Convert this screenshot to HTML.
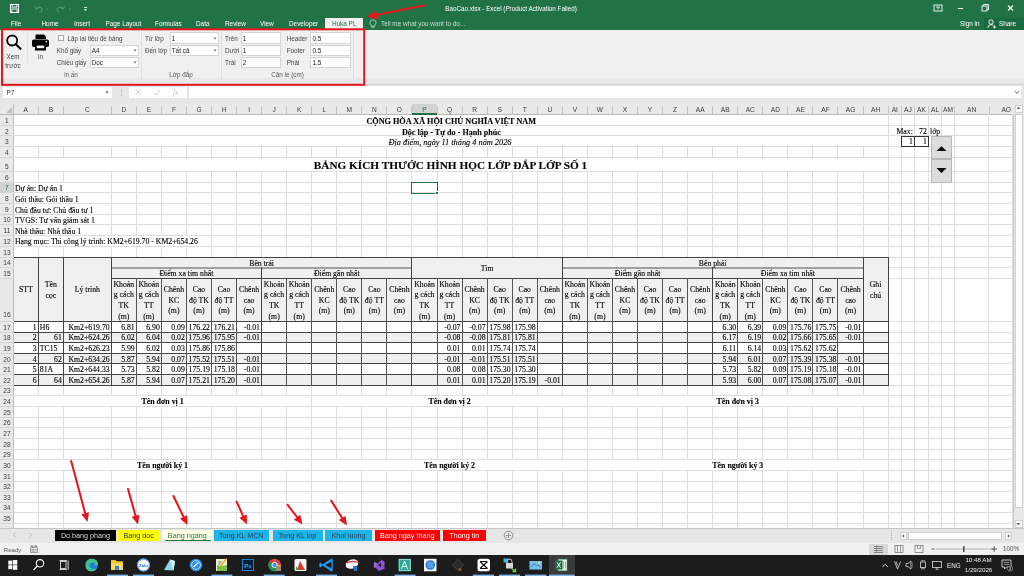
<!DOCTYPE html><html><head><meta charset="utf-8"><title>BaoCao.xlsx - Excel</title>
<style>
html{background:#fff;}
html,body{margin:0;padding:0;}
body{width:1024px;height:576px;overflow:hidden;position:relative;will-change:transform;font-family:"Liberation Sans",sans-serif;}
div{box-sizing:border-box;}
.s{font-family:"Liberation Serif",serif;}
.t{-webkit-text-stroke:0.12px currentColor;}
</style></head><body>
<div style="position:absolute;left:0.00px;top:0.00px;width:1024.00px;height:29.50px;background:#217346;"></div>
<svg style="position:absolute;left:9px;top:3px" width="11" height="11" viewBox="0 0 11 11"><rect x="1.5" y="1.5" width="8" height="8" fill="none" stroke="#fff" stroke-width="1.1"/><rect x="3.2" y="1.5" width="4.6" height="2.6" fill="none" stroke="#fff" stroke-width="0.9"/><rect x="3" y="6" width="5" height="3.5" fill="none" stroke="#fff" stroke-width="0.9"/></svg>
<svg style="position:absolute;left:33px;top:4px" width="60" height="10" viewBox="0 0 60 10">
<path d="M3 4.5 Q7 1.5 9 5 Q9.5 8 6.5 8.5" fill="none" stroke="#5f9c7a" stroke-width="1"/><path d="M1.5 2.5 L3 5 L5.5 3.8" fill="none" stroke="#5f9c7a" stroke-width="1"/>
<path d="M13 5 h2" stroke="#5f9c7a" stroke-width="0.8"/>
<path d="M30 4.5 Q26 1.5 24 5 Q23.5 8 26.5 8.5" fill="none" stroke="#5f9c7a" stroke-width="1"/><path d="M31.5 2.5 L30 5 L27.5 3.8" fill="none" stroke="#5f9c7a" stroke-width="1"/>
<path d="M36 5 h2" stroke="#5f9c7a" stroke-width="0.8"/>
<path d="M51 3.5 h3" stroke="#fff" stroke-width="0.8"/><path d="M51 5.2 L52.5 7 L54 5.2 Z" fill="#fff"/>
</svg>
<div style="position:absolute;left:511.00px;top:4.52px;line-height:7.56px;font-size:6.3px;font-family:'Liberation Sans',sans-serif;color:#fff;font-weight:normal;white-space:nowrap;transform:translateX(-50%);">BaoCao.xlsx - Excel (Product Activation Failed)</div>
<svg style="position:absolute;left:930px;top:2px" width="94" height="12" viewBox="0 0 94 12">
<rect x="4" y="3" width="8" height="6" fill="none" stroke="#fff" stroke-width="0.9"/><path d="M6 5 h4 M8 5 v2.5" stroke="#fff" stroke-width="0.8"/>
<path d="M28 6.5 h5" stroke="#fff" stroke-width="1"/>
<rect x="52" y="4" width="5" height="5" fill="none" stroke="#fff" stroke-width="0.9"/><path d="M53.5 4 v-1.5 h5 v5 h-1.5" fill="none" stroke="#fff" stroke-width="0.9"/>
<path d="M78 3.5 l5 5 M83 3.5 l-5 5" stroke="#fff" stroke-width="1.1"/>
</svg>
<div style="position:absolute;left:11.00px;top:20.46px;line-height:7.68px;font-size:6.4px;font-family:'Liberation Sans',sans-serif;color:#fff;font-weight:normal;white-space:nowrap;">File</div>
<div style="position:absolute;left:41.50px;top:20.46px;line-height:7.68px;font-size:6.4px;font-family:'Liberation Sans',sans-serif;color:#fff;font-weight:normal;white-space:nowrap;">Home</div>
<div style="position:absolute;left:74.00px;top:20.46px;line-height:7.68px;font-size:6.4px;font-family:'Liberation Sans',sans-serif;color:#fff;font-weight:normal;white-space:nowrap;">Insert</div>
<div style="position:absolute;left:105.50px;top:20.46px;line-height:7.68px;font-size:6.4px;font-family:'Liberation Sans',sans-serif;color:#fff;font-weight:normal;white-space:nowrap;">Page Layout</div>
<div style="position:absolute;left:155.00px;top:20.46px;line-height:7.68px;font-size:6.4px;font-family:'Liberation Sans',sans-serif;color:#fff;font-weight:normal;white-space:nowrap;">Formulas</div>
<div style="position:absolute;left:196.00px;top:20.46px;line-height:7.68px;font-size:6.4px;font-family:'Liberation Sans',sans-serif;color:#fff;font-weight:normal;white-space:nowrap;">Data</div>
<div style="position:absolute;left:225.00px;top:20.46px;line-height:7.68px;font-size:6.4px;font-family:'Liberation Sans',sans-serif;color:#fff;font-weight:normal;white-space:nowrap;">Review</div>
<div style="position:absolute;left:260.00px;top:20.46px;line-height:7.68px;font-size:6.4px;font-family:'Liberation Sans',sans-serif;color:#fff;font-weight:normal;white-space:nowrap;">View</div>
<div style="position:absolute;left:289.00px;top:20.46px;line-height:7.68px;font-size:6.4px;font-family:'Liberation Sans',sans-serif;color:#fff;font-weight:normal;white-space:nowrap;">Developer</div>
<div style="position:absolute;left:325.20px;top:17.60px;width:38.10px;height:12.00px;background:#f0f0f0;"></div>
<div style="position:absolute;left:344.20px;top:20.46px;line-height:7.68px;font-size:6.4px;font-family:'Liberation Sans',sans-serif;color:#217346;font-weight:normal;white-space:nowrap;transform:translateX(-50%);">Huka PL</div>
<svg style="position:absolute;left:369px;top:19px" width="8" height="10" viewBox="0 0 8 10"><path d="M2.2 6.2 Q0.8 4.8 1 3.2 Q1.3 0.9 4 0.8 Q6.7 0.9 7 3.2 Q7.2 4.8 5.8 6.2 V7.2 H2.2 Z" fill="none" stroke="#c9ddd0" stroke-width="0.8"/><path d="M2.6 8.3 h2.8" stroke="#c9ddd0" stroke-width="0.8"/></svg>
<div style="position:absolute;left:381.00px;top:20.46px;line-height:7.68px;font-size:6.4px;font-family:'Liberation Sans',sans-serif;color:#c9ddd0;font-weight:normal;white-space:nowrap;">Tell me what you want to do...</div>
<div style="position:absolute;left:960.00px;top:20.46px;line-height:7.68px;font-size:6.4px;font-family:'Liberation Sans',sans-serif;color:#fff;font-weight:normal;white-space:nowrap;">Sign in</div>
<div style="position:absolute;left:984.00px;top:17.50px;width:40.00px;height:12.00px;background:#1b6a3f;"></div>
<svg style="position:absolute;left:987px;top:19px" width="10" height="10" viewBox="0 0 10 10"><circle cx="4" cy="3" r="2.2" fill="none" stroke="#fff" stroke-width="0.9"/><path d="M0.8 9 Q1 5.6 4 5.6 Q5.8 5.6 6.6 6.8" fill="none" stroke="#fff" stroke-width="0.9"/><path d="M7.5 6.5 v3 M6 8 h3" stroke="#fff" stroke-width="0.9"/></svg>
<div style="position:absolute;left:999.00px;top:20.46px;line-height:7.68px;font-size:6.4px;font-family:'Liberation Sans',sans-serif;color:#fff;font-weight:normal;white-space:nowrap;">Share</div>
<div style="position:absolute;left:0.00px;top:29.50px;width:1024.00px;height:48.00px;background:#f0f0f0;"></div>
<div style="position:absolute;left:0.00px;top:78.20px;width:1024.00px;height:6.80px;background:#e8e8e8;"></div>
<div style="position:absolute;left:0.00px;top:84.40px;width:1024.00px;height:1.00px;background:#d2d2d2;"></div>
<svg style="position:absolute;left:5px;top:34px" width="18" height="16" viewBox="0 0 18 16"><circle cx="7.2" cy="6.5" r="5" fill="none" stroke="#000" stroke-width="1.8"/><path d="M10.8 10.2 L15.5 14.8" stroke="#000" stroke-width="2.1" stroke-linecap="round"/></svg>
<div style="position:absolute;left:13.00px;top:53.22px;line-height:7.56px;font-size:6.3px;font-family:'Liberation Sans',sans-serif;color:#444;font-weight:normal;white-space:nowrap;transform:translateX(-50%);">Xem</div>
<div style="position:absolute;left:13.00px;top:61.72px;line-height:7.56px;font-size:6.3px;font-family:'Liberation Sans',sans-serif;color:#444;font-weight:normal;white-space:nowrap;transform:translateX(-50%);">trước</div>
<svg style="position:absolute;left:31px;top:33px" width="19" height="19" viewBox="0 0 19 19"><path d="M4.5 1.5 h8.5 l2 2 v2.5 h-10.5 z" fill="#000"/><rect x="1" y="6.5" width="17" height="7.5" rx="1.8" fill="#000"/><rect x="4" y="11" width="11" height="6.5" fill="#000"/><rect x="5.8" y="12.6" width="7.4" height="2.6" fill="#fff"/><circle cx="15.3" cy="8.6" r="0.8" fill="#fff"/></svg>
<div style="position:absolute;left:40.50px;top:53.22px;line-height:7.56px;font-size:6.3px;font-family:'Liberation Sans',sans-serif;color:#444;font-weight:normal;white-space:nowrap;transform:translateX(-50%);">in</div>
<div style="position:absolute;left:27.00px;top:33.00px;width:1.00px;height:30.00px;background:#e2e2e2;"></div>
<div style="position:absolute;left:58.40px;top:35.40px;width:6.00px;height:5.50px;background:#fff;border:0.8px solid #a8a8a8;"></div>
<div style="position:absolute;left:67.60px;top:34.72px;line-height:7.56px;font-size:6.3px;font-family:'Liberation Sans',sans-serif;color:#444;font-weight:normal;white-space:nowrap;">Lặp lại tiêu đề bảng</div>
<div style="position:absolute;left:56.70px;top:47.02px;line-height:7.56px;font-size:6.3px;font-family:'Liberation Sans',sans-serif;color:#444;font-weight:normal;white-space:nowrap;">Khổ giấy</div>
<div style="position:absolute;left:56.70px;top:59.32px;line-height:7.56px;font-size:6.3px;font-family:'Liberation Sans',sans-serif;color:#444;font-weight:normal;white-space:nowrap;">Chiều giấy</div>
<div style="position:absolute;left:89.50px;top:44.70px;width:49.80px;height:11.40px;background:#fff;border:0.8px solid #d4d4d4;"></div>
<div style="position:absolute;left:91.70px;top:47.06px;line-height:7.68px;font-size:6.4px;font-family:'Liberation Sans',sans-serif;color:#222;font-weight:normal;white-space:nowrap;">A4</div>
<svg style="position:absolute;left:133.30px;top:48.90px" width="4" height="3" viewBox="0 0 4 3"><path d="M0.3 0.6 h3.4 L2 2.4 z" fill="#777"/></svg>
<div style="position:absolute;left:89.50px;top:57.00px;width:49.80px;height:11.20px;background:#fff;border:0.8px solid #d4d4d4;"></div>
<div style="position:absolute;left:91.70px;top:59.26px;line-height:7.68px;font-size:6.4px;font-family:'Liberation Sans',sans-serif;color:#222;font-weight:normal;white-space:nowrap;">Dọc</div>
<svg style="position:absolute;left:133.30px;top:61.10px" width="4" height="3" viewBox="0 0 4 3"><path d="M0.3 0.6 h3.4 L2 2.4 z" fill="#777"/></svg>
<div style="position:absolute;left:71.00px;top:71.32px;line-height:7.56px;font-size:6.3px;font-family:'Liberation Sans',sans-serif;color:#555;font-weight:normal;white-space:nowrap;transform:translateX(-50%);">in ấn</div>
<div style="position:absolute;left:141.40px;top:32.00px;width:0.80px;height:47.00px;background:#dcdcdc;"></div>
<div style="position:absolute;left:144.90px;top:34.72px;line-height:7.56px;font-size:6.3px;font-family:'Liberation Sans',sans-serif;color:#444;font-weight:normal;white-space:nowrap;">Từ lớp</div>
<div style="position:absolute;left:144.90px;top:47.02px;line-height:7.56px;font-size:6.3px;font-family:'Liberation Sans',sans-serif;color:#444;font-weight:normal;white-space:nowrap;">Đến lớp</div>
<div style="position:absolute;left:169.50px;top:32.40px;width:49.50px;height:11.40px;background:#fff;border:0.8px solid #d4d4d4;"></div>
<div style="position:absolute;left:171.70px;top:34.76px;line-height:7.68px;font-size:6.4px;font-family:'Liberation Sans',sans-serif;color:#222;font-weight:normal;white-space:nowrap;">1</div>
<svg style="position:absolute;left:213.00px;top:36.60px" width="4" height="3" viewBox="0 0 4 3"><path d="M0.3 0.6 h3.4 L2 2.4 z" fill="#777"/></svg>
<div style="position:absolute;left:169.50px;top:44.70px;width:49.50px;height:11.40px;background:#fff;border:0.8px solid #d4d4d4;"></div>
<div style="position:absolute;left:171.70px;top:47.06px;line-height:7.68px;font-size:6.4px;font-family:'Liberation Sans',sans-serif;color:#222;font-weight:normal;white-space:nowrap;">Tất cả</div>
<svg style="position:absolute;left:213.00px;top:48.90px" width="4" height="3" viewBox="0 0 4 3"><path d="M0.3 0.6 h3.4 L2 2.4 z" fill="#777"/></svg>
<div style="position:absolute;left:181.00px;top:71.32px;line-height:7.56px;font-size:6.3px;font-family:'Liberation Sans',sans-serif;color:#555;font-weight:normal;white-space:nowrap;transform:translateX(-50%);">Lớp đắp</div>
<div style="position:absolute;left:221.40px;top:32.00px;width:0.80px;height:47.00px;background:#dcdcdc;"></div>
<div style="position:absolute;left:225.00px;top:34.72px;line-height:7.56px;font-size:6.3px;font-family:'Liberation Sans',sans-serif;color:#444;font-weight:normal;white-space:nowrap;">Trên</div>
<div style="position:absolute;left:225.00px;top:46.92px;line-height:7.56px;font-size:6.3px;font-family:'Liberation Sans',sans-serif;color:#444;font-weight:normal;white-space:nowrap;">Dưới</div>
<div style="position:absolute;left:225.00px;top:59.02px;line-height:7.56px;font-size:6.3px;font-family:'Liberation Sans',sans-serif;color:#444;font-weight:normal;white-space:nowrap;">Trái</div>
<div style="position:absolute;left:240.60px;top:32.40px;width:40.60px;height:11.20px;background:#fff;border:0.8px solid #d4d4d4;"></div>
<div style="position:absolute;left:242.80px;top:34.66px;line-height:7.68px;font-size:6.4px;font-family:'Liberation Sans',sans-serif;color:#222;font-weight:normal;white-space:nowrap;">1</div>
<div style="position:absolute;left:240.60px;top:44.80px;width:40.60px;height:11.20px;background:#fff;border:0.8px solid #d4d4d4;"></div>
<div style="position:absolute;left:242.80px;top:47.06px;line-height:7.68px;font-size:6.4px;font-family:'Liberation Sans',sans-serif;color:#222;font-weight:normal;white-space:nowrap;">1</div>
<div style="position:absolute;left:240.60px;top:57.00px;width:40.60px;height:11.20px;background:#fff;border:0.8px solid #d4d4d4;"></div>
<div style="position:absolute;left:242.80px;top:59.26px;line-height:7.68px;font-size:6.4px;font-family:'Liberation Sans',sans-serif;color:#222;font-weight:normal;white-space:nowrap;">2</div>
<div style="position:absolute;left:286.70px;top:34.72px;line-height:7.56px;font-size:6.3px;font-family:'Liberation Sans',sans-serif;color:#444;font-weight:normal;white-space:nowrap;">Header</div>
<div style="position:absolute;left:286.70px;top:46.92px;line-height:7.56px;font-size:6.3px;font-family:'Liberation Sans',sans-serif;color:#444;font-weight:normal;white-space:nowrap;">Footer</div>
<div style="position:absolute;left:286.70px;top:59.02px;line-height:7.56px;font-size:6.3px;font-family:'Liberation Sans',sans-serif;color:#444;font-weight:normal;white-space:nowrap;">Phải</div>
<div style="position:absolute;left:310.20px;top:32.40px;width:41.30px;height:11.20px;background:#fff;border:0.8px solid #d4d4d4;"></div>
<div style="position:absolute;left:312.40px;top:34.66px;line-height:7.68px;font-size:6.4px;font-family:'Liberation Sans',sans-serif;color:#222;font-weight:normal;white-space:nowrap;">0.5</div>
<div style="position:absolute;left:310.20px;top:44.80px;width:41.30px;height:11.20px;background:#fff;border:0.8px solid #d4d4d4;"></div>
<div style="position:absolute;left:312.40px;top:47.06px;line-height:7.68px;font-size:6.4px;font-family:'Liberation Sans',sans-serif;color:#222;font-weight:normal;white-space:nowrap;">0.5</div>
<div style="position:absolute;left:310.20px;top:57.00px;width:41.30px;height:11.20px;background:#fff;border:0.8px solid #d4d4d4;"></div>
<div style="position:absolute;left:312.40px;top:59.26px;line-height:7.68px;font-size:6.4px;font-family:'Liberation Sans',sans-serif;color:#222;font-weight:normal;white-space:nowrap;">1.5</div>
<div style="position:absolute;left:287.50px;top:71.32px;line-height:7.56px;font-size:6.3px;font-family:'Liberation Sans',sans-serif;color:#555;font-weight:normal;white-space:nowrap;transform:translateX(-50%);">Căn lề (cm)</div>
<div style="position:absolute;left:353.40px;top:32.00px;width:0.80px;height:47.00px;background:#dcdcdc;"></div>
<div style="position:absolute;left:0.00px;top:85.40px;width:1024.00px;height:18.80px;background:#e6e6e6;"></div>
<div style="position:absolute;left:2.90px;top:86.80px;width:109.40px;height:11.50px;background:#fff;"></div>
<div style="position:absolute;left:6.50px;top:88.76px;line-height:7.68px;font-size:6.4px;font-family:'Liberation Sans',sans-serif;color:#333;font-weight:normal;white-space:nowrap;">P7</div>
<svg style="position:absolute;left:105px;top:91px" width="4" height="3" viewBox="0 0 4 3"><path d="M0.3 0.6 h3.4 L2 2.4 z" fill="#555"/></svg>
<div style="position:absolute;left:120.50px;top:89.00px;width:0.80px;height:0.90px;background:#b5b5b5;"></div>
<div style="position:absolute;left:120.50px;top:91.00px;width:0.80px;height:0.90px;background:#b5b5b5;"></div>
<div style="position:absolute;left:120.50px;top:93.00px;width:0.80px;height:0.90px;background:#b5b5b5;"></div>
<div style="position:absolute;left:120.50px;top:95.00px;width:0.80px;height:0.90px;background:#b5b5b5;"></div>
<div style="position:absolute;left:129.20px;top:86.80px;width:57.50px;height:11.50px;background:#fff;"></div>
<svg style="position:absolute;left:133px;top:88px" width="50" height="9" viewBox="0 0 50 9"><path d="M2.5 1.8 l5 5 M7.5 1.8 l-5 5" stroke="#c4c4c4" stroke-width="0.9"/><path d="M21 4.8 l2 2 l4 -5" fill="none" stroke="#c4c4c4" stroke-width="0.9"/><text x="40" y="7.3" font-family="Liberation Serif" font-style="italic" font-size="7.5" fill="#c4c4c4">fx</text></svg>
<div style="position:absolute;left:189.40px;top:85.80px;width:832.10px;height:12.40px;background:#fff;"></div>
<svg style="position:absolute;left:1014px;top:90px" width="6" height="5" viewBox="0 0 6 5"><path d="M0.8 1 L3 3.4 L5.2 1" fill="none" stroke="#555" stroke-width="0.9"/></svg>
<div style="position:absolute;left:0.00px;top:103.80px;width:1013.00px;height:10.90px;background:#e9e9e9;"></div>
<div style="position:absolute;left:0.00px;top:114.20px;width:1013.00px;height:0.90px;background:#b9b9b9;"></div>
<svg style="position:absolute;left:5px;top:106px" width="8" height="8" viewBox="0 0 8 8"><path d="M7 1 V7 H1 Z" fill="#bdbdbd"/></svg>
<div style="position:absolute;left:13.00px;top:103.80px;width:0.90px;height:10.90px;background:#bdbdbd;"></div>
<div style="position:absolute;left:37.75px;top:105.50px;width:0.90px;height:8.70px;background:#c6c6c6;"></div>
<div style="position:absolute;left:25.82px;top:106.04px;line-height:7.92px;font-size:6.6px;font-family:'Liberation Sans',sans-serif;color:#3a3a3a;font-weight:normal;white-space:nowrap;transform:translateX(-50%);">A</div>
<div style="position:absolute;left:62.90px;top:105.50px;width:0.90px;height:8.70px;background:#c6c6c6;"></div>
<div style="position:absolute;left:50.83px;top:106.04px;line-height:7.92px;font-size:6.6px;font-family:'Liberation Sans',sans-serif;color:#3a3a3a;font-weight:normal;white-space:nowrap;transform:translateX(-50%);">B</div>
<div style="position:absolute;left:110.75px;top:105.50px;width:0.90px;height:8.70px;background:#c6c6c6;"></div>
<div style="position:absolute;left:87.33px;top:106.04px;line-height:7.92px;font-size:6.6px;font-family:'Liberation Sans',sans-serif;color:#3a3a3a;font-weight:normal;white-space:nowrap;transform:translateX(-50%);">C</div>
<div style="position:absolute;left:135.81px;top:105.50px;width:0.90px;height:8.70px;background:#c6c6c6;"></div>
<div style="position:absolute;left:123.78px;top:106.04px;line-height:7.92px;font-size:6.6px;font-family:'Liberation Sans',sans-serif;color:#3a3a3a;font-weight:normal;white-space:nowrap;transform:translateX(-50%);">D</div>
<div style="position:absolute;left:160.87px;top:105.50px;width:0.90px;height:8.70px;background:#c6c6c6;"></div>
<div style="position:absolute;left:148.84px;top:106.04px;line-height:7.92px;font-size:6.6px;font-family:'Liberation Sans',sans-serif;color:#3a3a3a;font-weight:normal;white-space:nowrap;transform:translateX(-50%);">E</div>
<div style="position:absolute;left:185.93px;top:105.50px;width:0.90px;height:8.70px;background:#c6c6c6;"></div>
<div style="position:absolute;left:173.90px;top:106.04px;line-height:7.92px;font-size:6.6px;font-family:'Liberation Sans',sans-serif;color:#3a3a3a;font-weight:normal;white-space:nowrap;transform:translateX(-50%);">F</div>
<div style="position:absolute;left:210.99px;top:105.50px;width:0.90px;height:8.70px;background:#c6c6c6;"></div>
<div style="position:absolute;left:198.96px;top:106.04px;line-height:7.92px;font-size:6.6px;font-family:'Liberation Sans',sans-serif;color:#3a3a3a;font-weight:normal;white-space:nowrap;transform:translateX(-50%);">G</div>
<div style="position:absolute;left:236.05px;top:105.50px;width:0.90px;height:8.70px;background:#c6c6c6;"></div>
<div style="position:absolute;left:224.02px;top:106.04px;line-height:7.92px;font-size:6.6px;font-family:'Liberation Sans',sans-serif;color:#3a3a3a;font-weight:normal;white-space:nowrap;transform:translateX(-50%);">H</div>
<div style="position:absolute;left:261.11px;top:105.50px;width:0.90px;height:8.70px;background:#c6c6c6;"></div>
<div style="position:absolute;left:249.08px;top:106.04px;line-height:7.92px;font-size:6.6px;font-family:'Liberation Sans',sans-serif;color:#3a3a3a;font-weight:normal;white-space:nowrap;transform:translateX(-50%);">I</div>
<div style="position:absolute;left:286.17px;top:105.50px;width:0.90px;height:8.70px;background:#c6c6c6;"></div>
<div style="position:absolute;left:274.14px;top:106.04px;line-height:7.92px;font-size:6.6px;font-family:'Liberation Sans',sans-serif;color:#3a3a3a;font-weight:normal;white-space:nowrap;transform:translateX(-50%);">J</div>
<div style="position:absolute;left:311.23px;top:105.50px;width:0.90px;height:8.70px;background:#c6c6c6;"></div>
<div style="position:absolute;left:299.20px;top:106.04px;line-height:7.92px;font-size:6.6px;font-family:'Liberation Sans',sans-serif;color:#3a3a3a;font-weight:normal;white-space:nowrap;transform:translateX(-50%);">K</div>
<div style="position:absolute;left:336.29px;top:105.50px;width:0.90px;height:8.70px;background:#c6c6c6;"></div>
<div style="position:absolute;left:324.26px;top:106.04px;line-height:7.92px;font-size:6.6px;font-family:'Liberation Sans',sans-serif;color:#3a3a3a;font-weight:normal;white-space:nowrap;transform:translateX(-50%);">L</div>
<div style="position:absolute;left:361.35px;top:105.50px;width:0.90px;height:8.70px;background:#c6c6c6;"></div>
<div style="position:absolute;left:349.32px;top:106.04px;line-height:7.92px;font-size:6.6px;font-family:'Liberation Sans',sans-serif;color:#3a3a3a;font-weight:normal;white-space:nowrap;transform:translateX(-50%);">M</div>
<div style="position:absolute;left:386.41px;top:105.50px;width:0.90px;height:8.70px;background:#c6c6c6;"></div>
<div style="position:absolute;left:374.38px;top:106.04px;line-height:7.92px;font-size:6.6px;font-family:'Liberation Sans',sans-serif;color:#3a3a3a;font-weight:normal;white-space:nowrap;transform:translateX(-50%);">N</div>
<div style="position:absolute;left:411.47px;top:105.50px;width:0.90px;height:8.70px;background:#c6c6c6;"></div>
<div style="position:absolute;left:399.44px;top:106.04px;line-height:7.92px;font-size:6.6px;font-family:'Liberation Sans',sans-serif;color:#3a3a3a;font-weight:normal;white-space:nowrap;transform:translateX(-50%);">O</div>
<div style="position:absolute;left:411.97px;top:103.80px;width:25.06px;height:10.90px;background:#d3d3d3;"></div>
<div style="position:absolute;left:411.97px;top:113.20px;width:25.06px;height:1.60px;background:#217346;"></div>
<div style="position:absolute;left:436.53px;top:105.50px;width:0.90px;height:8.70px;background:#c6c6c6;"></div>
<div style="position:absolute;left:424.50px;top:106.04px;line-height:7.92px;font-size:6.6px;font-family:'Liberation Sans',sans-serif;color:#217346;font-weight:normal;white-space:nowrap;transform:translateX(-50%);">P</div>
<div style="position:absolute;left:461.59px;top:105.50px;width:0.90px;height:8.70px;background:#c6c6c6;"></div>
<div style="position:absolute;left:449.56px;top:106.04px;line-height:7.92px;font-size:6.6px;font-family:'Liberation Sans',sans-serif;color:#3a3a3a;font-weight:normal;white-space:nowrap;transform:translateX(-50%);">Q</div>
<div style="position:absolute;left:486.65px;top:105.50px;width:0.90px;height:8.70px;background:#c6c6c6;"></div>
<div style="position:absolute;left:474.62px;top:106.04px;line-height:7.92px;font-size:6.6px;font-family:'Liberation Sans',sans-serif;color:#3a3a3a;font-weight:normal;white-space:nowrap;transform:translateX(-50%);">R</div>
<div style="position:absolute;left:511.71px;top:105.50px;width:0.90px;height:8.70px;background:#c6c6c6;"></div>
<div style="position:absolute;left:499.68px;top:106.04px;line-height:7.92px;font-size:6.6px;font-family:'Liberation Sans',sans-serif;color:#3a3a3a;font-weight:normal;white-space:nowrap;transform:translateX(-50%);">S</div>
<div style="position:absolute;left:536.77px;top:105.50px;width:0.90px;height:8.70px;background:#c6c6c6;"></div>
<div style="position:absolute;left:524.74px;top:106.04px;line-height:7.92px;font-size:6.6px;font-family:'Liberation Sans',sans-serif;color:#3a3a3a;font-weight:normal;white-space:nowrap;transform:translateX(-50%);">T</div>
<div style="position:absolute;left:561.83px;top:105.50px;width:0.90px;height:8.70px;background:#c6c6c6;"></div>
<div style="position:absolute;left:549.80px;top:106.04px;line-height:7.92px;font-size:6.6px;font-family:'Liberation Sans',sans-serif;color:#3a3a3a;font-weight:normal;white-space:nowrap;transform:translateX(-50%);">U</div>
<div style="position:absolute;left:586.89px;top:105.50px;width:0.90px;height:8.70px;background:#c6c6c6;"></div>
<div style="position:absolute;left:574.86px;top:106.04px;line-height:7.92px;font-size:6.6px;font-family:'Liberation Sans',sans-serif;color:#3a3a3a;font-weight:normal;white-space:nowrap;transform:translateX(-50%);">V</div>
<div style="position:absolute;left:611.95px;top:105.50px;width:0.90px;height:8.70px;background:#c6c6c6;"></div>
<div style="position:absolute;left:599.92px;top:106.04px;line-height:7.92px;font-size:6.6px;font-family:'Liberation Sans',sans-serif;color:#3a3a3a;font-weight:normal;white-space:nowrap;transform:translateX(-50%);">W</div>
<div style="position:absolute;left:637.01px;top:105.50px;width:0.90px;height:8.70px;background:#c6c6c6;"></div>
<div style="position:absolute;left:624.98px;top:106.04px;line-height:7.92px;font-size:6.6px;font-family:'Liberation Sans',sans-serif;color:#3a3a3a;font-weight:normal;white-space:nowrap;transform:translateX(-50%);">X</div>
<div style="position:absolute;left:662.07px;top:105.50px;width:0.90px;height:8.70px;background:#c6c6c6;"></div>
<div style="position:absolute;left:650.04px;top:106.04px;line-height:7.92px;font-size:6.6px;font-family:'Liberation Sans',sans-serif;color:#3a3a3a;font-weight:normal;white-space:nowrap;transform:translateX(-50%);">Y</div>
<div style="position:absolute;left:687.13px;top:105.50px;width:0.90px;height:8.70px;background:#c6c6c6;"></div>
<div style="position:absolute;left:675.10px;top:106.04px;line-height:7.92px;font-size:6.6px;font-family:'Liberation Sans',sans-serif;color:#3a3a3a;font-weight:normal;white-space:nowrap;transform:translateX(-50%);">Z</div>
<div style="position:absolute;left:712.19px;top:105.50px;width:0.90px;height:8.70px;background:#c6c6c6;"></div>
<div style="position:absolute;left:700.16px;top:106.04px;line-height:7.92px;font-size:6.6px;font-family:'Liberation Sans',sans-serif;color:#3a3a3a;font-weight:normal;white-space:nowrap;transform:translateX(-50%);">AA</div>
<div style="position:absolute;left:737.25px;top:105.50px;width:0.90px;height:8.70px;background:#c6c6c6;"></div>
<div style="position:absolute;left:725.22px;top:106.04px;line-height:7.92px;font-size:6.6px;font-family:'Liberation Sans',sans-serif;color:#3a3a3a;font-weight:normal;white-space:nowrap;transform:translateX(-50%);">AB</div>
<div style="position:absolute;left:762.31px;top:105.50px;width:0.90px;height:8.70px;background:#c6c6c6;"></div>
<div style="position:absolute;left:750.28px;top:106.04px;line-height:7.92px;font-size:6.6px;font-family:'Liberation Sans',sans-serif;color:#3a3a3a;font-weight:normal;white-space:nowrap;transform:translateX(-50%);">AC</div>
<div style="position:absolute;left:787.37px;top:105.50px;width:0.90px;height:8.70px;background:#c6c6c6;"></div>
<div style="position:absolute;left:775.34px;top:106.04px;line-height:7.92px;font-size:6.6px;font-family:'Liberation Sans',sans-serif;color:#3a3a3a;font-weight:normal;white-space:nowrap;transform:translateX(-50%);">AD</div>
<div style="position:absolute;left:812.43px;top:105.50px;width:0.90px;height:8.70px;background:#c6c6c6;"></div>
<div style="position:absolute;left:800.40px;top:106.04px;line-height:7.92px;font-size:6.6px;font-family:'Liberation Sans',sans-serif;color:#3a3a3a;font-weight:normal;white-space:nowrap;transform:translateX(-50%);">AE</div>
<div style="position:absolute;left:837.49px;top:105.50px;width:0.90px;height:8.70px;background:#c6c6c6;"></div>
<div style="position:absolute;left:825.46px;top:106.04px;line-height:7.92px;font-size:6.6px;font-family:'Liberation Sans',sans-serif;color:#3a3a3a;font-weight:normal;white-space:nowrap;transform:translateX(-50%);">AF</div>
<div style="position:absolute;left:862.55px;top:105.50px;width:0.90px;height:8.70px;background:#c6c6c6;"></div>
<div style="position:absolute;left:850.52px;top:106.04px;line-height:7.92px;font-size:6.6px;font-family:'Liberation Sans',sans-serif;color:#3a3a3a;font-weight:normal;white-space:nowrap;transform:translateX(-50%);">AG</div>
<div style="position:absolute;left:887.61px;top:105.50px;width:0.90px;height:8.70px;background:#c6c6c6;"></div>
<div style="position:absolute;left:875.58px;top:106.04px;line-height:7.92px;font-size:6.6px;font-family:'Liberation Sans',sans-serif;color:#3a3a3a;font-weight:normal;white-space:nowrap;transform:translateX(-50%);">AH</div>
<div style="position:absolute;left:901.00px;top:105.50px;width:0.90px;height:8.70px;background:#c6c6c6;"></div>
<div style="position:absolute;left:894.81px;top:106.04px;line-height:7.92px;font-size:6.6px;font-family:'Liberation Sans',sans-serif;color:#3a3a3a;font-weight:normal;white-space:nowrap;transform:translateX(-50%);">AI</div>
<div style="position:absolute;left:913.90px;top:105.50px;width:0.90px;height:8.70px;background:#c6c6c6;"></div>
<div style="position:absolute;left:907.95px;top:106.04px;line-height:7.92px;font-size:6.6px;font-family:'Liberation Sans',sans-serif;color:#3a3a3a;font-weight:normal;white-space:nowrap;transform:translateX(-50%);">AJ</div>
<div style="position:absolute;left:927.90px;top:105.50px;width:0.90px;height:8.70px;background:#c6c6c6;"></div>
<div style="position:absolute;left:921.40px;top:106.04px;line-height:7.92px;font-size:6.6px;font-family:'Liberation Sans',sans-serif;color:#3a3a3a;font-weight:normal;white-space:nowrap;transform:translateX(-50%);">AK</div>
<div style="position:absolute;left:941.20px;top:105.50px;width:0.90px;height:8.70px;background:#c6c6c6;"></div>
<div style="position:absolute;left:935.05px;top:106.04px;line-height:7.92px;font-size:6.6px;font-family:'Liberation Sans',sans-serif;color:#3a3a3a;font-weight:normal;white-space:nowrap;transform:translateX(-50%);">AL</div>
<div style="position:absolute;left:953.70px;top:105.50px;width:0.90px;height:8.70px;background:#c6c6c6;"></div>
<div style="position:absolute;left:947.95px;top:106.04px;line-height:7.92px;font-size:6.6px;font-family:'Liberation Sans',sans-serif;color:#3a3a3a;font-weight:normal;white-space:nowrap;transform:translateX(-50%);">AM</div>
<div style="position:absolute;left:988.50px;top:105.50px;width:0.90px;height:8.70px;background:#c6c6c6;"></div>
<div style="position:absolute;left:971.60px;top:106.04px;line-height:7.92px;font-size:6.6px;font-family:'Liberation Sans',sans-serif;color:#3a3a3a;font-weight:normal;white-space:nowrap;transform:translateX(-50%);">AN</div>
<div style="position:absolute;left:1012.50px;top:105.50px;width:0.90px;height:8.70px;background:#c6c6c6;"></div>
<div style="position:absolute;left:1011.00px;top:106.04px;line-height:7.92px;font-size:6.6px;font-family:'Liberation Sans',sans-serif;color:#3a3a3a;font-weight:normal;white-space:nowrap;transform:translateX(-100%);">AO</div>
<svg style="position:absolute;left:0;top:0" width="1024" height="576" viewBox="0 0 1024 576" shape-rendering="crispEdges"><rect x="0" y="114.70" width="13.4" height="413.30" fill="#e9e9e9"/><rect x="0" y="182.30" width="13.4" height="10.64" fill="#d3d3d3"/><rect x="12.6" y="182.30" width="1.2" height="10.64" fill="#217346"/><rect x="13.0" y="114.70" width="0.8" height="413.30" fill="#bdbdbd"/><rect x="0" y="125" width="13" height="1" fill="#d4d4d4"/><rect x="13" y="125" width="1000" height="1" fill="#dedede"/><rect x="0" y="135" width="13" height="1" fill="#d4d4d4"/><rect x="13" y="135" width="1000" height="1" fill="#dedede"/><rect x="0" y="146" width="13" height="1" fill="#d4d4d4"/><rect x="13" y="146" width="1000" height="1" fill="#dedede"/><rect x="0" y="157" width="13" height="1" fill="#d4d4d4"/><rect x="13" y="157" width="1000" height="1" fill="#dedede"/><rect x="0" y="171" width="13" height="1" fill="#d4d4d4"/><rect x="13" y="171" width="1000" height="1" fill="#dedede"/><rect x="0" y="182" width="13" height="1" fill="#d4d4d4"/><rect x="13" y="182" width="1000" height="1" fill="#dedede"/><rect x="0" y="192" width="13" height="1" fill="#d4d4d4"/><rect x="13" y="192" width="1000" height="1" fill="#dedede"/><rect x="0" y="203" width="13" height="1" fill="#d4d4d4"/><rect x="13" y="203" width="1000" height="1" fill="#dedede"/><rect x="0" y="214" width="13" height="1" fill="#d4d4d4"/><rect x="13" y="214" width="1000" height="1" fill="#dedede"/><rect x="0" y="224" width="13" height="1" fill="#d4d4d4"/><rect x="13" y="224" width="1000" height="1" fill="#dedede"/><rect x="0" y="235" width="13" height="1" fill="#d4d4d4"/><rect x="13" y="235" width="1000" height="1" fill="#dedede"/><rect x="0" y="246" width="13" height="1" fill="#d4d4d4"/><rect x="13" y="246" width="1000" height="1" fill="#dedede"/><rect x="0" y="257" width="13" height="1" fill="#d4d4d4"/><rect x="13" y="257" width="1000" height="1" fill="#dedede"/><rect x="0" y="267" width="13" height="1" fill="#d4d4d4"/><rect x="13" y="267" width="1000" height="1" fill="#dedede"/><rect x="0" y="278" width="13" height="1" fill="#d4d4d4"/><rect x="13" y="278" width="1000" height="1" fill="#dedede"/><rect x="0" y="321" width="13" height="1" fill="#d4d4d4"/><rect x="13" y="321" width="1000" height="1" fill="#dedede"/><rect x="0" y="332" width="13" height="1" fill="#d4d4d4"/><rect x="13" y="332" width="1000" height="1" fill="#dedede"/><rect x="0" y="342" width="13" height="1" fill="#d4d4d4"/><rect x="13" y="342" width="1000" height="1" fill="#dedede"/><rect x="0" y="353" width="13" height="1" fill="#d4d4d4"/><rect x="13" y="353" width="1000" height="1" fill="#dedede"/><rect x="0" y="363" width="13" height="1" fill="#d4d4d4"/><rect x="13" y="363" width="1000" height="1" fill="#dedede"/><rect x="0" y="374" width="13" height="1" fill="#d4d4d4"/><rect x="13" y="374" width="1000" height="1" fill="#dedede"/><rect x="0" y="385" width="13" height="1" fill="#d4d4d4"/><rect x="13" y="385" width="1000" height="1" fill="#dedede"/><rect x="0" y="395" width="13" height="1" fill="#d4d4d4"/><rect x="13" y="395" width="1000" height="1" fill="#dedede"/><rect x="0" y="406" width="13" height="1" fill="#d4d4d4"/><rect x="13" y="406" width="1000" height="1" fill="#dedede"/><rect x="0" y="417" width="13" height="1" fill="#d4d4d4"/><rect x="13" y="417" width="1000" height="1" fill="#dedede"/><rect x="0" y="427" width="13" height="1" fill="#d4d4d4"/><rect x="13" y="427" width="1000" height="1" fill="#dedede"/><rect x="0" y="438" width="13" height="1" fill="#d4d4d4"/><rect x="13" y="438" width="1000" height="1" fill="#dedede"/><rect x="0" y="449" width="13" height="1" fill="#d4d4d4"/><rect x="13" y="449" width="1000" height="1" fill="#dedede"/><rect x="0" y="459" width="13" height="1" fill="#d4d4d4"/><rect x="13" y="459" width="1000" height="1" fill="#dedede"/><rect x="0" y="470" width="13" height="1" fill="#d4d4d4"/><rect x="13" y="470" width="1000" height="1" fill="#dedede"/><rect x="0" y="481" width="13" height="1" fill="#d4d4d4"/><rect x="13" y="481" width="1000" height="1" fill="#dedede"/><rect x="0" y="491" width="13" height="1" fill="#d4d4d4"/><rect x="13" y="491" width="1000" height="1" fill="#dedede"/><rect x="0" y="502" width="13" height="1" fill="#d4d4d4"/><rect x="13" y="502" width="1000" height="1" fill="#dedede"/><rect x="0" y="512" width="13" height="1" fill="#d4d4d4"/><rect x="13" y="512" width="1000" height="1" fill="#dedede"/><rect x="0" y="523" width="13" height="1" fill="#d4d4d4"/><rect x="13" y="523" width="1000" height="1" fill="#dedede"/><rect x="38" y="146" width="1" height="11" fill="#dedede"/><rect x="38" y="171" width="1" height="11" fill="#dedede"/><rect x="38" y="246" width="1" height="11" fill="#dedede"/><rect x="38" y="385" width="1" height="10" fill="#dedede"/><rect x="38" y="406" width="1" height="11" fill="#dedede"/><rect x="38" y="417" width="1" height="10" fill="#dedede"/><rect x="38" y="427" width="1" height="11" fill="#dedede"/><rect x="38" y="438" width="1" height="11" fill="#dedede"/><rect x="38" y="449" width="1" height="10" fill="#dedede"/><rect x="38" y="470" width="1" height="11" fill="#dedede"/><rect x="38" y="481" width="1" height="10" fill="#dedede"/><rect x="38" y="491" width="1" height="11" fill="#dedede"/><rect x="38" y="502" width="1" height="10" fill="#dedede"/><rect x="38" y="512" width="1" height="11" fill="#dedede"/><rect x="38" y="523" width="1" height="5" fill="#dedede"/><rect x="63" y="146" width="1" height="11" fill="#dedede"/><rect x="63" y="171" width="1" height="11" fill="#dedede"/><rect x="63" y="246" width="1" height="11" fill="#dedede"/><rect x="63" y="385" width="1" height="10" fill="#dedede"/><rect x="63" y="406" width="1" height="11" fill="#dedede"/><rect x="63" y="417" width="1" height="10" fill="#dedede"/><rect x="63" y="427" width="1" height="11" fill="#dedede"/><rect x="63" y="438" width="1" height="11" fill="#dedede"/><rect x="63" y="449" width="1" height="10" fill="#dedede"/><rect x="63" y="470" width="1" height="11" fill="#dedede"/><rect x="63" y="481" width="1" height="10" fill="#dedede"/><rect x="63" y="491" width="1" height="11" fill="#dedede"/><rect x="63" y="502" width="1" height="10" fill="#dedede"/><rect x="63" y="512" width="1" height="11" fill="#dedede"/><rect x="63" y="523" width="1" height="5" fill="#dedede"/><rect x="111" y="146" width="1" height="11" fill="#dedede"/><rect x="111" y="171" width="1" height="11" fill="#dedede"/><rect x="111" y="182" width="1" height="10" fill="#dedede"/><rect x="111" y="192" width="1" height="11" fill="#dedede"/><rect x="111" y="203" width="1" height="11" fill="#dedede"/><rect x="111" y="214" width="1" height="10" fill="#dedede"/><rect x="111" y="224" width="1" height="11" fill="#dedede"/><rect x="111" y="246" width="1" height="11" fill="#dedede"/><rect x="111" y="385" width="1" height="10" fill="#dedede"/><rect x="111" y="406" width="1" height="11" fill="#dedede"/><rect x="111" y="417" width="1" height="10" fill="#dedede"/><rect x="111" y="427" width="1" height="11" fill="#dedede"/><rect x="111" y="438" width="1" height="11" fill="#dedede"/><rect x="111" y="449" width="1" height="10" fill="#dedede"/><rect x="111" y="470" width="1" height="11" fill="#dedede"/><rect x="111" y="481" width="1" height="10" fill="#dedede"/><rect x="111" y="491" width="1" height="11" fill="#dedede"/><rect x="111" y="502" width="1" height="10" fill="#dedede"/><rect x="111" y="512" width="1" height="11" fill="#dedede"/><rect x="111" y="523" width="1" height="5" fill="#dedede"/><rect x="136" y="146" width="1" height="11" fill="#dedede"/><rect x="136" y="171" width="1" height="11" fill="#dedede"/><rect x="136" y="182" width="1" height="10" fill="#dedede"/><rect x="136" y="192" width="1" height="11" fill="#dedede"/><rect x="136" y="203" width="1" height="11" fill="#dedede"/><rect x="136" y="214" width="1" height="10" fill="#dedede"/><rect x="136" y="224" width="1" height="11" fill="#dedede"/><rect x="136" y="246" width="1" height="11" fill="#dedede"/><rect x="136" y="385" width="1" height="10" fill="#dedede"/><rect x="136" y="406" width="1" height="11" fill="#dedede"/><rect x="136" y="417" width="1" height="10" fill="#dedede"/><rect x="136" y="427" width="1" height="11" fill="#dedede"/><rect x="136" y="438" width="1" height="11" fill="#dedede"/><rect x="136" y="449" width="1" height="10" fill="#dedede"/><rect x="136" y="470" width="1" height="11" fill="#dedede"/><rect x="136" y="481" width="1" height="10" fill="#dedede"/><rect x="136" y="491" width="1" height="11" fill="#dedede"/><rect x="136" y="502" width="1" height="10" fill="#dedede"/><rect x="136" y="512" width="1" height="11" fill="#dedede"/><rect x="136" y="523" width="1" height="5" fill="#dedede"/><rect x="161" y="146" width="1" height="11" fill="#dedede"/><rect x="161" y="171" width="1" height="11" fill="#dedede"/><rect x="161" y="182" width="1" height="10" fill="#dedede"/><rect x="161" y="192" width="1" height="11" fill="#dedede"/><rect x="161" y="203" width="1" height="11" fill="#dedede"/><rect x="161" y="214" width="1" height="10" fill="#dedede"/><rect x="161" y="224" width="1" height="11" fill="#dedede"/><rect x="161" y="246" width="1" height="11" fill="#dedede"/><rect x="161" y="385" width="1" height="10" fill="#dedede"/><rect x="161" y="406" width="1" height="11" fill="#dedede"/><rect x="161" y="417" width="1" height="10" fill="#dedede"/><rect x="161" y="427" width="1" height="11" fill="#dedede"/><rect x="161" y="438" width="1" height="11" fill="#dedede"/><rect x="161" y="449" width="1" height="10" fill="#dedede"/><rect x="161" y="470" width="1" height="11" fill="#dedede"/><rect x="161" y="481" width="1" height="10" fill="#dedede"/><rect x="161" y="491" width="1" height="11" fill="#dedede"/><rect x="161" y="502" width="1" height="10" fill="#dedede"/><rect x="161" y="512" width="1" height="11" fill="#dedede"/><rect x="161" y="523" width="1" height="5" fill="#dedede"/><rect x="186" y="146" width="1" height="11" fill="#dedede"/><rect x="186" y="171" width="1" height="11" fill="#dedede"/><rect x="186" y="182" width="1" height="10" fill="#dedede"/><rect x="186" y="192" width="1" height="11" fill="#dedede"/><rect x="186" y="203" width="1" height="11" fill="#dedede"/><rect x="186" y="214" width="1" height="10" fill="#dedede"/><rect x="186" y="224" width="1" height="11" fill="#dedede"/><rect x="186" y="246" width="1" height="11" fill="#dedede"/><rect x="186" y="385" width="1" height="10" fill="#dedede"/><rect x="186" y="406" width="1" height="11" fill="#dedede"/><rect x="186" y="417" width="1" height="10" fill="#dedede"/><rect x="186" y="427" width="1" height="11" fill="#dedede"/><rect x="186" y="438" width="1" height="11" fill="#dedede"/><rect x="186" y="449" width="1" height="10" fill="#dedede"/><rect x="186" y="470" width="1" height="11" fill="#dedede"/><rect x="186" y="481" width="1" height="10" fill="#dedede"/><rect x="186" y="491" width="1" height="11" fill="#dedede"/><rect x="186" y="502" width="1" height="10" fill="#dedede"/><rect x="186" y="512" width="1" height="11" fill="#dedede"/><rect x="186" y="523" width="1" height="5" fill="#dedede"/><rect x="211" y="146" width="1" height="11" fill="#dedede"/><rect x="211" y="171" width="1" height="11" fill="#dedede"/><rect x="211" y="182" width="1" height="10" fill="#dedede"/><rect x="211" y="192" width="1" height="11" fill="#dedede"/><rect x="211" y="203" width="1" height="11" fill="#dedede"/><rect x="211" y="214" width="1" height="10" fill="#dedede"/><rect x="211" y="224" width="1" height="11" fill="#dedede"/><rect x="211" y="235" width="1" height="11" fill="#dedede"/><rect x="211" y="246" width="1" height="11" fill="#dedede"/><rect x="211" y="385" width="1" height="10" fill="#dedede"/><rect x="211" y="406" width="1" height="11" fill="#dedede"/><rect x="211" y="417" width="1" height="10" fill="#dedede"/><rect x="211" y="427" width="1" height="11" fill="#dedede"/><rect x="211" y="438" width="1" height="11" fill="#dedede"/><rect x="211" y="449" width="1" height="10" fill="#dedede"/><rect x="211" y="470" width="1" height="11" fill="#dedede"/><rect x="211" y="481" width="1" height="10" fill="#dedede"/><rect x="211" y="491" width="1" height="11" fill="#dedede"/><rect x="211" y="502" width="1" height="10" fill="#dedede"/><rect x="211" y="512" width="1" height="11" fill="#dedede"/><rect x="211" y="523" width="1" height="5" fill="#dedede"/><rect x="236" y="146" width="1" height="11" fill="#dedede"/><rect x="236" y="171" width="1" height="11" fill="#dedede"/><rect x="236" y="182" width="1" height="10" fill="#dedede"/><rect x="236" y="192" width="1" height="11" fill="#dedede"/><rect x="236" y="203" width="1" height="11" fill="#dedede"/><rect x="236" y="214" width="1" height="10" fill="#dedede"/><rect x="236" y="224" width="1" height="11" fill="#dedede"/><rect x="236" y="235" width="1" height="11" fill="#dedede"/><rect x="236" y="246" width="1" height="11" fill="#dedede"/><rect x="236" y="385" width="1" height="10" fill="#dedede"/><rect x="236" y="406" width="1" height="11" fill="#dedede"/><rect x="236" y="417" width="1" height="10" fill="#dedede"/><rect x="236" y="427" width="1" height="11" fill="#dedede"/><rect x="236" y="438" width="1" height="11" fill="#dedede"/><rect x="236" y="449" width="1" height="10" fill="#dedede"/><rect x="236" y="470" width="1" height="11" fill="#dedede"/><rect x="236" y="481" width="1" height="10" fill="#dedede"/><rect x="236" y="491" width="1" height="11" fill="#dedede"/><rect x="236" y="502" width="1" height="10" fill="#dedede"/><rect x="236" y="512" width="1" height="11" fill="#dedede"/><rect x="236" y="523" width="1" height="5" fill="#dedede"/><rect x="261" y="146" width="1" height="11" fill="#dedede"/><rect x="261" y="171" width="1" height="11" fill="#dedede"/><rect x="261" y="182" width="1" height="10" fill="#dedede"/><rect x="261" y="192" width="1" height="11" fill="#dedede"/><rect x="261" y="203" width="1" height="11" fill="#dedede"/><rect x="261" y="214" width="1" height="10" fill="#dedede"/><rect x="261" y="224" width="1" height="11" fill="#dedede"/><rect x="261" y="235" width="1" height="11" fill="#dedede"/><rect x="261" y="246" width="1" height="11" fill="#dedede"/><rect x="261" y="385" width="1" height="10" fill="#dedede"/><rect x="261" y="406" width="1" height="11" fill="#dedede"/><rect x="261" y="417" width="1" height="10" fill="#dedede"/><rect x="261" y="427" width="1" height="11" fill="#dedede"/><rect x="261" y="438" width="1" height="11" fill="#dedede"/><rect x="261" y="449" width="1" height="10" fill="#dedede"/><rect x="261" y="470" width="1" height="11" fill="#dedede"/><rect x="261" y="481" width="1" height="10" fill="#dedede"/><rect x="261" y="491" width="1" height="11" fill="#dedede"/><rect x="261" y="502" width="1" height="10" fill="#dedede"/><rect x="261" y="512" width="1" height="11" fill="#dedede"/><rect x="261" y="523" width="1" height="5" fill="#dedede"/><rect x="286" y="146" width="1" height="11" fill="#dedede"/><rect x="286" y="171" width="1" height="11" fill="#dedede"/><rect x="286" y="182" width="1" height="10" fill="#dedede"/><rect x="286" y="192" width="1" height="11" fill="#dedede"/><rect x="286" y="203" width="1" height="11" fill="#dedede"/><rect x="286" y="214" width="1" height="10" fill="#dedede"/><rect x="286" y="224" width="1" height="11" fill="#dedede"/><rect x="286" y="235" width="1" height="11" fill="#dedede"/><rect x="286" y="246" width="1" height="11" fill="#dedede"/><rect x="286" y="385" width="1" height="10" fill="#dedede"/><rect x="286" y="406" width="1" height="11" fill="#dedede"/><rect x="286" y="417" width="1" height="10" fill="#dedede"/><rect x="286" y="427" width="1" height="11" fill="#dedede"/><rect x="286" y="438" width="1" height="11" fill="#dedede"/><rect x="286" y="449" width="1" height="10" fill="#dedede"/><rect x="286" y="470" width="1" height="11" fill="#dedede"/><rect x="286" y="481" width="1" height="10" fill="#dedede"/><rect x="286" y="491" width="1" height="11" fill="#dedede"/><rect x="286" y="502" width="1" height="10" fill="#dedede"/><rect x="286" y="512" width="1" height="11" fill="#dedede"/><rect x="286" y="523" width="1" height="5" fill="#dedede"/><rect x="311" y="146" width="1" height="11" fill="#dedede"/><rect x="311" y="171" width="1" height="11" fill="#dedede"/><rect x="311" y="182" width="1" height="10" fill="#dedede"/><rect x="311" y="192" width="1" height="11" fill="#dedede"/><rect x="311" y="203" width="1" height="11" fill="#dedede"/><rect x="311" y="214" width="1" height="10" fill="#dedede"/><rect x="311" y="224" width="1" height="11" fill="#dedede"/><rect x="311" y="235" width="1" height="11" fill="#dedede"/><rect x="311" y="246" width="1" height="11" fill="#dedede"/><rect x="311" y="385" width="1" height="10" fill="#dedede"/><rect x="311" y="395" width="1" height="11" fill="#dedede"/><rect x="311" y="406" width="1" height="11" fill="#dedede"/><rect x="311" y="417" width="1" height="10" fill="#dedede"/><rect x="311" y="427" width="1" height="11" fill="#dedede"/><rect x="311" y="438" width="1" height="11" fill="#dedede"/><rect x="311" y="449" width="1" height="10" fill="#dedede"/><rect x="311" y="459" width="1" height="11" fill="#dedede"/><rect x="311" y="470" width="1" height="11" fill="#dedede"/><rect x="311" y="481" width="1" height="10" fill="#dedede"/><rect x="311" y="491" width="1" height="11" fill="#dedede"/><rect x="311" y="502" width="1" height="10" fill="#dedede"/><rect x="311" y="512" width="1" height="11" fill="#dedede"/><rect x="311" y="523" width="1" height="5" fill="#dedede"/><rect x="336" y="146" width="1" height="11" fill="#dedede"/><rect x="336" y="171" width="1" height="11" fill="#dedede"/><rect x="336" y="182" width="1" height="10" fill="#dedede"/><rect x="336" y="192" width="1" height="11" fill="#dedede"/><rect x="336" y="203" width="1" height="11" fill="#dedede"/><rect x="336" y="214" width="1" height="10" fill="#dedede"/><rect x="336" y="224" width="1" height="11" fill="#dedede"/><rect x="336" y="235" width="1" height="11" fill="#dedede"/><rect x="336" y="246" width="1" height="11" fill="#dedede"/><rect x="336" y="385" width="1" height="10" fill="#dedede"/><rect x="336" y="406" width="1" height="11" fill="#dedede"/><rect x="336" y="417" width="1" height="10" fill="#dedede"/><rect x="336" y="427" width="1" height="11" fill="#dedede"/><rect x="336" y="438" width="1" height="11" fill="#dedede"/><rect x="336" y="449" width="1" height="10" fill="#dedede"/><rect x="336" y="470" width="1" height="11" fill="#dedede"/><rect x="336" y="481" width="1" height="10" fill="#dedede"/><rect x="336" y="491" width="1" height="11" fill="#dedede"/><rect x="336" y="502" width="1" height="10" fill="#dedede"/><rect x="336" y="512" width="1" height="11" fill="#dedede"/><rect x="336" y="523" width="1" height="5" fill="#dedede"/><rect x="361" y="146" width="1" height="11" fill="#dedede"/><rect x="361" y="171" width="1" height="11" fill="#dedede"/><rect x="361" y="182" width="1" height="10" fill="#dedede"/><rect x="361" y="192" width="1" height="11" fill="#dedede"/><rect x="361" y="203" width="1" height="11" fill="#dedede"/><rect x="361" y="214" width="1" height="10" fill="#dedede"/><rect x="361" y="224" width="1" height="11" fill="#dedede"/><rect x="361" y="235" width="1" height="11" fill="#dedede"/><rect x="361" y="246" width="1" height="11" fill="#dedede"/><rect x="361" y="385" width="1" height="10" fill="#dedede"/><rect x="361" y="406" width="1" height="11" fill="#dedede"/><rect x="361" y="417" width="1" height="10" fill="#dedede"/><rect x="361" y="427" width="1" height="11" fill="#dedede"/><rect x="361" y="438" width="1" height="11" fill="#dedede"/><rect x="361" y="449" width="1" height="10" fill="#dedede"/><rect x="361" y="470" width="1" height="11" fill="#dedede"/><rect x="361" y="481" width="1" height="10" fill="#dedede"/><rect x="361" y="491" width="1" height="11" fill="#dedede"/><rect x="361" y="502" width="1" height="10" fill="#dedede"/><rect x="361" y="512" width="1" height="11" fill="#dedede"/><rect x="361" y="523" width="1" height="5" fill="#dedede"/><rect x="386" y="146" width="1" height="11" fill="#dedede"/><rect x="386" y="171" width="1" height="11" fill="#dedede"/><rect x="386" y="182" width="1" height="10" fill="#dedede"/><rect x="386" y="192" width="1" height="11" fill="#dedede"/><rect x="386" y="203" width="1" height="11" fill="#dedede"/><rect x="386" y="214" width="1" height="10" fill="#dedede"/><rect x="386" y="224" width="1" height="11" fill="#dedede"/><rect x="386" y="235" width="1" height="11" fill="#dedede"/><rect x="386" y="246" width="1" height="11" fill="#dedede"/><rect x="386" y="385" width="1" height="10" fill="#dedede"/><rect x="386" y="406" width="1" height="11" fill="#dedede"/><rect x="386" y="417" width="1" height="10" fill="#dedede"/><rect x="386" y="427" width="1" height="11" fill="#dedede"/><rect x="386" y="438" width="1" height="11" fill="#dedede"/><rect x="386" y="449" width="1" height="10" fill="#dedede"/><rect x="386" y="470" width="1" height="11" fill="#dedede"/><rect x="386" y="481" width="1" height="10" fill="#dedede"/><rect x="386" y="491" width="1" height="11" fill="#dedede"/><rect x="386" y="502" width="1" height="10" fill="#dedede"/><rect x="386" y="512" width="1" height="11" fill="#dedede"/><rect x="386" y="523" width="1" height="5" fill="#dedede"/><rect x="411" y="146" width="1" height="11" fill="#dedede"/><rect x="411" y="171" width="1" height="11" fill="#dedede"/><rect x="411" y="182" width="1" height="10" fill="#dedede"/><rect x="411" y="192" width="1" height="11" fill="#dedede"/><rect x="411" y="203" width="1" height="11" fill="#dedede"/><rect x="411" y="214" width="1" height="10" fill="#dedede"/><rect x="411" y="224" width="1" height="11" fill="#dedede"/><rect x="411" y="235" width="1" height="11" fill="#dedede"/><rect x="411" y="246" width="1" height="11" fill="#dedede"/><rect x="411" y="385" width="1" height="10" fill="#dedede"/><rect x="411" y="406" width="1" height="11" fill="#dedede"/><rect x="411" y="417" width="1" height="10" fill="#dedede"/><rect x="411" y="427" width="1" height="11" fill="#dedede"/><rect x="411" y="438" width="1" height="11" fill="#dedede"/><rect x="411" y="449" width="1" height="10" fill="#dedede"/><rect x="411" y="470" width="1" height="11" fill="#dedede"/><rect x="411" y="481" width="1" height="10" fill="#dedede"/><rect x="411" y="491" width="1" height="11" fill="#dedede"/><rect x="411" y="502" width="1" height="10" fill="#dedede"/><rect x="411" y="512" width="1" height="11" fill="#dedede"/><rect x="411" y="523" width="1" height="5" fill="#dedede"/><rect x="437" y="146" width="1" height="11" fill="#dedede"/><rect x="437" y="171" width="1" height="11" fill="#dedede"/><rect x="437" y="182" width="1" height="10" fill="#dedede"/><rect x="437" y="192" width="1" height="11" fill="#dedede"/><rect x="437" y="203" width="1" height="11" fill="#dedede"/><rect x="437" y="214" width="1" height="10" fill="#dedede"/><rect x="437" y="224" width="1" height="11" fill="#dedede"/><rect x="437" y="235" width="1" height="11" fill="#dedede"/><rect x="437" y="246" width="1" height="11" fill="#dedede"/><rect x="437" y="385" width="1" height="10" fill="#dedede"/><rect x="437" y="406" width="1" height="11" fill="#dedede"/><rect x="437" y="417" width="1" height="10" fill="#dedede"/><rect x="437" y="427" width="1" height="11" fill="#dedede"/><rect x="437" y="438" width="1" height="11" fill="#dedede"/><rect x="437" y="449" width="1" height="10" fill="#dedede"/><rect x="437" y="470" width="1" height="11" fill="#dedede"/><rect x="437" y="481" width="1" height="10" fill="#dedede"/><rect x="437" y="491" width="1" height="11" fill="#dedede"/><rect x="437" y="502" width="1" height="10" fill="#dedede"/><rect x="437" y="512" width="1" height="11" fill="#dedede"/><rect x="437" y="523" width="1" height="5" fill="#dedede"/><rect x="462" y="146" width="1" height="11" fill="#dedede"/><rect x="462" y="171" width="1" height="11" fill="#dedede"/><rect x="462" y="182" width="1" height="10" fill="#dedede"/><rect x="462" y="192" width="1" height="11" fill="#dedede"/><rect x="462" y="203" width="1" height="11" fill="#dedede"/><rect x="462" y="214" width="1" height="10" fill="#dedede"/><rect x="462" y="224" width="1" height="11" fill="#dedede"/><rect x="462" y="235" width="1" height="11" fill="#dedede"/><rect x="462" y="246" width="1" height="11" fill="#dedede"/><rect x="462" y="385" width="1" height="10" fill="#dedede"/><rect x="462" y="406" width="1" height="11" fill="#dedede"/><rect x="462" y="417" width="1" height="10" fill="#dedede"/><rect x="462" y="427" width="1" height="11" fill="#dedede"/><rect x="462" y="438" width="1" height="11" fill="#dedede"/><rect x="462" y="449" width="1" height="10" fill="#dedede"/><rect x="462" y="470" width="1" height="11" fill="#dedede"/><rect x="462" y="481" width="1" height="10" fill="#dedede"/><rect x="462" y="491" width="1" height="11" fill="#dedede"/><rect x="462" y="502" width="1" height="10" fill="#dedede"/><rect x="462" y="512" width="1" height="11" fill="#dedede"/><rect x="462" y="523" width="1" height="5" fill="#dedede"/><rect x="487" y="146" width="1" height="11" fill="#dedede"/><rect x="487" y="171" width="1" height="11" fill="#dedede"/><rect x="487" y="182" width="1" height="10" fill="#dedede"/><rect x="487" y="192" width="1" height="11" fill="#dedede"/><rect x="487" y="203" width="1" height="11" fill="#dedede"/><rect x="487" y="214" width="1" height="10" fill="#dedede"/><rect x="487" y="224" width="1" height="11" fill="#dedede"/><rect x="487" y="235" width="1" height="11" fill="#dedede"/><rect x="487" y="246" width="1" height="11" fill="#dedede"/><rect x="487" y="385" width="1" height="10" fill="#dedede"/><rect x="487" y="406" width="1" height="11" fill="#dedede"/><rect x="487" y="417" width="1" height="10" fill="#dedede"/><rect x="487" y="427" width="1" height="11" fill="#dedede"/><rect x="487" y="438" width="1" height="11" fill="#dedede"/><rect x="487" y="449" width="1" height="10" fill="#dedede"/><rect x="487" y="470" width="1" height="11" fill="#dedede"/><rect x="487" y="481" width="1" height="10" fill="#dedede"/><rect x="487" y="491" width="1" height="11" fill="#dedede"/><rect x="487" y="502" width="1" height="10" fill="#dedede"/><rect x="487" y="512" width="1" height="11" fill="#dedede"/><rect x="487" y="523" width="1" height="5" fill="#dedede"/><rect x="512" y="146" width="1" height="11" fill="#dedede"/><rect x="512" y="171" width="1" height="11" fill="#dedede"/><rect x="512" y="182" width="1" height="10" fill="#dedede"/><rect x="512" y="192" width="1" height="11" fill="#dedede"/><rect x="512" y="203" width="1" height="11" fill="#dedede"/><rect x="512" y="214" width="1" height="10" fill="#dedede"/><rect x="512" y="224" width="1" height="11" fill="#dedede"/><rect x="512" y="235" width="1" height="11" fill="#dedede"/><rect x="512" y="246" width="1" height="11" fill="#dedede"/><rect x="512" y="385" width="1" height="10" fill="#dedede"/><rect x="512" y="406" width="1" height="11" fill="#dedede"/><rect x="512" y="417" width="1" height="10" fill="#dedede"/><rect x="512" y="427" width="1" height="11" fill="#dedede"/><rect x="512" y="438" width="1" height="11" fill="#dedede"/><rect x="512" y="449" width="1" height="10" fill="#dedede"/><rect x="512" y="470" width="1" height="11" fill="#dedede"/><rect x="512" y="481" width="1" height="10" fill="#dedede"/><rect x="512" y="491" width="1" height="11" fill="#dedede"/><rect x="512" y="502" width="1" height="10" fill="#dedede"/><rect x="512" y="512" width="1" height="11" fill="#dedede"/><rect x="512" y="523" width="1" height="5" fill="#dedede"/><rect x="537" y="146" width="1" height="11" fill="#dedede"/><rect x="537" y="171" width="1" height="11" fill="#dedede"/><rect x="537" y="182" width="1" height="10" fill="#dedede"/><rect x="537" y="192" width="1" height="11" fill="#dedede"/><rect x="537" y="203" width="1" height="11" fill="#dedede"/><rect x="537" y="214" width="1" height="10" fill="#dedede"/><rect x="537" y="224" width="1" height="11" fill="#dedede"/><rect x="537" y="235" width="1" height="11" fill="#dedede"/><rect x="537" y="246" width="1" height="11" fill="#dedede"/><rect x="537" y="385" width="1" height="10" fill="#dedede"/><rect x="537" y="406" width="1" height="11" fill="#dedede"/><rect x="537" y="417" width="1" height="10" fill="#dedede"/><rect x="537" y="427" width="1" height="11" fill="#dedede"/><rect x="537" y="438" width="1" height="11" fill="#dedede"/><rect x="537" y="449" width="1" height="10" fill="#dedede"/><rect x="537" y="470" width="1" height="11" fill="#dedede"/><rect x="537" y="481" width="1" height="10" fill="#dedede"/><rect x="537" y="491" width="1" height="11" fill="#dedede"/><rect x="537" y="502" width="1" height="10" fill="#dedede"/><rect x="537" y="512" width="1" height="11" fill="#dedede"/><rect x="537" y="523" width="1" height="5" fill="#dedede"/><rect x="562" y="146" width="1" height="11" fill="#dedede"/><rect x="562" y="171" width="1" height="11" fill="#dedede"/><rect x="562" y="182" width="1" height="10" fill="#dedede"/><rect x="562" y="192" width="1" height="11" fill="#dedede"/><rect x="562" y="203" width="1" height="11" fill="#dedede"/><rect x="562" y="214" width="1" height="10" fill="#dedede"/><rect x="562" y="224" width="1" height="11" fill="#dedede"/><rect x="562" y="235" width="1" height="11" fill="#dedede"/><rect x="562" y="246" width="1" height="11" fill="#dedede"/><rect x="562" y="385" width="1" height="10" fill="#dedede"/><rect x="562" y="406" width="1" height="11" fill="#dedede"/><rect x="562" y="417" width="1" height="10" fill="#dedede"/><rect x="562" y="427" width="1" height="11" fill="#dedede"/><rect x="562" y="438" width="1" height="11" fill="#dedede"/><rect x="562" y="449" width="1" height="10" fill="#dedede"/><rect x="562" y="470" width="1" height="11" fill="#dedede"/><rect x="562" y="481" width="1" height="10" fill="#dedede"/><rect x="562" y="491" width="1" height="11" fill="#dedede"/><rect x="562" y="502" width="1" height="10" fill="#dedede"/><rect x="562" y="512" width="1" height="11" fill="#dedede"/><rect x="562" y="523" width="1" height="5" fill="#dedede"/><rect x="587" y="146" width="1" height="11" fill="#dedede"/><rect x="587" y="171" width="1" height="11" fill="#dedede"/><rect x="587" y="182" width="1" height="10" fill="#dedede"/><rect x="587" y="192" width="1" height="11" fill="#dedede"/><rect x="587" y="203" width="1" height="11" fill="#dedede"/><rect x="587" y="214" width="1" height="10" fill="#dedede"/><rect x="587" y="224" width="1" height="11" fill="#dedede"/><rect x="587" y="235" width="1" height="11" fill="#dedede"/><rect x="587" y="246" width="1" height="11" fill="#dedede"/><rect x="587" y="385" width="1" height="10" fill="#dedede"/><rect x="587" y="395" width="1" height="11" fill="#dedede"/><rect x="587" y="406" width="1" height="11" fill="#dedede"/><rect x="587" y="417" width="1" height="10" fill="#dedede"/><rect x="587" y="427" width="1" height="11" fill="#dedede"/><rect x="587" y="438" width="1" height="11" fill="#dedede"/><rect x="587" y="449" width="1" height="10" fill="#dedede"/><rect x="587" y="459" width="1" height="11" fill="#dedede"/><rect x="587" y="470" width="1" height="11" fill="#dedede"/><rect x="587" y="481" width="1" height="10" fill="#dedede"/><rect x="587" y="491" width="1" height="11" fill="#dedede"/><rect x="587" y="502" width="1" height="10" fill="#dedede"/><rect x="587" y="512" width="1" height="11" fill="#dedede"/><rect x="587" y="523" width="1" height="5" fill="#dedede"/><rect x="612" y="146" width="1" height="11" fill="#dedede"/><rect x="612" y="171" width="1" height="11" fill="#dedede"/><rect x="612" y="182" width="1" height="10" fill="#dedede"/><rect x="612" y="192" width="1" height="11" fill="#dedede"/><rect x="612" y="203" width="1" height="11" fill="#dedede"/><rect x="612" y="214" width="1" height="10" fill="#dedede"/><rect x="612" y="224" width="1" height="11" fill="#dedede"/><rect x="612" y="235" width="1" height="11" fill="#dedede"/><rect x="612" y="246" width="1" height="11" fill="#dedede"/><rect x="612" y="385" width="1" height="10" fill="#dedede"/><rect x="612" y="406" width="1" height="11" fill="#dedede"/><rect x="612" y="417" width="1" height="10" fill="#dedede"/><rect x="612" y="427" width="1" height="11" fill="#dedede"/><rect x="612" y="438" width="1" height="11" fill="#dedede"/><rect x="612" y="449" width="1" height="10" fill="#dedede"/><rect x="612" y="470" width="1" height="11" fill="#dedede"/><rect x="612" y="481" width="1" height="10" fill="#dedede"/><rect x="612" y="491" width="1" height="11" fill="#dedede"/><rect x="612" y="502" width="1" height="10" fill="#dedede"/><rect x="612" y="512" width="1" height="11" fill="#dedede"/><rect x="612" y="523" width="1" height="5" fill="#dedede"/><rect x="637" y="146" width="1" height="11" fill="#dedede"/><rect x="637" y="171" width="1" height="11" fill="#dedede"/><rect x="637" y="182" width="1" height="10" fill="#dedede"/><rect x="637" y="192" width="1" height="11" fill="#dedede"/><rect x="637" y="203" width="1" height="11" fill="#dedede"/><rect x="637" y="214" width="1" height="10" fill="#dedede"/><rect x="637" y="224" width="1" height="11" fill="#dedede"/><rect x="637" y="235" width="1" height="11" fill="#dedede"/><rect x="637" y="246" width="1" height="11" fill="#dedede"/><rect x="637" y="385" width="1" height="10" fill="#dedede"/><rect x="637" y="406" width="1" height="11" fill="#dedede"/><rect x="637" y="417" width="1" height="10" fill="#dedede"/><rect x="637" y="427" width="1" height="11" fill="#dedede"/><rect x="637" y="438" width="1" height="11" fill="#dedede"/><rect x="637" y="449" width="1" height="10" fill="#dedede"/><rect x="637" y="470" width="1" height="11" fill="#dedede"/><rect x="637" y="481" width="1" height="10" fill="#dedede"/><rect x="637" y="491" width="1" height="11" fill="#dedede"/><rect x="637" y="502" width="1" height="10" fill="#dedede"/><rect x="637" y="512" width="1" height="11" fill="#dedede"/><rect x="637" y="523" width="1" height="5" fill="#dedede"/><rect x="662" y="146" width="1" height="11" fill="#dedede"/><rect x="662" y="171" width="1" height="11" fill="#dedede"/><rect x="662" y="182" width="1" height="10" fill="#dedede"/><rect x="662" y="192" width="1" height="11" fill="#dedede"/><rect x="662" y="203" width="1" height="11" fill="#dedede"/><rect x="662" y="214" width="1" height="10" fill="#dedede"/><rect x="662" y="224" width="1" height="11" fill="#dedede"/><rect x="662" y="235" width="1" height="11" fill="#dedede"/><rect x="662" y="246" width="1" height="11" fill="#dedede"/><rect x="662" y="385" width="1" height="10" fill="#dedede"/><rect x="662" y="406" width="1" height="11" fill="#dedede"/><rect x="662" y="417" width="1" height="10" fill="#dedede"/><rect x="662" y="427" width="1" height="11" fill="#dedede"/><rect x="662" y="438" width="1" height="11" fill="#dedede"/><rect x="662" y="449" width="1" height="10" fill="#dedede"/><rect x="662" y="470" width="1" height="11" fill="#dedede"/><rect x="662" y="481" width="1" height="10" fill="#dedede"/><rect x="662" y="491" width="1" height="11" fill="#dedede"/><rect x="662" y="502" width="1" height="10" fill="#dedede"/><rect x="662" y="512" width="1" height="11" fill="#dedede"/><rect x="662" y="523" width="1" height="5" fill="#dedede"/><rect x="687" y="146" width="1" height="11" fill="#dedede"/><rect x="687" y="171" width="1" height="11" fill="#dedede"/><rect x="687" y="182" width="1" height="10" fill="#dedede"/><rect x="687" y="192" width="1" height="11" fill="#dedede"/><rect x="687" y="203" width="1" height="11" fill="#dedede"/><rect x="687" y="214" width="1" height="10" fill="#dedede"/><rect x="687" y="224" width="1" height="11" fill="#dedede"/><rect x="687" y="235" width="1" height="11" fill="#dedede"/><rect x="687" y="246" width="1" height="11" fill="#dedede"/><rect x="687" y="385" width="1" height="10" fill="#dedede"/><rect x="687" y="406" width="1" height="11" fill="#dedede"/><rect x="687" y="417" width="1" height="10" fill="#dedede"/><rect x="687" y="427" width="1" height="11" fill="#dedede"/><rect x="687" y="438" width="1" height="11" fill="#dedede"/><rect x="687" y="449" width="1" height="10" fill="#dedede"/><rect x="687" y="470" width="1" height="11" fill="#dedede"/><rect x="687" y="481" width="1" height="10" fill="#dedede"/><rect x="687" y="491" width="1" height="11" fill="#dedede"/><rect x="687" y="502" width="1" height="10" fill="#dedede"/><rect x="687" y="512" width="1" height="11" fill="#dedede"/><rect x="687" y="523" width="1" height="5" fill="#dedede"/><rect x="712" y="146" width="1" height="11" fill="#dedede"/><rect x="712" y="171" width="1" height="11" fill="#dedede"/><rect x="712" y="182" width="1" height="10" fill="#dedede"/><rect x="712" y="192" width="1" height="11" fill="#dedede"/><rect x="712" y="203" width="1" height="11" fill="#dedede"/><rect x="712" y="214" width="1" height="10" fill="#dedede"/><rect x="712" y="224" width="1" height="11" fill="#dedede"/><rect x="712" y="235" width="1" height="11" fill="#dedede"/><rect x="712" y="246" width="1" height="11" fill="#dedede"/><rect x="712" y="385" width="1" height="10" fill="#dedede"/><rect x="712" y="406" width="1" height="11" fill="#dedede"/><rect x="712" y="417" width="1" height="10" fill="#dedede"/><rect x="712" y="427" width="1" height="11" fill="#dedede"/><rect x="712" y="438" width="1" height="11" fill="#dedede"/><rect x="712" y="449" width="1" height="10" fill="#dedede"/><rect x="712" y="470" width="1" height="11" fill="#dedede"/><rect x="712" y="481" width="1" height="10" fill="#dedede"/><rect x="712" y="491" width="1" height="11" fill="#dedede"/><rect x="712" y="502" width="1" height="10" fill="#dedede"/><rect x="712" y="512" width="1" height="11" fill="#dedede"/><rect x="712" y="523" width="1" height="5" fill="#dedede"/><rect x="737" y="146" width="1" height="11" fill="#dedede"/><rect x="737" y="171" width="1" height="11" fill="#dedede"/><rect x="737" y="182" width="1" height="10" fill="#dedede"/><rect x="737" y="192" width="1" height="11" fill="#dedede"/><rect x="737" y="203" width="1" height="11" fill="#dedede"/><rect x="737" y="214" width="1" height="10" fill="#dedede"/><rect x="737" y="224" width="1" height="11" fill="#dedede"/><rect x="737" y="235" width="1" height="11" fill="#dedede"/><rect x="737" y="246" width="1" height="11" fill="#dedede"/><rect x="737" y="385" width="1" height="10" fill="#dedede"/><rect x="737" y="406" width="1" height="11" fill="#dedede"/><rect x="737" y="417" width="1" height="10" fill="#dedede"/><rect x="737" y="427" width="1" height="11" fill="#dedede"/><rect x="737" y="438" width="1" height="11" fill="#dedede"/><rect x="737" y="449" width="1" height="10" fill="#dedede"/><rect x="737" y="470" width="1" height="11" fill="#dedede"/><rect x="737" y="481" width="1" height="10" fill="#dedede"/><rect x="737" y="491" width="1" height="11" fill="#dedede"/><rect x="737" y="502" width="1" height="10" fill="#dedede"/><rect x="737" y="512" width="1" height="11" fill="#dedede"/><rect x="737" y="523" width="1" height="5" fill="#dedede"/><rect x="762" y="146" width="1" height="11" fill="#dedede"/><rect x="762" y="171" width="1" height="11" fill="#dedede"/><rect x="762" y="182" width="1" height="10" fill="#dedede"/><rect x="762" y="192" width="1" height="11" fill="#dedede"/><rect x="762" y="203" width="1" height="11" fill="#dedede"/><rect x="762" y="214" width="1" height="10" fill="#dedede"/><rect x="762" y="224" width="1" height="11" fill="#dedede"/><rect x="762" y="235" width="1" height="11" fill="#dedede"/><rect x="762" y="246" width="1" height="11" fill="#dedede"/><rect x="762" y="385" width="1" height="10" fill="#dedede"/><rect x="762" y="406" width="1" height="11" fill="#dedede"/><rect x="762" y="417" width="1" height="10" fill="#dedede"/><rect x="762" y="427" width="1" height="11" fill="#dedede"/><rect x="762" y="438" width="1" height="11" fill="#dedede"/><rect x="762" y="449" width="1" height="10" fill="#dedede"/><rect x="762" y="470" width="1" height="11" fill="#dedede"/><rect x="762" y="481" width="1" height="10" fill="#dedede"/><rect x="762" y="491" width="1" height="11" fill="#dedede"/><rect x="762" y="502" width="1" height="10" fill="#dedede"/><rect x="762" y="512" width="1" height="11" fill="#dedede"/><rect x="762" y="523" width="1" height="5" fill="#dedede"/><rect x="787" y="146" width="1" height="11" fill="#dedede"/><rect x="787" y="171" width="1" height="11" fill="#dedede"/><rect x="787" y="182" width="1" height="10" fill="#dedede"/><rect x="787" y="192" width="1" height="11" fill="#dedede"/><rect x="787" y="203" width="1" height="11" fill="#dedede"/><rect x="787" y="214" width="1" height="10" fill="#dedede"/><rect x="787" y="224" width="1" height="11" fill="#dedede"/><rect x="787" y="235" width="1" height="11" fill="#dedede"/><rect x="787" y="246" width="1" height="11" fill="#dedede"/><rect x="787" y="385" width="1" height="10" fill="#dedede"/><rect x="787" y="406" width="1" height="11" fill="#dedede"/><rect x="787" y="417" width="1" height="10" fill="#dedede"/><rect x="787" y="427" width="1" height="11" fill="#dedede"/><rect x="787" y="438" width="1" height="11" fill="#dedede"/><rect x="787" y="449" width="1" height="10" fill="#dedede"/><rect x="787" y="470" width="1" height="11" fill="#dedede"/><rect x="787" y="481" width="1" height="10" fill="#dedede"/><rect x="787" y="491" width="1" height="11" fill="#dedede"/><rect x="787" y="502" width="1" height="10" fill="#dedede"/><rect x="787" y="512" width="1" height="11" fill="#dedede"/><rect x="787" y="523" width="1" height="5" fill="#dedede"/><rect x="812" y="146" width="1" height="11" fill="#dedede"/><rect x="812" y="171" width="1" height="11" fill="#dedede"/><rect x="812" y="182" width="1" height="10" fill="#dedede"/><rect x="812" y="192" width="1" height="11" fill="#dedede"/><rect x="812" y="203" width="1" height="11" fill="#dedede"/><rect x="812" y="214" width="1" height="10" fill="#dedede"/><rect x="812" y="224" width="1" height="11" fill="#dedede"/><rect x="812" y="235" width="1" height="11" fill="#dedede"/><rect x="812" y="246" width="1" height="11" fill="#dedede"/><rect x="812" y="385" width="1" height="10" fill="#dedede"/><rect x="812" y="406" width="1" height="11" fill="#dedede"/><rect x="812" y="417" width="1" height="10" fill="#dedede"/><rect x="812" y="427" width="1" height="11" fill="#dedede"/><rect x="812" y="438" width="1" height="11" fill="#dedede"/><rect x="812" y="449" width="1" height="10" fill="#dedede"/><rect x="812" y="470" width="1" height="11" fill="#dedede"/><rect x="812" y="481" width="1" height="10" fill="#dedede"/><rect x="812" y="491" width="1" height="11" fill="#dedede"/><rect x="812" y="502" width="1" height="10" fill="#dedede"/><rect x="812" y="512" width="1" height="11" fill="#dedede"/><rect x="812" y="523" width="1" height="5" fill="#dedede"/><rect x="837" y="146" width="1" height="11" fill="#dedede"/><rect x="837" y="171" width="1" height="11" fill="#dedede"/><rect x="837" y="182" width="1" height="10" fill="#dedede"/><rect x="837" y="192" width="1" height="11" fill="#dedede"/><rect x="837" y="203" width="1" height="11" fill="#dedede"/><rect x="837" y="214" width="1" height="10" fill="#dedede"/><rect x="837" y="224" width="1" height="11" fill="#dedede"/><rect x="837" y="235" width="1" height="11" fill="#dedede"/><rect x="837" y="246" width="1" height="11" fill="#dedede"/><rect x="837" y="385" width="1" height="10" fill="#dedede"/><rect x="837" y="406" width="1" height="11" fill="#dedede"/><rect x="837" y="417" width="1" height="10" fill="#dedede"/><rect x="837" y="427" width="1" height="11" fill="#dedede"/><rect x="837" y="438" width="1" height="11" fill="#dedede"/><rect x="837" y="449" width="1" height="10" fill="#dedede"/><rect x="837" y="470" width="1" height="11" fill="#dedede"/><rect x="837" y="481" width="1" height="10" fill="#dedede"/><rect x="837" y="491" width="1" height="11" fill="#dedede"/><rect x="837" y="502" width="1" height="10" fill="#dedede"/><rect x="837" y="512" width="1" height="11" fill="#dedede"/><rect x="837" y="523" width="1" height="5" fill="#dedede"/><rect x="863" y="146" width="1" height="11" fill="#dedede"/><rect x="863" y="171" width="1" height="11" fill="#dedede"/><rect x="863" y="182" width="1" height="10" fill="#dedede"/><rect x="863" y="192" width="1" height="11" fill="#dedede"/><rect x="863" y="203" width="1" height="11" fill="#dedede"/><rect x="863" y="214" width="1" height="10" fill="#dedede"/><rect x="863" y="224" width="1" height="11" fill="#dedede"/><rect x="863" y="235" width="1" height="11" fill="#dedede"/><rect x="863" y="246" width="1" height="11" fill="#dedede"/><rect x="863" y="385" width="1" height="10" fill="#dedede"/><rect x="863" y="406" width="1" height="11" fill="#dedede"/><rect x="863" y="417" width="1" height="10" fill="#dedede"/><rect x="863" y="427" width="1" height="11" fill="#dedede"/><rect x="863" y="438" width="1" height="11" fill="#dedede"/><rect x="863" y="449" width="1" height="10" fill="#dedede"/><rect x="863" y="470" width="1" height="11" fill="#dedede"/><rect x="863" y="481" width="1" height="10" fill="#dedede"/><rect x="863" y="491" width="1" height="11" fill="#dedede"/><rect x="863" y="502" width="1" height="10" fill="#dedede"/><rect x="863" y="512" width="1" height="11" fill="#dedede"/><rect x="863" y="523" width="1" height="5" fill="#dedede"/><rect x="888" y="114" width="1" height="11" fill="#dedede"/><rect x="888" y="125" width="1" height="10" fill="#dedede"/><rect x="888" y="135" width="1" height="11" fill="#dedede"/><rect x="888" y="146" width="1" height="11" fill="#dedede"/><rect x="888" y="157" width="1" height="14" fill="#dedede"/><rect x="888" y="171" width="1" height="11" fill="#dedede"/><rect x="888" y="182" width="1" height="10" fill="#dedede"/><rect x="888" y="192" width="1" height="11" fill="#dedede"/><rect x="888" y="203" width="1" height="11" fill="#dedede"/><rect x="888" y="214" width="1" height="10" fill="#dedede"/><rect x="888" y="224" width="1" height="11" fill="#dedede"/><rect x="888" y="235" width="1" height="11" fill="#dedede"/><rect x="888" y="246" width="1" height="11" fill="#dedede"/><rect x="888" y="385" width="1" height="10" fill="#dedede"/><rect x="888" y="395" width="1" height="11" fill="#dedede"/><rect x="888" y="406" width="1" height="11" fill="#dedede"/><rect x="888" y="417" width="1" height="10" fill="#dedede"/><rect x="888" y="427" width="1" height="11" fill="#dedede"/><rect x="888" y="438" width="1" height="11" fill="#dedede"/><rect x="888" y="449" width="1" height="10" fill="#dedede"/><rect x="888" y="459" width="1" height="11" fill="#dedede"/><rect x="888" y="470" width="1" height="11" fill="#dedede"/><rect x="888" y="481" width="1" height="10" fill="#dedede"/><rect x="888" y="491" width="1" height="11" fill="#dedede"/><rect x="888" y="502" width="1" height="10" fill="#dedede"/><rect x="888" y="512" width="1" height="11" fill="#dedede"/><rect x="888" y="523" width="1" height="5" fill="#dedede"/><rect x="901" y="114" width="1" height="11" fill="#dedede"/><rect x="901" y="125" width="1" height="10" fill="#dedede"/><rect x="901" y="135" width="1" height="11" fill="#dedede"/><rect x="901" y="146" width="1" height="11" fill="#dedede"/><rect x="901" y="157" width="1" height="14" fill="#dedede"/><rect x="901" y="171" width="1" height="11" fill="#dedede"/><rect x="901" y="182" width="1" height="10" fill="#dedede"/><rect x="901" y="192" width="1" height="11" fill="#dedede"/><rect x="901" y="203" width="1" height="11" fill="#dedede"/><rect x="901" y="214" width="1" height="10" fill="#dedede"/><rect x="901" y="224" width="1" height="11" fill="#dedede"/><rect x="901" y="235" width="1" height="11" fill="#dedede"/><rect x="901" y="246" width="1" height="11" fill="#dedede"/><rect x="901" y="257" width="1" height="10" fill="#dedede"/><rect x="901" y="267" width="1" height="11" fill="#dedede"/><rect x="901" y="278" width="1" height="43" fill="#dedede"/><rect x="901" y="321" width="1" height="11" fill="#dedede"/><rect x="901" y="332" width="1" height="10" fill="#dedede"/><rect x="901" y="342" width="1" height="11" fill="#dedede"/><rect x="901" y="353" width="1" height="10" fill="#dedede"/><rect x="901" y="363" width="1" height="11" fill="#dedede"/><rect x="901" y="374" width="1" height="11" fill="#dedede"/><rect x="901" y="385" width="1" height="10" fill="#dedede"/><rect x="901" y="395" width="1" height="11" fill="#dedede"/><rect x="901" y="406" width="1" height="11" fill="#dedede"/><rect x="901" y="417" width="1" height="10" fill="#dedede"/><rect x="901" y="427" width="1" height="11" fill="#dedede"/><rect x="901" y="438" width="1" height="11" fill="#dedede"/><rect x="901" y="449" width="1" height="10" fill="#dedede"/><rect x="901" y="459" width="1" height="11" fill="#dedede"/><rect x="901" y="470" width="1" height="11" fill="#dedede"/><rect x="901" y="481" width="1" height="10" fill="#dedede"/><rect x="901" y="491" width="1" height="11" fill="#dedede"/><rect x="901" y="502" width="1" height="10" fill="#dedede"/><rect x="901" y="512" width="1" height="11" fill="#dedede"/><rect x="901" y="523" width="1" height="5" fill="#dedede"/><rect x="914" y="114" width="1" height="11" fill="#dedede"/><rect x="914" y="125" width="1" height="10" fill="#dedede"/><rect x="914" y="135" width="1" height="11" fill="#dedede"/><rect x="914" y="146" width="1" height="11" fill="#dedede"/><rect x="914" y="157" width="1" height="14" fill="#dedede"/><rect x="914" y="171" width="1" height="11" fill="#dedede"/><rect x="914" y="182" width="1" height="10" fill="#dedede"/><rect x="914" y="192" width="1" height="11" fill="#dedede"/><rect x="914" y="203" width="1" height="11" fill="#dedede"/><rect x="914" y="214" width="1" height="10" fill="#dedede"/><rect x="914" y="224" width="1" height="11" fill="#dedede"/><rect x="914" y="235" width="1" height="11" fill="#dedede"/><rect x="914" y="246" width="1" height="11" fill="#dedede"/><rect x="914" y="257" width="1" height="10" fill="#dedede"/><rect x="914" y="267" width="1" height="11" fill="#dedede"/><rect x="914" y="278" width="1" height="43" fill="#dedede"/><rect x="914" y="321" width="1" height="11" fill="#dedede"/><rect x="914" y="332" width="1" height="10" fill="#dedede"/><rect x="914" y="342" width="1" height="11" fill="#dedede"/><rect x="914" y="353" width="1" height="10" fill="#dedede"/><rect x="914" y="363" width="1" height="11" fill="#dedede"/><rect x="914" y="374" width="1" height="11" fill="#dedede"/><rect x="914" y="385" width="1" height="10" fill="#dedede"/><rect x="914" y="395" width="1" height="11" fill="#dedede"/><rect x="914" y="406" width="1" height="11" fill="#dedede"/><rect x="914" y="417" width="1" height="10" fill="#dedede"/><rect x="914" y="427" width="1" height="11" fill="#dedede"/><rect x="914" y="438" width="1" height="11" fill="#dedede"/><rect x="914" y="449" width="1" height="10" fill="#dedede"/><rect x="914" y="459" width="1" height="11" fill="#dedede"/><rect x="914" y="470" width="1" height="11" fill="#dedede"/><rect x="914" y="481" width="1" height="10" fill="#dedede"/><rect x="914" y="491" width="1" height="11" fill="#dedede"/><rect x="914" y="502" width="1" height="10" fill="#dedede"/><rect x="914" y="512" width="1" height="11" fill="#dedede"/><rect x="914" y="523" width="1" height="5" fill="#dedede"/><rect x="928" y="114" width="1" height="11" fill="#dedede"/><rect x="928" y="125" width="1" height="10" fill="#dedede"/><rect x="928" y="135" width="1" height="11" fill="#dedede"/><rect x="928" y="146" width="1" height="11" fill="#dedede"/><rect x="928" y="157" width="1" height="14" fill="#dedede"/><rect x="928" y="171" width="1" height="11" fill="#dedede"/><rect x="928" y="182" width="1" height="10" fill="#dedede"/><rect x="928" y="192" width="1" height="11" fill="#dedede"/><rect x="928" y="203" width="1" height="11" fill="#dedede"/><rect x="928" y="214" width="1" height="10" fill="#dedede"/><rect x="928" y="224" width="1" height="11" fill="#dedede"/><rect x="928" y="235" width="1" height="11" fill="#dedede"/><rect x="928" y="246" width="1" height="11" fill="#dedede"/><rect x="928" y="257" width="1" height="10" fill="#dedede"/><rect x="928" y="267" width="1" height="11" fill="#dedede"/><rect x="928" y="278" width="1" height="43" fill="#dedede"/><rect x="928" y="321" width="1" height="11" fill="#dedede"/><rect x="928" y="332" width="1" height="10" fill="#dedede"/><rect x="928" y="342" width="1" height="11" fill="#dedede"/><rect x="928" y="353" width="1" height="10" fill="#dedede"/><rect x="928" y="363" width="1" height="11" fill="#dedede"/><rect x="928" y="374" width="1" height="11" fill="#dedede"/><rect x="928" y="385" width="1" height="10" fill="#dedede"/><rect x="928" y="395" width="1" height="11" fill="#dedede"/><rect x="928" y="406" width="1" height="11" fill="#dedede"/><rect x="928" y="417" width="1" height="10" fill="#dedede"/><rect x="928" y="427" width="1" height="11" fill="#dedede"/><rect x="928" y="438" width="1" height="11" fill="#dedede"/><rect x="928" y="449" width="1" height="10" fill="#dedede"/><rect x="928" y="459" width="1" height="11" fill="#dedede"/><rect x="928" y="470" width="1" height="11" fill="#dedede"/><rect x="928" y="481" width="1" height="10" fill="#dedede"/><rect x="928" y="491" width="1" height="11" fill="#dedede"/><rect x="928" y="502" width="1" height="10" fill="#dedede"/><rect x="928" y="512" width="1" height="11" fill="#dedede"/><rect x="928" y="523" width="1" height="5" fill="#dedede"/><rect x="941" y="114" width="1" height="11" fill="#dedede"/><rect x="941" y="125" width="1" height="10" fill="#dedede"/><rect x="941" y="135" width="1" height="11" fill="#dedede"/><rect x="941" y="146" width="1" height="11" fill="#dedede"/><rect x="941" y="157" width="1" height="14" fill="#dedede"/><rect x="941" y="171" width="1" height="11" fill="#dedede"/><rect x="941" y="182" width="1" height="10" fill="#dedede"/><rect x="941" y="192" width="1" height="11" fill="#dedede"/><rect x="941" y="203" width="1" height="11" fill="#dedede"/><rect x="941" y="214" width="1" height="10" fill="#dedede"/><rect x="941" y="224" width="1" height="11" fill="#dedede"/><rect x="941" y="235" width="1" height="11" fill="#dedede"/><rect x="941" y="246" width="1" height="11" fill="#dedede"/><rect x="941" y="257" width="1" height="10" fill="#dedede"/><rect x="941" y="267" width="1" height="11" fill="#dedede"/><rect x="941" y="278" width="1" height="43" fill="#dedede"/><rect x="941" y="321" width="1" height="11" fill="#dedede"/><rect x="941" y="332" width="1" height="10" fill="#dedede"/><rect x="941" y="342" width="1" height="11" fill="#dedede"/><rect x="941" y="353" width="1" height="10" fill="#dedede"/><rect x="941" y="363" width="1" height="11" fill="#dedede"/><rect x="941" y="374" width="1" height="11" fill="#dedede"/><rect x="941" y="385" width="1" height="10" fill="#dedede"/><rect x="941" y="395" width="1" height="11" fill="#dedede"/><rect x="941" y="406" width="1" height="11" fill="#dedede"/><rect x="941" y="417" width="1" height="10" fill="#dedede"/><rect x="941" y="427" width="1" height="11" fill="#dedede"/><rect x="941" y="438" width="1" height="11" fill="#dedede"/><rect x="941" y="449" width="1" height="10" fill="#dedede"/><rect x="941" y="459" width="1" height="11" fill="#dedede"/><rect x="941" y="470" width="1" height="11" fill="#dedede"/><rect x="941" y="481" width="1" height="10" fill="#dedede"/><rect x="941" y="491" width="1" height="11" fill="#dedede"/><rect x="941" y="502" width="1" height="10" fill="#dedede"/><rect x="941" y="512" width="1" height="11" fill="#dedede"/><rect x="941" y="523" width="1" height="5" fill="#dedede"/><rect x="954" y="114" width="1" height="11" fill="#dedede"/><rect x="954" y="125" width="1" height="10" fill="#dedede"/><rect x="954" y="135" width="1" height="11" fill="#dedede"/><rect x="954" y="146" width="1" height="11" fill="#dedede"/><rect x="954" y="157" width="1" height="14" fill="#dedede"/><rect x="954" y="171" width="1" height="11" fill="#dedede"/><rect x="954" y="182" width="1" height="10" fill="#dedede"/><rect x="954" y="192" width="1" height="11" fill="#dedede"/><rect x="954" y="203" width="1" height="11" fill="#dedede"/><rect x="954" y="214" width="1" height="10" fill="#dedede"/><rect x="954" y="224" width="1" height="11" fill="#dedede"/><rect x="954" y="235" width="1" height="11" fill="#dedede"/><rect x="954" y="246" width="1" height="11" fill="#dedede"/><rect x="954" y="257" width="1" height="10" fill="#dedede"/><rect x="954" y="267" width="1" height="11" fill="#dedede"/><rect x="954" y="278" width="1" height="43" fill="#dedede"/><rect x="954" y="321" width="1" height="11" fill="#dedede"/><rect x="954" y="332" width="1" height="10" fill="#dedede"/><rect x="954" y="342" width="1" height="11" fill="#dedede"/><rect x="954" y="353" width="1" height="10" fill="#dedede"/><rect x="954" y="363" width="1" height="11" fill="#dedede"/><rect x="954" y="374" width="1" height="11" fill="#dedede"/><rect x="954" y="385" width="1" height="10" fill="#dedede"/><rect x="954" y="395" width="1" height="11" fill="#dedede"/><rect x="954" y="406" width="1" height="11" fill="#dedede"/><rect x="954" y="417" width="1" height="10" fill="#dedede"/><rect x="954" y="427" width="1" height="11" fill="#dedede"/><rect x="954" y="438" width="1" height="11" fill="#dedede"/><rect x="954" y="449" width="1" height="10" fill="#dedede"/><rect x="954" y="459" width="1" height="11" fill="#dedede"/><rect x="954" y="470" width="1" height="11" fill="#dedede"/><rect x="954" y="481" width="1" height="10" fill="#dedede"/><rect x="954" y="491" width="1" height="11" fill="#dedede"/><rect x="954" y="502" width="1" height="10" fill="#dedede"/><rect x="954" y="512" width="1" height="11" fill="#dedede"/><rect x="954" y="523" width="1" height="5" fill="#dedede"/><rect x="988" y="114" width="1" height="11" fill="#dedede"/><rect x="988" y="125" width="1" height="10" fill="#dedede"/><rect x="988" y="135" width="1" height="11" fill="#dedede"/><rect x="988" y="146" width="1" height="11" fill="#dedede"/><rect x="988" y="157" width="1" height="14" fill="#dedede"/><rect x="988" y="171" width="1" height="11" fill="#dedede"/><rect x="988" y="182" width="1" height="10" fill="#dedede"/><rect x="988" y="192" width="1" height="11" fill="#dedede"/><rect x="988" y="203" width="1" height="11" fill="#dedede"/><rect x="988" y="214" width="1" height="10" fill="#dedede"/><rect x="988" y="224" width="1" height="11" fill="#dedede"/><rect x="988" y="235" width="1" height="11" fill="#dedede"/><rect x="988" y="246" width="1" height="11" fill="#dedede"/><rect x="988" y="257" width="1" height="10" fill="#dedede"/><rect x="988" y="267" width="1" height="11" fill="#dedede"/><rect x="988" y="278" width="1" height="43" fill="#dedede"/><rect x="988" y="321" width="1" height="11" fill="#dedede"/><rect x="988" y="332" width="1" height="10" fill="#dedede"/><rect x="988" y="342" width="1" height="11" fill="#dedede"/><rect x="988" y="353" width="1" height="10" fill="#dedede"/><rect x="988" y="363" width="1" height="11" fill="#dedede"/><rect x="988" y="374" width="1" height="11" fill="#dedede"/><rect x="988" y="385" width="1" height="10" fill="#dedede"/><rect x="988" y="395" width="1" height="11" fill="#dedede"/><rect x="988" y="406" width="1" height="11" fill="#dedede"/><rect x="988" y="417" width="1" height="10" fill="#dedede"/><rect x="988" y="427" width="1" height="11" fill="#dedede"/><rect x="988" y="438" width="1" height="11" fill="#dedede"/><rect x="988" y="449" width="1" height="10" fill="#dedede"/><rect x="988" y="459" width="1" height="11" fill="#dedede"/><rect x="988" y="470" width="1" height="11" fill="#dedede"/><rect x="988" y="481" width="1" height="10" fill="#dedede"/><rect x="988" y="491" width="1" height="11" fill="#dedede"/><rect x="988" y="502" width="1" height="10" fill="#dedede"/><rect x="988" y="512" width="1" height="11" fill="#dedede"/><rect x="988" y="523" width="1" height="5" fill="#dedede"/><rect x="1012" y="114" width="1" height="11" fill="#dedede"/><rect x="1012" y="125" width="1" height="10" fill="#dedede"/><rect x="1012" y="135" width="1" height="11" fill="#dedede"/><rect x="1012" y="146" width="1" height="11" fill="#dedede"/><rect x="1012" y="157" width="1" height="14" fill="#dedede"/><rect x="1012" y="171" width="1" height="11" fill="#dedede"/><rect x="1012" y="182" width="1" height="10" fill="#dedede"/><rect x="1012" y="192" width="1" height="11" fill="#dedede"/><rect x="1012" y="203" width="1" height="11" fill="#dedede"/><rect x="1012" y="214" width="1" height="10" fill="#dedede"/><rect x="1012" y="224" width="1" height="11" fill="#dedede"/><rect x="1012" y="235" width="1" height="11" fill="#dedede"/><rect x="1012" y="246" width="1" height="11" fill="#dedede"/><rect x="1012" y="257" width="1" height="10" fill="#dedede"/><rect x="1012" y="267" width="1" height="11" fill="#dedede"/><rect x="1012" y="278" width="1" height="43" fill="#dedede"/><rect x="1012" y="321" width="1" height="11" fill="#dedede"/><rect x="1012" y="332" width="1" height="10" fill="#dedede"/><rect x="1012" y="342" width="1" height="11" fill="#dedede"/><rect x="1012" y="353" width="1" height="10" fill="#dedede"/><rect x="1012" y="363" width="1" height="11" fill="#dedede"/><rect x="1012" y="374" width="1" height="11" fill="#dedede"/><rect x="1012" y="385" width="1" height="10" fill="#dedede"/><rect x="1012" y="395" width="1" height="11" fill="#dedede"/><rect x="1012" y="406" width="1" height="11" fill="#dedede"/><rect x="1012" y="417" width="1" height="10" fill="#dedede"/><rect x="1012" y="427" width="1" height="11" fill="#dedede"/><rect x="1012" y="438" width="1" height="11" fill="#dedede"/><rect x="1012" y="449" width="1" height="10" fill="#dedede"/><rect x="1012" y="459" width="1" height="11" fill="#dedede"/><rect x="1012" y="470" width="1" height="11" fill="#dedede"/><rect x="1012" y="481" width="1" height="10" fill="#dedede"/><rect x="1012" y="491" width="1" height="11" fill="#dedede"/><rect x="1012" y="502" width="1" height="10" fill="#dedede"/><rect x="1012" y="512" width="1" height="11" fill="#dedede"/><rect x="1012" y="523" width="1" height="5" fill="#dedede"/></svg>
<div style="position:absolute;left:6.90px;top:116.86px;line-height:7.92px;font-size:6.6px;font-family:'Liberation Sans',sans-serif;color:#3a3a3a;font-weight:normal;white-space:nowrap;transform:translateX(-50%);">1</div>
<div style="position:absolute;left:6.90px;top:127.50px;line-height:7.92px;font-size:6.6px;font-family:'Liberation Sans',sans-serif;color:#3a3a3a;font-weight:normal;white-space:nowrap;transform:translateX(-50%);">2</div>
<div style="position:absolute;left:6.90px;top:138.14px;line-height:7.92px;font-size:6.6px;font-family:'Liberation Sans',sans-serif;color:#3a3a3a;font-weight:normal;white-space:nowrap;transform:translateX(-50%);">3</div>
<div style="position:absolute;left:6.90px;top:148.78px;line-height:7.92px;font-size:6.6px;font-family:'Liberation Sans',sans-serif;color:#3a3a3a;font-weight:normal;white-space:nowrap;transform:translateX(-50%);">4</div>
<div style="position:absolute;left:6.90px;top:162.70px;line-height:7.92px;font-size:6.6px;font-family:'Liberation Sans',sans-serif;color:#3a3a3a;font-weight:normal;white-space:nowrap;transform:translateX(-50%);">5</div>
<div style="position:absolute;left:6.90px;top:173.82px;line-height:7.92px;font-size:6.6px;font-family:'Liberation Sans',sans-serif;color:#3a3a3a;font-weight:normal;white-space:nowrap;transform:translateX(-50%);">6</div>
<div style="position:absolute;left:6.90px;top:184.46px;line-height:7.92px;font-size:6.6px;font-family:'Liberation Sans',sans-serif;color:#2f6b45;font-weight:normal;white-space:nowrap;transform:translateX(-50%);">7</div>
<div style="position:absolute;left:6.90px;top:195.10px;line-height:7.92px;font-size:6.6px;font-family:'Liberation Sans',sans-serif;color:#3a3a3a;font-weight:normal;white-space:nowrap;transform:translateX(-50%);">8</div>
<div style="position:absolute;left:6.90px;top:205.74px;line-height:7.92px;font-size:6.6px;font-family:'Liberation Sans',sans-serif;color:#3a3a3a;font-weight:normal;white-space:nowrap;transform:translateX(-50%);">9</div>
<div style="position:absolute;left:6.90px;top:216.38px;line-height:7.92px;font-size:6.6px;font-family:'Liberation Sans',sans-serif;color:#3a3a3a;font-weight:normal;white-space:nowrap;transform:translateX(-50%);">10</div>
<div style="position:absolute;left:6.90px;top:227.02px;line-height:7.92px;font-size:6.6px;font-family:'Liberation Sans',sans-serif;color:#3a3a3a;font-weight:normal;white-space:nowrap;transform:translateX(-50%);">11</div>
<div style="position:absolute;left:6.90px;top:237.66px;line-height:7.92px;font-size:6.6px;font-family:'Liberation Sans',sans-serif;color:#3a3a3a;font-weight:normal;white-space:nowrap;transform:translateX(-50%);">12</div>
<div style="position:absolute;left:6.90px;top:248.53px;line-height:7.92px;font-size:6.6px;font-family:'Liberation Sans',sans-serif;color:#3a3a3a;font-weight:normal;white-space:nowrap;transform:translateX(-50%);">13</div>
<div style="position:absolute;left:6.90px;top:259.40px;line-height:7.92px;font-size:6.6px;font-family:'Liberation Sans',sans-serif;color:#3a3a3a;font-weight:normal;white-space:nowrap;transform:translateX(-50%);">14</div>
<div style="position:absolute;left:6.90px;top:269.79px;line-height:7.92px;font-size:6.6px;font-family:'Liberation Sans',sans-serif;color:#3a3a3a;font-weight:normal;white-space:nowrap;transform:translateX(-50%);">15</div>
<div style="position:absolute;left:6.90px;top:310.97px;line-height:7.92px;font-size:6.6px;font-family:'Liberation Sans',sans-serif;color:#3a3a3a;font-weight:normal;white-space:nowrap;transform:translateX(-50%);">16</div>
<div style="position:absolute;left:6.90px;top:323.59px;line-height:7.92px;font-size:6.6px;font-family:'Liberation Sans',sans-serif;color:#3a3a3a;font-weight:normal;white-space:nowrap;transform:translateX(-50%);">17</div>
<div style="position:absolute;left:6.90px;top:334.23px;line-height:7.92px;font-size:6.6px;font-family:'Liberation Sans',sans-serif;color:#3a3a3a;font-weight:normal;white-space:nowrap;transform:translateX(-50%);">18</div>
<div style="position:absolute;left:6.90px;top:344.87px;line-height:7.92px;font-size:6.6px;font-family:'Liberation Sans',sans-serif;color:#3a3a3a;font-weight:normal;white-space:nowrap;transform:translateX(-50%);">19</div>
<div style="position:absolute;left:6.90px;top:355.51px;line-height:7.92px;font-size:6.6px;font-family:'Liberation Sans',sans-serif;color:#3a3a3a;font-weight:normal;white-space:nowrap;transform:translateX(-50%);">20</div>
<div style="position:absolute;left:6.90px;top:366.15px;line-height:7.92px;font-size:6.6px;font-family:'Liberation Sans',sans-serif;color:#3a3a3a;font-weight:normal;white-space:nowrap;transform:translateX(-50%);">21</div>
<div style="position:absolute;left:6.90px;top:376.79px;line-height:7.92px;font-size:6.6px;font-family:'Liberation Sans',sans-serif;color:#3a3a3a;font-weight:normal;white-space:nowrap;transform:translateX(-50%);">22</div>
<div style="position:absolute;left:6.90px;top:387.43px;line-height:7.92px;font-size:6.6px;font-family:'Liberation Sans',sans-serif;color:#3a3a3a;font-weight:normal;white-space:nowrap;transform:translateX(-50%);">23</div>
<div style="position:absolute;left:6.90px;top:398.07px;line-height:7.92px;font-size:6.6px;font-family:'Liberation Sans',sans-serif;color:#3a3a3a;font-weight:normal;white-space:nowrap;transform:translateX(-50%);">24</div>
<div style="position:absolute;left:6.90px;top:408.71px;line-height:7.92px;font-size:6.6px;font-family:'Liberation Sans',sans-serif;color:#3a3a3a;font-weight:normal;white-space:nowrap;transform:translateX(-50%);">25</div>
<div style="position:absolute;left:6.90px;top:419.35px;line-height:7.92px;font-size:6.6px;font-family:'Liberation Sans',sans-serif;color:#3a3a3a;font-weight:normal;white-space:nowrap;transform:translateX(-50%);">26</div>
<div style="position:absolute;left:6.90px;top:429.99px;line-height:7.92px;font-size:6.6px;font-family:'Liberation Sans',sans-serif;color:#3a3a3a;font-weight:normal;white-space:nowrap;transform:translateX(-50%);">27</div>
<div style="position:absolute;left:6.90px;top:440.63px;line-height:7.92px;font-size:6.6px;font-family:'Liberation Sans',sans-serif;color:#3a3a3a;font-weight:normal;white-space:nowrap;transform:translateX(-50%);">28</div>
<div style="position:absolute;left:6.90px;top:451.27px;line-height:7.92px;font-size:6.6px;font-family:'Liberation Sans',sans-serif;color:#3a3a3a;font-weight:normal;white-space:nowrap;transform:translateX(-50%);">29</div>
<div style="position:absolute;left:6.90px;top:461.91px;line-height:7.92px;font-size:6.6px;font-family:'Liberation Sans',sans-serif;color:#3a3a3a;font-weight:normal;white-space:nowrap;transform:translateX(-50%);">30</div>
<div style="position:absolute;left:6.90px;top:472.55px;line-height:7.92px;font-size:6.6px;font-family:'Liberation Sans',sans-serif;color:#3a3a3a;font-weight:normal;white-space:nowrap;transform:translateX(-50%);">31</div>
<div style="position:absolute;left:6.90px;top:483.19px;line-height:7.92px;font-size:6.6px;font-family:'Liberation Sans',sans-serif;color:#3a3a3a;font-weight:normal;white-space:nowrap;transform:translateX(-50%);">32</div>
<div style="position:absolute;left:6.90px;top:493.83px;line-height:7.92px;font-size:6.6px;font-family:'Liberation Sans',sans-serif;color:#3a3a3a;font-weight:normal;white-space:nowrap;transform:translateX(-50%);">33</div>
<div style="position:absolute;left:6.90px;top:504.47px;line-height:7.92px;font-size:6.6px;font-family:'Liberation Sans',sans-serif;color:#3a3a3a;font-weight:normal;white-space:nowrap;transform:translateX(-50%);">34</div>
<div style="position:absolute;left:6.90px;top:515.11px;line-height:7.92px;font-size:6.6px;font-family:'Liberation Sans',sans-serif;color:#3a3a3a;font-weight:normal;white-space:nowrap;transform:translateX(-50%);">35</div>
<div class="t" style="position:absolute;left:451.20px;top:116.70px;line-height:9.84px;font-size:8.2px;font-family:'Liberation Serif',sans-serif;color:#000;font-weight:bold;white-space:nowrap;transform:translateX(-50%);">CỘNG HÒA XÃ HỘI CHỦ NGHĨA VIỆT NAM</div>
<div class="t" style="position:absolute;left:451.40px;top:127.50px;line-height:9.72px;font-size:8.1px;font-family:'Liberation Serif',sans-serif;color:#000;font-weight:bold;white-space:nowrap;transform:translateX(-50%);">Độc lập - Tự do - Hạnh phúc</div>
<div class="t" style="position:absolute;left:450.00px;top:137.62px;line-height:9.96px;font-size:8.3px;font-family:'Liberation Serif',sans-serif;color:#000;font-weight:normal;white-space:nowrap;transform:translateX(-50%);font-style:italic;">Địa điểm, ngày 11 tháng 4 năm 2026</div>
<div class="t" style="position:absolute;left:450.50px;top:157.96px;line-height:14.00px;font-size:11.25px;font-family:'Liberation Serif',sans-serif;color:#000;font-weight:bold;white-space:nowrap;transform:translateX(-50%);">BẢNG KÍCH THƯỚC HÌNH HỌC LỚP ĐẮP LỚP SỐ 1</div>
<div class="t" style="position:absolute;left:14.90px;top:184.27px;line-height:9.30px;font-size:7.75px;font-family:'Liberation Serif',sans-serif;color:#000;font-weight:normal;white-space:nowrap;">Dự án: Dự án 1</div>
<div class="t" style="position:absolute;left:14.90px;top:194.91px;line-height:9.30px;font-size:7.75px;font-family:'Liberation Serif',sans-serif;color:#000;font-weight:normal;white-space:nowrap;">Gói thầu: Gói thầu 1</div>
<div class="t" style="position:absolute;left:14.90px;top:205.55px;line-height:9.30px;font-size:7.75px;font-family:'Liberation Serif',sans-serif;color:#000;font-weight:normal;white-space:nowrap;">Chủ đầu tư: Chủ đầu tư 1</div>
<div class="t" style="position:absolute;left:14.90px;top:216.19px;line-height:9.30px;font-size:7.75px;font-family:'Liberation Serif',sans-serif;color:#000;font-weight:normal;white-space:nowrap;">TVGS: Tư vấn giám sát 1</div>
<div class="t" style="position:absolute;left:14.90px;top:226.83px;line-height:9.30px;font-size:7.75px;font-family:'Liberation Serif',sans-serif;color:#000;font-weight:normal;white-space:nowrap;">Nhà thầu: Nhà thầu 1</div>
<div class="t" style="position:absolute;left:14.90px;top:237.47px;line-height:9.30px;font-size:7.75px;font-family:'Liberation Serif',sans-serif;color:#000;font-weight:normal;white-space:nowrap;">Hạng mục: Thi công lý trình: KM2+619.70 - KM2+654.26</div>
<div style="position:absolute;left:411.37px;top:181.70px;width:26.26px;height:11.84px;border:1.4px solid #217346;"></div>
<div style="position:absolute;left:435.43px;top:191.34px;width:3.20px;height:3.20px;background:#217346;border:0.6px solid #fff;"></div>
<svg style="position:absolute;left:0;top:0" width="1024" height="576" viewBox="0 0 1024 576" shape-rendering="crispEdges"><rect x="14.00" y="257.24" width="874.11" height="64.19" fill="#f0f0f0"/><rect x="14.00" y="321.43" width="874.11" height="10.64" fill="#fff"/><rect x="14.00" y="342.71" width="874.11" height="10.64" fill="#fff"/><rect x="14.00" y="363.99" width="874.11" height="10.64" fill="#fff"/><rect x="14.00" y="332.07" width="874.11" height="10.64" fill="#efefef"/><rect x="14.00" y="353.35" width="874.11" height="10.64" fill="#efefef"/><rect x="14.00" y="374.63" width="874.11" height="10.64" fill="#efefef"/><rect x="14" y="257" width="875" height="1" fill="#444444"/><rect x="111" y="267" width="301" height="2" fill="#a0a0a0"/><rect x="562" y="267" width="302" height="2" fill="#a0a0a0"/><rect x="111" y="278" width="753" height="1" fill="#444444"/><rect x="14" y="321" width="875" height="1" fill="#444444"/><rect x="14" y="332" width="875" height="1" fill="#444444"/><rect x="14" y="342" width="875" height="1" fill="#444444"/><rect x="14" y="353" width="875" height="1" fill="#444444"/><rect x="14" y="363" width="875" height="1" fill="#444444"/><rect x="14" y="374" width="875" height="1" fill="#444444"/><rect x="14" y="385" width="875" height="1" fill="#444444"/><rect x="38" y="257" width="1" height="129" fill="#444444"/><rect x="63" y="257" width="1" height="129" fill="#444444"/><rect x="111" y="257" width="1" height="129" fill="#444444"/><rect x="888" y="257" width="1" height="129" fill="#444444"/><rect x="411" y="257" width="1" height="129" fill="#444444"/><rect x="562" y="257" width="1" height="129" fill="#444444"/><rect x="863" y="257" width="1" height="129" fill="#444444"/><rect x="261" y="267" width="1" height="119" fill="#444444"/><rect x="712" y="267" width="1" height="119" fill="#444444"/><rect x="136" y="278" width="1" height="108" fill="#555"/><rect x="161" y="278" width="1" height="108" fill="#555"/><rect x="186" y="278" width="1" height="108" fill="#555"/><rect x="211" y="278" width="1" height="108" fill="#555"/><rect x="236" y="278" width="1" height="108" fill="#555"/><rect x="286" y="278" width="1" height="108" fill="#555"/><rect x="311" y="278" width="1" height="108" fill="#555"/><rect x="336" y="278" width="1" height="108" fill="#555"/><rect x="361" y="278" width="1" height="108" fill="#555"/><rect x="386" y="278" width="1" height="108" fill="#555"/><rect x="437" y="278" width="1" height="108" fill="#555"/><rect x="462" y="278" width="1" height="108" fill="#555"/><rect x="487" y="278" width="1" height="108" fill="#555"/><rect x="512" y="278" width="1" height="108" fill="#555"/><rect x="537" y="278" width="1" height="108" fill="#555"/><rect x="587" y="278" width="1" height="108" fill="#555"/><rect x="612" y="278" width="1" height="108" fill="#555"/><rect x="637" y="278" width="1" height="108" fill="#555"/><rect x="662" y="278" width="1" height="108" fill="#555"/><rect x="687" y="278" width="1" height="108" fill="#555"/><rect x="737" y="278" width="1" height="108" fill="#555"/><rect x="762" y="278" width="1" height="108" fill="#555"/><rect x="787" y="278" width="1" height="108" fill="#555"/><rect x="812" y="278" width="1" height="108" fill="#555"/><rect x="837" y="278" width="1" height="108" fill="#555"/></svg>
<div class="t" style="position:absolute;left:25.82px;top:285.33px;line-height:10.60px;font-size:7.75px;font-family:'Liberation Serif',sans-serif;color:#000;font-weight:normal;white-space:nowrap;transform:translateX(-50%);">STT</div>
<div class="t" style="position:absolute;left:50.83px;top:280.03px;line-height:10.60px;font-size:7.75px;font-family:'Liberation Serif',sans-serif;color:#000;font-weight:normal;white-space:nowrap;transform:translateX(-50%);">Tên</div>
<div class="t" style="position:absolute;left:50.83px;top:290.63px;line-height:10.60px;font-size:7.75px;font-family:'Liberation Serif',sans-serif;color:#000;font-weight:normal;white-space:nowrap;transform:translateX(-50%);">cọc</div>
<div class="t" style="position:absolute;left:87.33px;top:285.33px;line-height:10.60px;font-size:7.75px;font-family:'Liberation Serif',sans-serif;color:#000;font-weight:normal;white-space:nowrap;transform:translateX(-50%);">Lý trình</div>
<div class="t" style="position:absolute;left:261.61px;top:258.56px;line-height:10.60px;font-size:7.75px;font-family:'Liberation Serif',sans-serif;color:#000;font-weight:normal;white-space:nowrap;transform:translateX(-50%);">Bên trái</div>
<div class="t" style="position:absolute;left:186.43px;top:268.95px;line-height:10.60px;font-size:7.75px;font-family:'Liberation Serif',sans-serif;color:#000;font-weight:normal;white-space:nowrap;transform:translateX(-50%);">Điểm xa tim nhất</div>
<div class="t" style="position:absolute;left:336.79px;top:268.95px;line-height:10.60px;font-size:7.75px;font-family:'Liberation Serif',sans-serif;color:#000;font-weight:normal;white-space:nowrap;transform:translateX(-50%);">Điểm gần nhất</div>
<div class="t" style="position:absolute;left:487.15px;top:263.63px;line-height:10.60px;font-size:7.75px;font-family:'Liberation Serif',sans-serif;color:#000;font-weight:normal;white-space:nowrap;transform:translateX(-50%);">Tim</div>
<div class="t" style="position:absolute;left:712.69px;top:258.56px;line-height:10.60px;font-size:7.75px;font-family:'Liberation Serif',sans-serif;color:#000;font-weight:normal;white-space:nowrap;transform:translateX(-50%);">Bên phải</div>
<div class="t" style="position:absolute;left:637.51px;top:268.95px;line-height:10.60px;font-size:7.75px;font-family:'Liberation Serif',sans-serif;color:#000;font-weight:normal;white-space:nowrap;transform:translateX(-50%);">Điểm gần nhất</div>
<div class="t" style="position:absolute;left:787.87px;top:268.95px;line-height:10.60px;font-size:7.75px;font-family:'Liberation Serif',sans-serif;color:#000;font-weight:normal;white-space:nowrap;transform:translateX(-50%);">Điểm xa tim nhất</div>
<div class="t" style="position:absolute;left:875.58px;top:280.03px;line-height:10.60px;font-size:7.75px;font-family:'Liberation Serif',sans-serif;color:#000;font-weight:normal;white-space:nowrap;transform:translateX(-50%);">Ghi</div>
<div class="t" style="position:absolute;left:875.58px;top:290.63px;line-height:10.60px;font-size:7.75px;font-family:'Liberation Serif',sans-serif;color:#000;font-weight:normal;white-space:nowrap;transform:translateX(-50%);">chú</div>
<div class="t" style="position:absolute;left:123.78px;top:279.53px;line-height:10.75px;font-size:7.75px;font-family:'Liberation Serif',sans-serif;color:#000;font-weight:normal;white-space:nowrap;transform:translateX(-50%);">Khoản</div>
<div class="t" style="position:absolute;left:123.78px;top:290.28px;line-height:10.75px;font-size:7.75px;font-family:'Liberation Serif',sans-serif;color:#000;font-weight:normal;white-space:nowrap;transform:translateX(-50%);">g cách</div>
<div class="t" style="position:absolute;left:123.78px;top:301.03px;line-height:10.75px;font-size:7.75px;font-family:'Liberation Serif',sans-serif;color:#000;font-weight:normal;white-space:nowrap;transform:translateX(-50%);">TK</div>
<div class="t" style="position:absolute;left:123.78px;top:311.78px;line-height:10.75px;font-size:7.75px;font-family:'Liberation Serif',sans-serif;color:#000;font-weight:normal;white-space:nowrap;transform:translateX(-50%);">(m)</div>
<div class="t" style="position:absolute;left:148.84px;top:279.53px;line-height:10.75px;font-size:7.75px;font-family:'Liberation Serif',sans-serif;color:#000;font-weight:normal;white-space:nowrap;transform:translateX(-50%);">Khoản</div>
<div class="t" style="position:absolute;left:148.84px;top:290.28px;line-height:10.75px;font-size:7.75px;font-family:'Liberation Serif',sans-serif;color:#000;font-weight:normal;white-space:nowrap;transform:translateX(-50%);">g cách</div>
<div class="t" style="position:absolute;left:148.84px;top:301.03px;line-height:10.75px;font-size:7.75px;font-family:'Liberation Serif',sans-serif;color:#000;font-weight:normal;white-space:nowrap;transform:translateX(-50%);">TT</div>
<div class="t" style="position:absolute;left:148.84px;top:311.78px;line-height:10.75px;font-size:7.75px;font-family:'Liberation Serif',sans-serif;color:#000;font-weight:normal;white-space:nowrap;transform:translateX(-50%);">(m)</div>
<div class="t" style="position:absolute;left:173.90px;top:284.90px;line-height:10.75px;font-size:7.75px;font-family:'Liberation Serif',sans-serif;color:#000;font-weight:normal;white-space:nowrap;transform:translateX(-50%);">Chênh</div>
<div class="t" style="position:absolute;left:173.90px;top:295.65px;line-height:10.75px;font-size:7.75px;font-family:'Liberation Serif',sans-serif;color:#000;font-weight:normal;white-space:nowrap;transform:translateX(-50%);">KC</div>
<div class="t" style="position:absolute;left:173.90px;top:306.40px;line-height:10.75px;font-size:7.75px;font-family:'Liberation Serif',sans-serif;color:#000;font-weight:normal;white-space:nowrap;transform:translateX(-50%);">(m)</div>
<div class="t" style="position:absolute;left:198.96px;top:284.90px;line-height:10.75px;font-size:7.75px;font-family:'Liberation Serif',sans-serif;color:#000;font-weight:normal;white-space:nowrap;transform:translateX(-50%);">Cao</div>
<div class="t" style="position:absolute;left:198.96px;top:295.65px;line-height:10.75px;font-size:7.75px;font-family:'Liberation Serif',sans-serif;color:#000;font-weight:normal;white-space:nowrap;transform:translateX(-50%);">độ TK</div>
<div class="t" style="position:absolute;left:198.96px;top:306.40px;line-height:10.75px;font-size:7.75px;font-family:'Liberation Serif',sans-serif;color:#000;font-weight:normal;white-space:nowrap;transform:translateX(-50%);">(m)</div>
<div class="t" style="position:absolute;left:224.02px;top:284.90px;line-height:10.75px;font-size:7.75px;font-family:'Liberation Serif',sans-serif;color:#000;font-weight:normal;white-space:nowrap;transform:translateX(-50%);">Cao</div>
<div class="t" style="position:absolute;left:224.02px;top:295.65px;line-height:10.75px;font-size:7.75px;font-family:'Liberation Serif',sans-serif;color:#000;font-weight:normal;white-space:nowrap;transform:translateX(-50%);">độ TT</div>
<div class="t" style="position:absolute;left:224.02px;top:306.40px;line-height:10.75px;font-size:7.75px;font-family:'Liberation Serif',sans-serif;color:#000;font-weight:normal;white-space:nowrap;transform:translateX(-50%);">(m)</div>
<div class="t" style="position:absolute;left:249.08px;top:284.90px;line-height:10.75px;font-size:7.75px;font-family:'Liberation Serif',sans-serif;color:#000;font-weight:normal;white-space:nowrap;transform:translateX(-50%);">Chênh</div>
<div class="t" style="position:absolute;left:249.08px;top:295.65px;line-height:10.75px;font-size:7.75px;font-family:'Liberation Serif',sans-serif;color:#000;font-weight:normal;white-space:nowrap;transform:translateX(-50%);">cao</div>
<div class="t" style="position:absolute;left:249.08px;top:306.40px;line-height:10.75px;font-size:7.75px;font-family:'Liberation Serif',sans-serif;color:#000;font-weight:normal;white-space:nowrap;transform:translateX(-50%);">(m)</div>
<div class="t" style="position:absolute;left:274.14px;top:279.53px;line-height:10.75px;font-size:7.75px;font-family:'Liberation Serif',sans-serif;color:#000;font-weight:normal;white-space:nowrap;transform:translateX(-50%);">Khoản</div>
<div class="t" style="position:absolute;left:274.14px;top:290.28px;line-height:10.75px;font-size:7.75px;font-family:'Liberation Serif',sans-serif;color:#000;font-weight:normal;white-space:nowrap;transform:translateX(-50%);">g cách</div>
<div class="t" style="position:absolute;left:274.14px;top:301.03px;line-height:10.75px;font-size:7.75px;font-family:'Liberation Serif',sans-serif;color:#000;font-weight:normal;white-space:nowrap;transform:translateX(-50%);">TK</div>
<div class="t" style="position:absolute;left:274.14px;top:311.78px;line-height:10.75px;font-size:7.75px;font-family:'Liberation Serif',sans-serif;color:#000;font-weight:normal;white-space:nowrap;transform:translateX(-50%);">(m)</div>
<div class="t" style="position:absolute;left:299.20px;top:279.53px;line-height:10.75px;font-size:7.75px;font-family:'Liberation Serif',sans-serif;color:#000;font-weight:normal;white-space:nowrap;transform:translateX(-50%);">Khoản</div>
<div class="t" style="position:absolute;left:299.20px;top:290.28px;line-height:10.75px;font-size:7.75px;font-family:'Liberation Serif',sans-serif;color:#000;font-weight:normal;white-space:nowrap;transform:translateX(-50%);">g cách</div>
<div class="t" style="position:absolute;left:299.20px;top:301.03px;line-height:10.75px;font-size:7.75px;font-family:'Liberation Serif',sans-serif;color:#000;font-weight:normal;white-space:nowrap;transform:translateX(-50%);">TT</div>
<div class="t" style="position:absolute;left:299.20px;top:311.78px;line-height:10.75px;font-size:7.75px;font-family:'Liberation Serif',sans-serif;color:#000;font-weight:normal;white-space:nowrap;transform:translateX(-50%);">(m)</div>
<div class="t" style="position:absolute;left:324.26px;top:284.90px;line-height:10.75px;font-size:7.75px;font-family:'Liberation Serif',sans-serif;color:#000;font-weight:normal;white-space:nowrap;transform:translateX(-50%);">Chênh</div>
<div class="t" style="position:absolute;left:324.26px;top:295.65px;line-height:10.75px;font-size:7.75px;font-family:'Liberation Serif',sans-serif;color:#000;font-weight:normal;white-space:nowrap;transform:translateX(-50%);">KC</div>
<div class="t" style="position:absolute;left:324.26px;top:306.40px;line-height:10.75px;font-size:7.75px;font-family:'Liberation Serif',sans-serif;color:#000;font-weight:normal;white-space:nowrap;transform:translateX(-50%);">(m)</div>
<div class="t" style="position:absolute;left:349.32px;top:284.90px;line-height:10.75px;font-size:7.75px;font-family:'Liberation Serif',sans-serif;color:#000;font-weight:normal;white-space:nowrap;transform:translateX(-50%);">Cao</div>
<div class="t" style="position:absolute;left:349.32px;top:295.65px;line-height:10.75px;font-size:7.75px;font-family:'Liberation Serif',sans-serif;color:#000;font-weight:normal;white-space:nowrap;transform:translateX(-50%);">độ TK</div>
<div class="t" style="position:absolute;left:349.32px;top:306.40px;line-height:10.75px;font-size:7.75px;font-family:'Liberation Serif',sans-serif;color:#000;font-weight:normal;white-space:nowrap;transform:translateX(-50%);">(m)</div>
<div class="t" style="position:absolute;left:374.38px;top:284.90px;line-height:10.75px;font-size:7.75px;font-family:'Liberation Serif',sans-serif;color:#000;font-weight:normal;white-space:nowrap;transform:translateX(-50%);">Cao</div>
<div class="t" style="position:absolute;left:374.38px;top:295.65px;line-height:10.75px;font-size:7.75px;font-family:'Liberation Serif',sans-serif;color:#000;font-weight:normal;white-space:nowrap;transform:translateX(-50%);">độ TT</div>
<div class="t" style="position:absolute;left:374.38px;top:306.40px;line-height:10.75px;font-size:7.75px;font-family:'Liberation Serif',sans-serif;color:#000;font-weight:normal;white-space:nowrap;transform:translateX(-50%);">(m)</div>
<div class="t" style="position:absolute;left:399.44px;top:284.90px;line-height:10.75px;font-size:7.75px;font-family:'Liberation Serif',sans-serif;color:#000;font-weight:normal;white-space:nowrap;transform:translateX(-50%);">Chênh</div>
<div class="t" style="position:absolute;left:399.44px;top:295.65px;line-height:10.75px;font-size:7.75px;font-family:'Liberation Serif',sans-serif;color:#000;font-weight:normal;white-space:nowrap;transform:translateX(-50%);">cao</div>
<div class="t" style="position:absolute;left:399.44px;top:306.40px;line-height:10.75px;font-size:7.75px;font-family:'Liberation Serif',sans-serif;color:#000;font-weight:normal;white-space:nowrap;transform:translateX(-50%);">(m)</div>
<div class="t" style="position:absolute;left:424.50px;top:279.53px;line-height:10.75px;font-size:7.75px;font-family:'Liberation Serif',sans-serif;color:#000;font-weight:normal;white-space:nowrap;transform:translateX(-50%);">Khoản</div>
<div class="t" style="position:absolute;left:424.50px;top:290.28px;line-height:10.75px;font-size:7.75px;font-family:'Liberation Serif',sans-serif;color:#000;font-weight:normal;white-space:nowrap;transform:translateX(-50%);">g cách</div>
<div class="t" style="position:absolute;left:424.50px;top:301.03px;line-height:10.75px;font-size:7.75px;font-family:'Liberation Serif',sans-serif;color:#000;font-weight:normal;white-space:nowrap;transform:translateX(-50%);">TK</div>
<div class="t" style="position:absolute;left:424.50px;top:311.78px;line-height:10.75px;font-size:7.75px;font-family:'Liberation Serif',sans-serif;color:#000;font-weight:normal;white-space:nowrap;transform:translateX(-50%);">(m)</div>
<div class="t" style="position:absolute;left:449.56px;top:279.53px;line-height:10.75px;font-size:7.75px;font-family:'Liberation Serif',sans-serif;color:#000;font-weight:normal;white-space:nowrap;transform:translateX(-50%);">Khoản</div>
<div class="t" style="position:absolute;left:449.56px;top:290.28px;line-height:10.75px;font-size:7.75px;font-family:'Liberation Serif',sans-serif;color:#000;font-weight:normal;white-space:nowrap;transform:translateX(-50%);">g cách</div>
<div class="t" style="position:absolute;left:449.56px;top:301.03px;line-height:10.75px;font-size:7.75px;font-family:'Liberation Serif',sans-serif;color:#000;font-weight:normal;white-space:nowrap;transform:translateX(-50%);">TT</div>
<div class="t" style="position:absolute;left:449.56px;top:311.78px;line-height:10.75px;font-size:7.75px;font-family:'Liberation Serif',sans-serif;color:#000;font-weight:normal;white-space:nowrap;transform:translateX(-50%);">(m)</div>
<div class="t" style="position:absolute;left:474.62px;top:284.90px;line-height:10.75px;font-size:7.75px;font-family:'Liberation Serif',sans-serif;color:#000;font-weight:normal;white-space:nowrap;transform:translateX(-50%);">Chênh</div>
<div class="t" style="position:absolute;left:474.62px;top:295.65px;line-height:10.75px;font-size:7.75px;font-family:'Liberation Serif',sans-serif;color:#000;font-weight:normal;white-space:nowrap;transform:translateX(-50%);">KC</div>
<div class="t" style="position:absolute;left:474.62px;top:306.40px;line-height:10.75px;font-size:7.75px;font-family:'Liberation Serif',sans-serif;color:#000;font-weight:normal;white-space:nowrap;transform:translateX(-50%);">(m)</div>
<div class="t" style="position:absolute;left:499.68px;top:284.90px;line-height:10.75px;font-size:7.75px;font-family:'Liberation Serif',sans-serif;color:#000;font-weight:normal;white-space:nowrap;transform:translateX(-50%);">Cao</div>
<div class="t" style="position:absolute;left:499.68px;top:295.65px;line-height:10.75px;font-size:7.75px;font-family:'Liberation Serif',sans-serif;color:#000;font-weight:normal;white-space:nowrap;transform:translateX(-50%);">độ TK</div>
<div class="t" style="position:absolute;left:499.68px;top:306.40px;line-height:10.75px;font-size:7.75px;font-family:'Liberation Serif',sans-serif;color:#000;font-weight:normal;white-space:nowrap;transform:translateX(-50%);">(m)</div>
<div class="t" style="position:absolute;left:524.74px;top:284.90px;line-height:10.75px;font-size:7.75px;font-family:'Liberation Serif',sans-serif;color:#000;font-weight:normal;white-space:nowrap;transform:translateX(-50%);">Cao</div>
<div class="t" style="position:absolute;left:524.74px;top:295.65px;line-height:10.75px;font-size:7.75px;font-family:'Liberation Serif',sans-serif;color:#000;font-weight:normal;white-space:nowrap;transform:translateX(-50%);">độ TT</div>
<div class="t" style="position:absolute;left:524.74px;top:306.40px;line-height:10.75px;font-size:7.75px;font-family:'Liberation Serif',sans-serif;color:#000;font-weight:normal;white-space:nowrap;transform:translateX(-50%);">(m)</div>
<div class="t" style="position:absolute;left:549.80px;top:284.90px;line-height:10.75px;font-size:7.75px;font-family:'Liberation Serif',sans-serif;color:#000;font-weight:normal;white-space:nowrap;transform:translateX(-50%);">Chênh</div>
<div class="t" style="position:absolute;left:549.80px;top:295.65px;line-height:10.75px;font-size:7.75px;font-family:'Liberation Serif',sans-serif;color:#000;font-weight:normal;white-space:nowrap;transform:translateX(-50%);">cao</div>
<div class="t" style="position:absolute;left:549.80px;top:306.40px;line-height:10.75px;font-size:7.75px;font-family:'Liberation Serif',sans-serif;color:#000;font-weight:normal;white-space:nowrap;transform:translateX(-50%);">(m)</div>
<div class="t" style="position:absolute;left:574.86px;top:279.53px;line-height:10.75px;font-size:7.75px;font-family:'Liberation Serif',sans-serif;color:#000;font-weight:normal;white-space:nowrap;transform:translateX(-50%);">Khoản</div>
<div class="t" style="position:absolute;left:574.86px;top:290.28px;line-height:10.75px;font-size:7.75px;font-family:'Liberation Serif',sans-serif;color:#000;font-weight:normal;white-space:nowrap;transform:translateX(-50%);">g cách</div>
<div class="t" style="position:absolute;left:574.86px;top:301.03px;line-height:10.75px;font-size:7.75px;font-family:'Liberation Serif',sans-serif;color:#000;font-weight:normal;white-space:nowrap;transform:translateX(-50%);">TK</div>
<div class="t" style="position:absolute;left:574.86px;top:311.78px;line-height:10.75px;font-size:7.75px;font-family:'Liberation Serif',sans-serif;color:#000;font-weight:normal;white-space:nowrap;transform:translateX(-50%);">(m)</div>
<div class="t" style="position:absolute;left:599.92px;top:279.53px;line-height:10.75px;font-size:7.75px;font-family:'Liberation Serif',sans-serif;color:#000;font-weight:normal;white-space:nowrap;transform:translateX(-50%);">Khoản</div>
<div class="t" style="position:absolute;left:599.92px;top:290.28px;line-height:10.75px;font-size:7.75px;font-family:'Liberation Serif',sans-serif;color:#000;font-weight:normal;white-space:nowrap;transform:translateX(-50%);">g cách</div>
<div class="t" style="position:absolute;left:599.92px;top:301.03px;line-height:10.75px;font-size:7.75px;font-family:'Liberation Serif',sans-serif;color:#000;font-weight:normal;white-space:nowrap;transform:translateX(-50%);">TT</div>
<div class="t" style="position:absolute;left:599.92px;top:311.78px;line-height:10.75px;font-size:7.75px;font-family:'Liberation Serif',sans-serif;color:#000;font-weight:normal;white-space:nowrap;transform:translateX(-50%);">(m)</div>
<div class="t" style="position:absolute;left:624.98px;top:284.90px;line-height:10.75px;font-size:7.75px;font-family:'Liberation Serif',sans-serif;color:#000;font-weight:normal;white-space:nowrap;transform:translateX(-50%);">Chênh</div>
<div class="t" style="position:absolute;left:624.98px;top:295.65px;line-height:10.75px;font-size:7.75px;font-family:'Liberation Serif',sans-serif;color:#000;font-weight:normal;white-space:nowrap;transform:translateX(-50%);">KC</div>
<div class="t" style="position:absolute;left:624.98px;top:306.40px;line-height:10.75px;font-size:7.75px;font-family:'Liberation Serif',sans-serif;color:#000;font-weight:normal;white-space:nowrap;transform:translateX(-50%);">(m)</div>
<div class="t" style="position:absolute;left:650.04px;top:284.90px;line-height:10.75px;font-size:7.75px;font-family:'Liberation Serif',sans-serif;color:#000;font-weight:normal;white-space:nowrap;transform:translateX(-50%);">Cao</div>
<div class="t" style="position:absolute;left:650.04px;top:295.65px;line-height:10.75px;font-size:7.75px;font-family:'Liberation Serif',sans-serif;color:#000;font-weight:normal;white-space:nowrap;transform:translateX(-50%);">độ TK</div>
<div class="t" style="position:absolute;left:650.04px;top:306.40px;line-height:10.75px;font-size:7.75px;font-family:'Liberation Serif',sans-serif;color:#000;font-weight:normal;white-space:nowrap;transform:translateX(-50%);">(m)</div>
<div class="t" style="position:absolute;left:675.10px;top:284.90px;line-height:10.75px;font-size:7.75px;font-family:'Liberation Serif',sans-serif;color:#000;font-weight:normal;white-space:nowrap;transform:translateX(-50%);">Cao</div>
<div class="t" style="position:absolute;left:675.10px;top:295.65px;line-height:10.75px;font-size:7.75px;font-family:'Liberation Serif',sans-serif;color:#000;font-weight:normal;white-space:nowrap;transform:translateX(-50%);">độ TT</div>
<div class="t" style="position:absolute;left:675.10px;top:306.40px;line-height:10.75px;font-size:7.75px;font-family:'Liberation Serif',sans-serif;color:#000;font-weight:normal;white-space:nowrap;transform:translateX(-50%);">(m)</div>
<div class="t" style="position:absolute;left:700.16px;top:284.90px;line-height:10.75px;font-size:7.75px;font-family:'Liberation Serif',sans-serif;color:#000;font-weight:normal;white-space:nowrap;transform:translateX(-50%);">Chênh</div>
<div class="t" style="position:absolute;left:700.16px;top:295.65px;line-height:10.75px;font-size:7.75px;font-family:'Liberation Serif',sans-serif;color:#000;font-weight:normal;white-space:nowrap;transform:translateX(-50%);">cao</div>
<div class="t" style="position:absolute;left:700.16px;top:306.40px;line-height:10.75px;font-size:7.75px;font-family:'Liberation Serif',sans-serif;color:#000;font-weight:normal;white-space:nowrap;transform:translateX(-50%);">(m)</div>
<div class="t" style="position:absolute;left:725.22px;top:279.53px;line-height:10.75px;font-size:7.75px;font-family:'Liberation Serif',sans-serif;color:#000;font-weight:normal;white-space:nowrap;transform:translateX(-50%);">Khoản</div>
<div class="t" style="position:absolute;left:725.22px;top:290.28px;line-height:10.75px;font-size:7.75px;font-family:'Liberation Serif',sans-serif;color:#000;font-weight:normal;white-space:nowrap;transform:translateX(-50%);">g cách</div>
<div class="t" style="position:absolute;left:725.22px;top:301.03px;line-height:10.75px;font-size:7.75px;font-family:'Liberation Serif',sans-serif;color:#000;font-weight:normal;white-space:nowrap;transform:translateX(-50%);">TK</div>
<div class="t" style="position:absolute;left:725.22px;top:311.78px;line-height:10.75px;font-size:7.75px;font-family:'Liberation Serif',sans-serif;color:#000;font-weight:normal;white-space:nowrap;transform:translateX(-50%);">(m)</div>
<div class="t" style="position:absolute;left:750.28px;top:279.53px;line-height:10.75px;font-size:7.75px;font-family:'Liberation Serif',sans-serif;color:#000;font-weight:normal;white-space:nowrap;transform:translateX(-50%);">Khoản</div>
<div class="t" style="position:absolute;left:750.28px;top:290.28px;line-height:10.75px;font-size:7.75px;font-family:'Liberation Serif',sans-serif;color:#000;font-weight:normal;white-space:nowrap;transform:translateX(-50%);">g cách</div>
<div class="t" style="position:absolute;left:750.28px;top:301.03px;line-height:10.75px;font-size:7.75px;font-family:'Liberation Serif',sans-serif;color:#000;font-weight:normal;white-space:nowrap;transform:translateX(-50%);">TT</div>
<div class="t" style="position:absolute;left:750.28px;top:311.78px;line-height:10.75px;font-size:7.75px;font-family:'Liberation Serif',sans-serif;color:#000;font-weight:normal;white-space:nowrap;transform:translateX(-50%);">(m)</div>
<div class="t" style="position:absolute;left:775.34px;top:284.90px;line-height:10.75px;font-size:7.75px;font-family:'Liberation Serif',sans-serif;color:#000;font-weight:normal;white-space:nowrap;transform:translateX(-50%);">Chênh</div>
<div class="t" style="position:absolute;left:775.34px;top:295.65px;line-height:10.75px;font-size:7.75px;font-family:'Liberation Serif',sans-serif;color:#000;font-weight:normal;white-space:nowrap;transform:translateX(-50%);">KC</div>
<div class="t" style="position:absolute;left:775.34px;top:306.40px;line-height:10.75px;font-size:7.75px;font-family:'Liberation Serif',sans-serif;color:#000;font-weight:normal;white-space:nowrap;transform:translateX(-50%);">(m)</div>
<div class="t" style="position:absolute;left:800.40px;top:284.90px;line-height:10.75px;font-size:7.75px;font-family:'Liberation Serif',sans-serif;color:#000;font-weight:normal;white-space:nowrap;transform:translateX(-50%);">Cao</div>
<div class="t" style="position:absolute;left:800.40px;top:295.65px;line-height:10.75px;font-size:7.75px;font-family:'Liberation Serif',sans-serif;color:#000;font-weight:normal;white-space:nowrap;transform:translateX(-50%);">độ TK</div>
<div class="t" style="position:absolute;left:800.40px;top:306.40px;line-height:10.75px;font-size:7.75px;font-family:'Liberation Serif',sans-serif;color:#000;font-weight:normal;white-space:nowrap;transform:translateX(-50%);">(m)</div>
<div class="t" style="position:absolute;left:825.46px;top:284.90px;line-height:10.75px;font-size:7.75px;font-family:'Liberation Serif',sans-serif;color:#000;font-weight:normal;white-space:nowrap;transform:translateX(-50%);">Cao</div>
<div class="t" style="position:absolute;left:825.46px;top:295.65px;line-height:10.75px;font-size:7.75px;font-family:'Liberation Serif',sans-serif;color:#000;font-weight:normal;white-space:nowrap;transform:translateX(-50%);">độ TT</div>
<div class="t" style="position:absolute;left:825.46px;top:306.40px;line-height:10.75px;font-size:7.75px;font-family:'Liberation Serif',sans-serif;color:#000;font-weight:normal;white-space:nowrap;transform:translateX(-50%);">(m)</div>
<div class="t" style="position:absolute;left:850.52px;top:284.90px;line-height:10.75px;font-size:7.75px;font-family:'Liberation Serif',sans-serif;color:#000;font-weight:normal;white-space:nowrap;transform:translateX(-50%);">Chênh</div>
<div class="t" style="position:absolute;left:850.52px;top:295.65px;line-height:10.75px;font-size:7.75px;font-family:'Liberation Serif',sans-serif;color:#000;font-weight:normal;white-space:nowrap;transform:translateX(-50%);">cao</div>
<div class="t" style="position:absolute;left:850.52px;top:306.40px;line-height:10.75px;font-size:7.75px;font-family:'Liberation Serif',sans-serif;color:#000;font-weight:normal;white-space:nowrap;transform:translateX(-50%);">(m)</div>
<div class="t" style="position:absolute;left:36.65px;top:322.75px;line-height:10.60px;font-size:7.75px;font-family:'Liberation Serif',sans-serif;color:#000;font-weight:normal;white-space:nowrap;transform:translateX(-100%);">1</div>
<div class="t" style="position:absolute;left:39.85px;top:322.75px;line-height:10.60px;font-size:7.75px;font-family:'Liberation Serif',sans-serif;color:#000;font-weight:normal;white-space:nowrap;">H6</div>
<div class="t" style="position:absolute;left:109.65px;top:322.75px;line-height:10.60px;font-size:7.75px;font-family:'Liberation Serif',sans-serif;color:#000;font-weight:normal;white-space:nowrap;transform:translateX(-100%);">Km2+619.70</div>
<div class="t" style="position:absolute;left:134.71px;top:322.75px;line-height:10.60px;font-size:7.75px;font-family:'Liberation Serif',sans-serif;color:#000;font-weight:normal;white-space:nowrap;transform:translateX(-100%);">6.81</div>
<div class="t" style="position:absolute;left:159.77px;top:322.75px;line-height:10.60px;font-size:7.75px;font-family:'Liberation Serif',sans-serif;color:#000;font-weight:normal;white-space:nowrap;transform:translateX(-100%);">6.90</div>
<div class="t" style="position:absolute;left:184.83px;top:322.75px;line-height:10.60px;font-size:7.75px;font-family:'Liberation Serif',sans-serif;color:#000;font-weight:normal;white-space:nowrap;transform:translateX(-100%);">0.09</div>
<div class="t" style="position:absolute;left:209.89px;top:322.75px;line-height:10.60px;font-size:7.75px;font-family:'Liberation Serif',sans-serif;color:#000;font-weight:normal;white-space:nowrap;transform:translateX(-100%);">176.22</div>
<div class="t" style="position:absolute;left:234.95px;top:322.75px;line-height:10.60px;font-size:7.75px;font-family:'Liberation Serif',sans-serif;color:#000;font-weight:normal;white-space:nowrap;transform:translateX(-100%);">176.21</div>
<div class="t" style="position:absolute;left:260.01px;top:322.75px;line-height:10.60px;font-size:7.75px;font-family:'Liberation Serif',sans-serif;color:#000;font-weight:normal;white-space:nowrap;transform:translateX(-100%);">-0.01</div>
<div class="t" style="position:absolute;left:460.49px;top:322.75px;line-height:10.60px;font-size:7.75px;font-family:'Liberation Serif',sans-serif;color:#000;font-weight:normal;white-space:nowrap;transform:translateX(-100%);">-0.07</div>
<div class="t" style="position:absolute;left:485.55px;top:322.75px;line-height:10.60px;font-size:7.75px;font-family:'Liberation Serif',sans-serif;color:#000;font-weight:normal;white-space:nowrap;transform:translateX(-100%);">-0.07</div>
<div class="t" style="position:absolute;left:510.61px;top:322.75px;line-height:10.60px;font-size:7.75px;font-family:'Liberation Serif',sans-serif;color:#000;font-weight:normal;white-space:nowrap;transform:translateX(-100%);">175.98</div>
<div class="t" style="position:absolute;left:535.67px;top:322.75px;line-height:10.60px;font-size:7.75px;font-family:'Liberation Serif',sans-serif;color:#000;font-weight:normal;white-space:nowrap;transform:translateX(-100%);">175.98</div>
<div class="t" style="position:absolute;left:736.15px;top:322.75px;line-height:10.60px;font-size:7.75px;font-family:'Liberation Serif',sans-serif;color:#000;font-weight:normal;white-space:nowrap;transform:translateX(-100%);">6.30</div>
<div class="t" style="position:absolute;left:761.21px;top:322.75px;line-height:10.60px;font-size:7.75px;font-family:'Liberation Serif',sans-serif;color:#000;font-weight:normal;white-space:nowrap;transform:translateX(-100%);">6.39</div>
<div class="t" style="position:absolute;left:786.27px;top:322.75px;line-height:10.60px;font-size:7.75px;font-family:'Liberation Serif',sans-serif;color:#000;font-weight:normal;white-space:nowrap;transform:translateX(-100%);">0.09</div>
<div class="t" style="position:absolute;left:811.33px;top:322.75px;line-height:10.60px;font-size:7.75px;font-family:'Liberation Serif',sans-serif;color:#000;font-weight:normal;white-space:nowrap;transform:translateX(-100%);">175.76</div>
<div class="t" style="position:absolute;left:836.39px;top:322.75px;line-height:10.60px;font-size:7.75px;font-family:'Liberation Serif',sans-serif;color:#000;font-weight:normal;white-space:nowrap;transform:translateX(-100%);">175.75</div>
<div class="t" style="position:absolute;left:861.45px;top:322.75px;line-height:10.60px;font-size:7.75px;font-family:'Liberation Serif',sans-serif;color:#000;font-weight:normal;white-space:nowrap;transform:translateX(-100%);">-0.01</div>
<div class="t" style="position:absolute;left:36.65px;top:333.39px;line-height:10.60px;font-size:7.75px;font-family:'Liberation Serif',sans-serif;color:#000;font-weight:normal;white-space:nowrap;transform:translateX(-100%);">2</div>
<div class="t" style="position:absolute;left:61.80px;top:333.39px;line-height:10.60px;font-size:7.75px;font-family:'Liberation Serif',sans-serif;color:#000;font-weight:normal;white-space:nowrap;transform:translateX(-100%);">61</div>
<div class="t" style="position:absolute;left:109.65px;top:333.39px;line-height:10.60px;font-size:7.75px;font-family:'Liberation Serif',sans-serif;color:#000;font-weight:normal;white-space:nowrap;transform:translateX(-100%);">Km2+624.26</div>
<div class="t" style="position:absolute;left:134.71px;top:333.39px;line-height:10.60px;font-size:7.75px;font-family:'Liberation Serif',sans-serif;color:#000;font-weight:normal;white-space:nowrap;transform:translateX(-100%);">6.02</div>
<div class="t" style="position:absolute;left:159.77px;top:333.39px;line-height:10.60px;font-size:7.75px;font-family:'Liberation Serif',sans-serif;color:#000;font-weight:normal;white-space:nowrap;transform:translateX(-100%);">6.04</div>
<div class="t" style="position:absolute;left:184.83px;top:333.39px;line-height:10.60px;font-size:7.75px;font-family:'Liberation Serif',sans-serif;color:#000;font-weight:normal;white-space:nowrap;transform:translateX(-100%);">0.02</div>
<div class="t" style="position:absolute;left:209.89px;top:333.39px;line-height:10.60px;font-size:7.75px;font-family:'Liberation Serif',sans-serif;color:#000;font-weight:normal;white-space:nowrap;transform:translateX(-100%);">175.96</div>
<div class="t" style="position:absolute;left:234.95px;top:333.39px;line-height:10.60px;font-size:7.75px;font-family:'Liberation Serif',sans-serif;color:#000;font-weight:normal;white-space:nowrap;transform:translateX(-100%);">175.95</div>
<div class="t" style="position:absolute;left:260.01px;top:333.39px;line-height:10.60px;font-size:7.75px;font-family:'Liberation Serif',sans-serif;color:#000;font-weight:normal;white-space:nowrap;transform:translateX(-100%);">-0.01</div>
<div class="t" style="position:absolute;left:460.49px;top:333.39px;line-height:10.60px;font-size:7.75px;font-family:'Liberation Serif',sans-serif;color:#000;font-weight:normal;white-space:nowrap;transform:translateX(-100%);">-0.08</div>
<div class="t" style="position:absolute;left:485.55px;top:333.39px;line-height:10.60px;font-size:7.75px;font-family:'Liberation Serif',sans-serif;color:#000;font-weight:normal;white-space:nowrap;transform:translateX(-100%);">-0.08</div>
<div class="t" style="position:absolute;left:510.61px;top:333.39px;line-height:10.60px;font-size:7.75px;font-family:'Liberation Serif',sans-serif;color:#000;font-weight:normal;white-space:nowrap;transform:translateX(-100%);">175.81</div>
<div class="t" style="position:absolute;left:535.67px;top:333.39px;line-height:10.60px;font-size:7.75px;font-family:'Liberation Serif',sans-serif;color:#000;font-weight:normal;white-space:nowrap;transform:translateX(-100%);">175.81</div>
<div class="t" style="position:absolute;left:736.15px;top:333.39px;line-height:10.60px;font-size:7.75px;font-family:'Liberation Serif',sans-serif;color:#000;font-weight:normal;white-space:nowrap;transform:translateX(-100%);">6.17</div>
<div class="t" style="position:absolute;left:761.21px;top:333.39px;line-height:10.60px;font-size:7.75px;font-family:'Liberation Serif',sans-serif;color:#000;font-weight:normal;white-space:nowrap;transform:translateX(-100%);">6.19</div>
<div class="t" style="position:absolute;left:786.27px;top:333.39px;line-height:10.60px;font-size:7.75px;font-family:'Liberation Serif',sans-serif;color:#000;font-weight:normal;white-space:nowrap;transform:translateX(-100%);">0.02</div>
<div class="t" style="position:absolute;left:811.33px;top:333.39px;line-height:10.60px;font-size:7.75px;font-family:'Liberation Serif',sans-serif;color:#000;font-weight:normal;white-space:nowrap;transform:translateX(-100%);">175.66</div>
<div class="t" style="position:absolute;left:836.39px;top:333.39px;line-height:10.60px;font-size:7.75px;font-family:'Liberation Serif',sans-serif;color:#000;font-weight:normal;white-space:nowrap;transform:translateX(-100%);">175.65</div>
<div class="t" style="position:absolute;left:861.45px;top:333.39px;line-height:10.60px;font-size:7.75px;font-family:'Liberation Serif',sans-serif;color:#000;font-weight:normal;white-space:nowrap;transform:translateX(-100%);">-0.01</div>
<div class="t" style="position:absolute;left:36.65px;top:344.03px;line-height:10.60px;font-size:7.75px;font-family:'Liberation Serif',sans-serif;color:#000;font-weight:normal;white-space:nowrap;transform:translateX(-100%);">3</div>
<div class="t" style="position:absolute;left:39.85px;top:344.03px;line-height:10.60px;font-size:7.75px;font-family:'Liberation Serif',sans-serif;color:#000;font-weight:normal;white-space:nowrap;">TC15</div>
<div class="t" style="position:absolute;left:109.65px;top:344.03px;line-height:10.60px;font-size:7.75px;font-family:'Liberation Serif',sans-serif;color:#000;font-weight:normal;white-space:nowrap;transform:translateX(-100%);">Km2+626.23</div>
<div class="t" style="position:absolute;left:134.71px;top:344.03px;line-height:10.60px;font-size:7.75px;font-family:'Liberation Serif',sans-serif;color:#000;font-weight:normal;white-space:nowrap;transform:translateX(-100%);">5.99</div>
<div class="t" style="position:absolute;left:159.77px;top:344.03px;line-height:10.60px;font-size:7.75px;font-family:'Liberation Serif',sans-serif;color:#000;font-weight:normal;white-space:nowrap;transform:translateX(-100%);">6.02</div>
<div class="t" style="position:absolute;left:184.83px;top:344.03px;line-height:10.60px;font-size:7.75px;font-family:'Liberation Serif',sans-serif;color:#000;font-weight:normal;white-space:nowrap;transform:translateX(-100%);">0.03</div>
<div class="t" style="position:absolute;left:209.89px;top:344.03px;line-height:10.60px;font-size:7.75px;font-family:'Liberation Serif',sans-serif;color:#000;font-weight:normal;white-space:nowrap;transform:translateX(-100%);">175.86</div>
<div class="t" style="position:absolute;left:234.95px;top:344.03px;line-height:10.60px;font-size:7.75px;font-family:'Liberation Serif',sans-serif;color:#000;font-weight:normal;white-space:nowrap;transform:translateX(-100%);">175.86</div>
<div class="t" style="position:absolute;left:460.49px;top:344.03px;line-height:10.60px;font-size:7.75px;font-family:'Liberation Serif',sans-serif;color:#000;font-weight:normal;white-space:nowrap;transform:translateX(-100%);">0.01</div>
<div class="t" style="position:absolute;left:485.55px;top:344.03px;line-height:10.60px;font-size:7.75px;font-family:'Liberation Serif',sans-serif;color:#000;font-weight:normal;white-space:nowrap;transform:translateX(-100%);">0.01</div>
<div class="t" style="position:absolute;left:510.61px;top:344.03px;line-height:10.60px;font-size:7.75px;font-family:'Liberation Serif',sans-serif;color:#000;font-weight:normal;white-space:nowrap;transform:translateX(-100%);">175.74</div>
<div class="t" style="position:absolute;left:535.67px;top:344.03px;line-height:10.60px;font-size:7.75px;font-family:'Liberation Serif',sans-serif;color:#000;font-weight:normal;white-space:nowrap;transform:translateX(-100%);">175.74</div>
<div class="t" style="position:absolute;left:736.15px;top:344.03px;line-height:10.60px;font-size:7.75px;font-family:'Liberation Serif',sans-serif;color:#000;font-weight:normal;white-space:nowrap;transform:translateX(-100%);">6.11</div>
<div class="t" style="position:absolute;left:761.21px;top:344.03px;line-height:10.60px;font-size:7.75px;font-family:'Liberation Serif',sans-serif;color:#000;font-weight:normal;white-space:nowrap;transform:translateX(-100%);">6.14</div>
<div class="t" style="position:absolute;left:786.27px;top:344.03px;line-height:10.60px;font-size:7.75px;font-family:'Liberation Serif',sans-serif;color:#000;font-weight:normal;white-space:nowrap;transform:translateX(-100%);">0.03</div>
<div class="t" style="position:absolute;left:811.33px;top:344.03px;line-height:10.60px;font-size:7.75px;font-family:'Liberation Serif',sans-serif;color:#000;font-weight:normal;white-space:nowrap;transform:translateX(-100%);">175.62</div>
<div class="t" style="position:absolute;left:836.39px;top:344.03px;line-height:10.60px;font-size:7.75px;font-family:'Liberation Serif',sans-serif;color:#000;font-weight:normal;white-space:nowrap;transform:translateX(-100%);">175.62</div>
<div class="t" style="position:absolute;left:36.65px;top:354.67px;line-height:10.60px;font-size:7.75px;font-family:'Liberation Serif',sans-serif;color:#000;font-weight:normal;white-space:nowrap;transform:translateX(-100%);">4</div>
<div class="t" style="position:absolute;left:61.80px;top:354.67px;line-height:10.60px;font-size:7.75px;font-family:'Liberation Serif',sans-serif;color:#000;font-weight:normal;white-space:nowrap;transform:translateX(-100%);">62</div>
<div class="t" style="position:absolute;left:109.65px;top:354.67px;line-height:10.60px;font-size:7.75px;font-family:'Liberation Serif',sans-serif;color:#000;font-weight:normal;white-space:nowrap;transform:translateX(-100%);">Km2+634.26</div>
<div class="t" style="position:absolute;left:134.71px;top:354.67px;line-height:10.60px;font-size:7.75px;font-family:'Liberation Serif',sans-serif;color:#000;font-weight:normal;white-space:nowrap;transform:translateX(-100%);">5.87</div>
<div class="t" style="position:absolute;left:159.77px;top:354.67px;line-height:10.60px;font-size:7.75px;font-family:'Liberation Serif',sans-serif;color:#000;font-weight:normal;white-space:nowrap;transform:translateX(-100%);">5.94</div>
<div class="t" style="position:absolute;left:184.83px;top:354.67px;line-height:10.60px;font-size:7.75px;font-family:'Liberation Serif',sans-serif;color:#000;font-weight:normal;white-space:nowrap;transform:translateX(-100%);">0.07</div>
<div class="t" style="position:absolute;left:209.89px;top:354.67px;line-height:10.60px;font-size:7.75px;font-family:'Liberation Serif',sans-serif;color:#000;font-weight:normal;white-space:nowrap;transform:translateX(-100%);">175.52</div>
<div class="t" style="position:absolute;left:234.95px;top:354.67px;line-height:10.60px;font-size:7.75px;font-family:'Liberation Serif',sans-serif;color:#000;font-weight:normal;white-space:nowrap;transform:translateX(-100%);">175.51</div>
<div class="t" style="position:absolute;left:260.01px;top:354.67px;line-height:10.60px;font-size:7.75px;font-family:'Liberation Serif',sans-serif;color:#000;font-weight:normal;white-space:nowrap;transform:translateX(-100%);">-0.01</div>
<div class="t" style="position:absolute;left:460.49px;top:354.67px;line-height:10.60px;font-size:7.75px;font-family:'Liberation Serif',sans-serif;color:#000;font-weight:normal;white-space:nowrap;transform:translateX(-100%);">-0.01</div>
<div class="t" style="position:absolute;left:485.55px;top:354.67px;line-height:10.60px;font-size:7.75px;font-family:'Liberation Serif',sans-serif;color:#000;font-weight:normal;white-space:nowrap;transform:translateX(-100%);">-0.01</div>
<div class="t" style="position:absolute;left:510.61px;top:354.67px;line-height:10.60px;font-size:7.75px;font-family:'Liberation Serif',sans-serif;color:#000;font-weight:normal;white-space:nowrap;transform:translateX(-100%);">175.51</div>
<div class="t" style="position:absolute;left:535.67px;top:354.67px;line-height:10.60px;font-size:7.75px;font-family:'Liberation Serif',sans-serif;color:#000;font-weight:normal;white-space:nowrap;transform:translateX(-100%);">175.51</div>
<div class="t" style="position:absolute;left:736.15px;top:354.67px;line-height:10.60px;font-size:7.75px;font-family:'Liberation Serif',sans-serif;color:#000;font-weight:normal;white-space:nowrap;transform:translateX(-100%);">5.94</div>
<div class="t" style="position:absolute;left:761.21px;top:354.67px;line-height:10.60px;font-size:7.75px;font-family:'Liberation Serif',sans-serif;color:#000;font-weight:normal;white-space:nowrap;transform:translateX(-100%);">6.01</div>
<div class="t" style="position:absolute;left:786.27px;top:354.67px;line-height:10.60px;font-size:7.75px;font-family:'Liberation Serif',sans-serif;color:#000;font-weight:normal;white-space:nowrap;transform:translateX(-100%);">0.07</div>
<div class="t" style="position:absolute;left:811.33px;top:354.67px;line-height:10.60px;font-size:7.75px;font-family:'Liberation Serif',sans-serif;color:#000;font-weight:normal;white-space:nowrap;transform:translateX(-100%);">175.39</div>
<div class="t" style="position:absolute;left:836.39px;top:354.67px;line-height:10.60px;font-size:7.75px;font-family:'Liberation Serif',sans-serif;color:#000;font-weight:normal;white-space:nowrap;transform:translateX(-100%);">175.38</div>
<div class="t" style="position:absolute;left:861.45px;top:354.67px;line-height:10.60px;font-size:7.75px;font-family:'Liberation Serif',sans-serif;color:#000;font-weight:normal;white-space:nowrap;transform:translateX(-100%);">-0.01</div>
<div class="t" style="position:absolute;left:36.65px;top:365.31px;line-height:10.60px;font-size:7.75px;font-family:'Liberation Serif',sans-serif;color:#000;font-weight:normal;white-space:nowrap;transform:translateX(-100%);">5</div>
<div class="t" style="position:absolute;left:39.85px;top:365.31px;line-height:10.60px;font-size:7.75px;font-family:'Liberation Serif',sans-serif;color:#000;font-weight:normal;white-space:nowrap;">81A</div>
<div class="t" style="position:absolute;left:109.65px;top:365.31px;line-height:10.60px;font-size:7.75px;font-family:'Liberation Serif',sans-serif;color:#000;font-weight:normal;white-space:nowrap;transform:translateX(-100%);">Km2+644.33</div>
<div class="t" style="position:absolute;left:134.71px;top:365.31px;line-height:10.60px;font-size:7.75px;font-family:'Liberation Serif',sans-serif;color:#000;font-weight:normal;white-space:nowrap;transform:translateX(-100%);">5.73</div>
<div class="t" style="position:absolute;left:159.77px;top:365.31px;line-height:10.60px;font-size:7.75px;font-family:'Liberation Serif',sans-serif;color:#000;font-weight:normal;white-space:nowrap;transform:translateX(-100%);">5.82</div>
<div class="t" style="position:absolute;left:184.83px;top:365.31px;line-height:10.60px;font-size:7.75px;font-family:'Liberation Serif',sans-serif;color:#000;font-weight:normal;white-space:nowrap;transform:translateX(-100%);">0.09</div>
<div class="t" style="position:absolute;left:209.89px;top:365.31px;line-height:10.60px;font-size:7.75px;font-family:'Liberation Serif',sans-serif;color:#000;font-weight:normal;white-space:nowrap;transform:translateX(-100%);">175.19</div>
<div class="t" style="position:absolute;left:234.95px;top:365.31px;line-height:10.60px;font-size:7.75px;font-family:'Liberation Serif',sans-serif;color:#000;font-weight:normal;white-space:nowrap;transform:translateX(-100%);">175.18</div>
<div class="t" style="position:absolute;left:260.01px;top:365.31px;line-height:10.60px;font-size:7.75px;font-family:'Liberation Serif',sans-serif;color:#000;font-weight:normal;white-space:nowrap;transform:translateX(-100%);">-0.01</div>
<div class="t" style="position:absolute;left:460.49px;top:365.31px;line-height:10.60px;font-size:7.75px;font-family:'Liberation Serif',sans-serif;color:#000;font-weight:normal;white-space:nowrap;transform:translateX(-100%);">0.08</div>
<div class="t" style="position:absolute;left:485.55px;top:365.31px;line-height:10.60px;font-size:7.75px;font-family:'Liberation Serif',sans-serif;color:#000;font-weight:normal;white-space:nowrap;transform:translateX(-100%);">0.08</div>
<div class="t" style="position:absolute;left:510.61px;top:365.31px;line-height:10.60px;font-size:7.75px;font-family:'Liberation Serif',sans-serif;color:#000;font-weight:normal;white-space:nowrap;transform:translateX(-100%);">175.30</div>
<div class="t" style="position:absolute;left:535.67px;top:365.31px;line-height:10.60px;font-size:7.75px;font-family:'Liberation Serif',sans-serif;color:#000;font-weight:normal;white-space:nowrap;transform:translateX(-100%);">175.30</div>
<div class="t" style="position:absolute;left:736.15px;top:365.31px;line-height:10.60px;font-size:7.75px;font-family:'Liberation Serif',sans-serif;color:#000;font-weight:normal;white-space:nowrap;transform:translateX(-100%);">5.73</div>
<div class="t" style="position:absolute;left:761.21px;top:365.31px;line-height:10.60px;font-size:7.75px;font-family:'Liberation Serif',sans-serif;color:#000;font-weight:normal;white-space:nowrap;transform:translateX(-100%);">5.82</div>
<div class="t" style="position:absolute;left:786.27px;top:365.31px;line-height:10.60px;font-size:7.75px;font-family:'Liberation Serif',sans-serif;color:#000;font-weight:normal;white-space:nowrap;transform:translateX(-100%);">0.09</div>
<div class="t" style="position:absolute;left:811.33px;top:365.31px;line-height:10.60px;font-size:7.75px;font-family:'Liberation Serif',sans-serif;color:#000;font-weight:normal;white-space:nowrap;transform:translateX(-100%);">175.19</div>
<div class="t" style="position:absolute;left:836.39px;top:365.31px;line-height:10.60px;font-size:7.75px;font-family:'Liberation Serif',sans-serif;color:#000;font-weight:normal;white-space:nowrap;transform:translateX(-100%);">175.18</div>
<div class="t" style="position:absolute;left:861.45px;top:365.31px;line-height:10.60px;font-size:7.75px;font-family:'Liberation Serif',sans-serif;color:#000;font-weight:normal;white-space:nowrap;transform:translateX(-100%);">-0.01</div>
<div class="t" style="position:absolute;left:36.65px;top:375.95px;line-height:10.60px;font-size:7.75px;font-family:'Liberation Serif',sans-serif;color:#000;font-weight:normal;white-space:nowrap;transform:translateX(-100%);">6</div>
<div class="t" style="position:absolute;left:61.80px;top:375.95px;line-height:10.60px;font-size:7.75px;font-family:'Liberation Serif',sans-serif;color:#000;font-weight:normal;white-space:nowrap;transform:translateX(-100%);">64</div>
<div class="t" style="position:absolute;left:109.65px;top:375.95px;line-height:10.60px;font-size:7.75px;font-family:'Liberation Serif',sans-serif;color:#000;font-weight:normal;white-space:nowrap;transform:translateX(-100%);">Km2+654.26</div>
<div class="t" style="position:absolute;left:134.71px;top:375.95px;line-height:10.60px;font-size:7.75px;font-family:'Liberation Serif',sans-serif;color:#000;font-weight:normal;white-space:nowrap;transform:translateX(-100%);">5.87</div>
<div class="t" style="position:absolute;left:159.77px;top:375.95px;line-height:10.60px;font-size:7.75px;font-family:'Liberation Serif',sans-serif;color:#000;font-weight:normal;white-space:nowrap;transform:translateX(-100%);">5.94</div>
<div class="t" style="position:absolute;left:184.83px;top:375.95px;line-height:10.60px;font-size:7.75px;font-family:'Liberation Serif',sans-serif;color:#000;font-weight:normal;white-space:nowrap;transform:translateX(-100%);">0.07</div>
<div class="t" style="position:absolute;left:209.89px;top:375.95px;line-height:10.60px;font-size:7.75px;font-family:'Liberation Serif',sans-serif;color:#000;font-weight:normal;white-space:nowrap;transform:translateX(-100%);">175.21</div>
<div class="t" style="position:absolute;left:234.95px;top:375.95px;line-height:10.60px;font-size:7.75px;font-family:'Liberation Serif',sans-serif;color:#000;font-weight:normal;white-space:nowrap;transform:translateX(-100%);">175.20</div>
<div class="t" style="position:absolute;left:260.01px;top:375.95px;line-height:10.60px;font-size:7.75px;font-family:'Liberation Serif',sans-serif;color:#000;font-weight:normal;white-space:nowrap;transform:translateX(-100%);">-0.01</div>
<div class="t" style="position:absolute;left:460.49px;top:375.95px;line-height:10.60px;font-size:7.75px;font-family:'Liberation Serif',sans-serif;color:#000;font-weight:normal;white-space:nowrap;transform:translateX(-100%);">0.01</div>
<div class="t" style="position:absolute;left:485.55px;top:375.95px;line-height:10.60px;font-size:7.75px;font-family:'Liberation Serif',sans-serif;color:#000;font-weight:normal;white-space:nowrap;transform:translateX(-100%);">0.01</div>
<div class="t" style="position:absolute;left:510.61px;top:375.95px;line-height:10.60px;font-size:7.75px;font-family:'Liberation Serif',sans-serif;color:#000;font-weight:normal;white-space:nowrap;transform:translateX(-100%);">175.20</div>
<div class="t" style="position:absolute;left:535.67px;top:375.95px;line-height:10.60px;font-size:7.75px;font-family:'Liberation Serif',sans-serif;color:#000;font-weight:normal;white-space:nowrap;transform:translateX(-100%);">175.19</div>
<div class="t" style="position:absolute;left:560.73px;top:375.95px;line-height:10.60px;font-size:7.75px;font-family:'Liberation Serif',sans-serif;color:#000;font-weight:normal;white-space:nowrap;transform:translateX(-100%);">-0.01</div>
<div class="t" style="position:absolute;left:736.15px;top:375.95px;line-height:10.60px;font-size:7.75px;font-family:'Liberation Serif',sans-serif;color:#000;font-weight:normal;white-space:nowrap;transform:translateX(-100%);">5.93</div>
<div class="t" style="position:absolute;left:761.21px;top:375.95px;line-height:10.60px;font-size:7.75px;font-family:'Liberation Serif',sans-serif;color:#000;font-weight:normal;white-space:nowrap;transform:translateX(-100%);">6.00</div>
<div class="t" style="position:absolute;left:786.27px;top:375.95px;line-height:10.60px;font-size:7.75px;font-family:'Liberation Serif',sans-serif;color:#000;font-weight:normal;white-space:nowrap;transform:translateX(-100%);">0.07</div>
<div class="t" style="position:absolute;left:811.33px;top:375.95px;line-height:10.60px;font-size:7.75px;font-family:'Liberation Serif',sans-serif;color:#000;font-weight:normal;white-space:nowrap;transform:translateX(-100%);">175.08</div>
<div class="t" style="position:absolute;left:836.39px;top:375.95px;line-height:10.60px;font-size:7.75px;font-family:'Liberation Serif',sans-serif;color:#000;font-weight:normal;white-space:nowrap;transform:translateX(-100%);">175.07</div>
<div class="t" style="position:absolute;left:861.45px;top:375.95px;line-height:10.60px;font-size:7.75px;font-family:'Liberation Serif',sans-serif;color:#000;font-weight:normal;white-space:nowrap;transform:translateX(-100%);">-0.01</div>
<div class="t" style="position:absolute;left:162.56px;top:397.23px;line-height:10.60px;font-size:7.9px;font-family:'Liberation Serif',sans-serif;color:#000;font-weight:bold;white-space:nowrap;transform:translateX(-50%);">Tên đơn vị 1</div>
<div class="t" style="position:absolute;left:162.56px;top:461.07px;line-height:10.60px;font-size:7.9px;font-family:'Liberation Serif',sans-serif;color:#000;font-weight:bold;white-space:nowrap;transform:translateX(-50%);">Tên người ký 1</div>
<div class="t" style="position:absolute;left:449.56px;top:397.23px;line-height:10.60px;font-size:7.9px;font-family:'Liberation Serif',sans-serif;color:#000;font-weight:bold;white-space:nowrap;transform:translateX(-50%);">Tên đơn vị 2</div>
<div class="t" style="position:absolute;left:449.56px;top:461.07px;line-height:10.60px;font-size:7.9px;font-family:'Liberation Serif',sans-serif;color:#000;font-weight:bold;white-space:nowrap;transform:translateX(-50%);">Tên người ký 2</div>
<div class="t" style="position:absolute;left:737.75px;top:397.23px;line-height:10.60px;font-size:7.9px;font-family:'Liberation Serif',sans-serif;color:#000;font-weight:bold;white-space:nowrap;transform:translateX(-50%);">Tên đơn vị 3</div>
<div class="t" style="position:absolute;left:737.75px;top:461.07px;line-height:10.60px;font-size:7.9px;font-family:'Liberation Serif',sans-serif;color:#000;font-weight:bold;white-space:nowrap;transform:translateX(-50%);">Tên người ký 3</div>
<div class="t" style="position:absolute;left:912.80px;top:126.66px;line-height:10.60px;font-size:7.75px;font-family:'Liberation Serif',sans-serif;color:#000;font-weight:normal;white-space:nowrap;transform:translateX(-100%);">Max:</div>
<div class="t" style="position:absolute;left:926.80px;top:126.66px;line-height:10.60px;font-size:7.75px;font-family:'Liberation Serif',sans-serif;color:#000;font-weight:normal;white-space:nowrap;transform:translateX(-100%);">72</div>
<div class="t" style="position:absolute;left:930.00px;top:126.66px;line-height:10.60px;font-size:7.75px;font-family:'Liberation Serif',sans-serif;color:#000;font-weight:normal;white-space:nowrap;">lớp</div>
<div style="position:absolute;left:901.00px;top:135.88px;width:13.80px;height:11.44px;border:1px solid #333;background:#fff;"></div>
<div class="t" style="position:absolute;left:912.80px;top:137.30px;line-height:10.60px;font-size:7.75px;font-family:'Liberation Serif',sans-serif;color:#000;font-weight:normal;white-space:nowrap;transform:translateX(-100%);">1</div>
<div style="position:absolute;left:913.90px;top:135.88px;width:14.90px;height:11.44px;border:1px solid #333;background:#fff;"></div>
<div class="t" style="position:absolute;left:926.80px;top:137.30px;line-height:10.60px;font-size:7.75px;font-family:'Liberation Serif',sans-serif;color:#000;font-weight:normal;white-space:nowrap;transform:translateX(-100%);">1</div>
<div style="position:absolute;left:931.30px;top:136.40px;width:20.80px;height:22.50px;background:#dcdcdc;border:0.8px solid #b8b8b8;"></div>
<div style="position:absolute;left:931.30px;top:158.90px;width:20.80px;height:24.00px;background:#dcdcdc;border:0.8px solid #b8b8b8;"></div>
<svg style="position:absolute;left:931px;top:136px" width="21" height="47" viewBox="0 0 21 47"><path d="M5.5 15 L10.5 10.2 L15.5 15 Z" fill="#000"/><path d="M5.5 32 L10.5 37 L15.5 32 Z" fill="#000"/></svg>
<div style="position:absolute;left:1013.00px;top:103.80px;width:11.00px;height:424.50px;background:#e8e8e8;"></div>
<div style="position:absolute;left:1012.60px;top:114.50px;width:0.90px;height:413.50px;background:#c8c8c8;"></div>
<div style="position:absolute;left:1014.60px;top:104.50px;width:8.00px;height:8.50px;background:#fff;border:0.7px solid #d0d0d0;"></div>
<svg style="position:absolute;left:1016px;top:106px" width="5" height="4" viewBox="0 0 5 4"><path d="M0.5 3 L2.5 0.8 L4.5 3 Z" fill="#666"/></svg>
<div style="position:absolute;left:1014.60px;top:113.50px;width:8.00px;height:394.50px;background:#fff;border:0.7px solid #d0d0d0;"></div>
<div style="position:absolute;left:1014.60px;top:519.50px;width:8.00px;height:8.00px;background:#fff;border:0.7px solid #d0d0d0;"></div>
<svg style="position:absolute;left:1016px;top:522px" width="5" height="4" viewBox="0 0 5 4"><path d="M0.5 1 L2.5 3.2 L4.5 1 Z" fill="#666"/></svg>
<div style="position:absolute;left:0.00px;top:527.50px;width:1024.00px;height:15.80px;background:#e6e6e6;"></div>
<div style="position:absolute;left:0.00px;top:527.50px;width:1024.00px;height:0.90px;background:#c6c6c6;"></div>
<svg style="position:absolute;left:12px;top:532px" width="22" height="6" viewBox="0 0 22 6"><path d="M4 0.5 L1.5 3 L4 5.5" fill="none" stroke="#b3b3b3" stroke-width="0.8"/><path d="M17 0.5 L19.5 3 L17 5.5" fill="none" stroke="#b3b3b3" stroke-width="0.8"/></svg>
<div style="position:absolute;left:55.00px;top:529.50px;width:61.00px;height:11.70px;background:#000;"></div>
<div style="position:absolute;left:85.50px;top:531.68px;line-height:8.64px;font-size:7.2px;font-family:'Liberation Sans',sans-serif;color:#dcdcdc;font-weight:normal;white-space:nowrap;transform:translateX(-50%);">Do bang phang</div>
<div style="position:absolute;left:117.50px;top:529.50px;width:42.50px;height:11.70px;background:#ffff00;"></div>
<div style="position:absolute;left:138.75px;top:531.68px;line-height:8.64px;font-size:7.2px;font-family:'Liberation Sans',sans-serif;color:#333;font-weight:normal;white-space:nowrap;transform:translateX(-50%);">Bang doc</div>
<div style="position:absolute;left:162.00px;top:529.50px;width:50.50px;height:11.70px;background:#fdfde8;"></div>
<div style="position:absolute;left:187.25px;top:531.68px;line-height:8.64px;font-size:7.2px;font-family:'Liberation Sans',sans-serif;color:#2a7a40;font-weight:normal;white-space:nowrap;transform:translateX(-50%);">Bang ngang</div>
<div style="position:absolute;left:213.80px;top:529.50px;width:55.00px;height:11.70px;background:#1fb4e8;"></div>
<div style="position:absolute;left:241.30px;top:531.68px;line-height:8.64px;font-size:7.2px;font-family:'Liberation Sans',sans-serif;color:#1d3b55;font-weight:normal;white-space:nowrap;transform:translateX(-50%);">Tong KL MCN</div>
<div style="position:absolute;left:272.50px;top:529.50px;width:50.00px;height:11.70px;background:#1fb4e8;"></div>
<div style="position:absolute;left:297.50px;top:531.68px;line-height:8.64px;font-size:7.2px;font-family:'Liberation Sans',sans-serif;color:#1d3b55;font-weight:normal;white-space:nowrap;transform:translateX(-50%);">Tong KL lop</div>
<div style="position:absolute;left:325.00px;top:529.50px;width:47.00px;height:11.70px;background:#1fb4e8;"></div>
<div style="position:absolute;left:348.50px;top:531.68px;line-height:8.64px;font-size:7.2px;font-family:'Liberation Sans',sans-serif;color:#1d3b55;font-weight:normal;white-space:nowrap;transform:translateX(-50%);">Khoi luong</div>
<div style="position:absolute;left:374.50px;top:529.50px;width:65.50px;height:11.70px;background:#ff0000;"></div>
<div style="position:absolute;left:407.25px;top:531.68px;line-height:8.64px;font-size:7.2px;font-family:'Liberation Sans',sans-serif;color:#fff;font-weight:normal;white-space:nowrap;transform:translateX(-50%);">Bang ngay thang</div>
<div style="position:absolute;left:443.00px;top:529.50px;width:42.50px;height:11.70px;background:#ff0000;"></div>
<div style="position:absolute;left:464.25px;top:531.68px;line-height:8.64px;font-size:7.2px;font-family:'Liberation Sans',sans-serif;color:#fff;font-weight:normal;white-space:nowrap;transform:translateX(-50%);">Thong tin</div>
<div style="position:absolute;left:165.00px;top:540.00px;width:46.00px;height:1.20px;background:#217346;"></div>
<svg style="position:absolute;left:503px;top:530px" width="11" height="11" viewBox="0 0 11 11"><circle cx="5.5" cy="5.5" r="4.3" fill="none" stroke="#8a8a8a" stroke-width="0.9"/><path d="M5.5 3 v5 M3 5.5 h5" stroke="#8a8a8a" stroke-width="0.9"/></svg>
<div style="position:absolute;left:890.80px;top:531.00px;width:0.80px;height:0.80px;background:#b0b0b0;"></div>
<div style="position:absolute;left:890.80px;top:533.00px;width:0.80px;height:0.80px;background:#b0b0b0;"></div>
<div style="position:absolute;left:890.80px;top:535.00px;width:0.80px;height:0.80px;background:#b0b0b0;"></div>
<div style="position:absolute;left:890.80px;top:537.00px;width:0.80px;height:0.80px;background:#b0b0b0;"></div>
<div style="position:absolute;left:890.80px;top:539.00px;width:0.80px;height:0.80px;background:#b0b0b0;"></div>
<div style="position:absolute;left:899.50px;top:532.20px;width:7.20px;height:7.40px;background:#fff;border:0.7px solid #d0d0d0;"></div>
<svg style="position:absolute;left:901px;top:534px" width="4" height="4" viewBox="0 0 4 4"><path d="M3.2 0.3 L1 2 L3.2 3.7 Z" fill="#666"/></svg>
<div style="position:absolute;left:907.50px;top:532.20px;width:94.50px;height:7.40px;background:#fff;border:0.7px solid #d0d0d0;"></div>
<div style="position:absolute;left:1004.50px;top:532.20px;width:7.20px;height:7.40px;background:#fff;border:0.7px solid #d0d0d0;"></div>
<svg style="position:absolute;left:1006.5px;top:534px" width="4" height="4" viewBox="0 0 4 4"><path d="M0.8 0.3 L3 2 L0.8 3.7 Z" fill="#666"/></svg>
<div style="position:absolute;left:0.00px;top:543.20px;width:1024.00px;height:11.40px;background:#f0f0f0;"></div>
<div style="position:absolute;left:3.80px;top:545.64px;line-height:7.32px;font-size:6.1px;font-family:'Liberation Sans',sans-serif;color:#555;font-weight:normal;white-space:nowrap;">Ready</div>
<svg style="position:absolute;left:30px;top:545px" width="8" height="8" viewBox="0 0 8 8"><rect x="0.6" y="2.6" width="6.8" height="5" fill="none" stroke="#8c8c8c" stroke-width="0.8"/><path d="M0.6 4.5 h6.8 M0.6 6 h6.8 M3 2.6 v5" stroke="#8c8c8c" stroke-width="0.6"/><rect x="0.6" y="0.4" width="2.6" height="1.6" fill="#8c8c8c"/><rect x="4.4" y="0.4" width="2.6" height="1.6" fill="#8c8c8c"/></svg>
<div style="position:absolute;left:868.80px;top:543.50px;width:19.20px;height:11.00px;background:#d8d8d8;"></div>
<svg style="position:absolute;left:870px;top:544px" width="150" height="10" viewBox="0 0 150 10">
<path d="M4 2.5 h9 M4 4.5 h9 M4 6.5 h9 M4 8.5 h9" stroke="#6f6f6f" stroke-width="0.8"/><path d="M6.5 1.5 v7.5" stroke="#6f6f6f" stroke-width="0.6"/>
<rect x="25" y="1.5" width="8" height="7" fill="none" stroke="#7a7a7a" stroke-width="0.8"/><path d="M27.5 1.5 v7 M30.5 1.5 v7" stroke="#7a7a7a" stroke-width="0.7"/>
<rect x="45" y="1.5" width="8" height="7" fill="none" stroke="#7a7a7a" stroke-width="0.8"/><path d="M47.5 1.5 v3 h3 v-3" fill="none" stroke="#7a7a7a" stroke-width="0.7"/>
<path d="M61.5 5 h3" stroke="#555" stroke-width="1"/>
<path d="M66 5 h58" stroke="#9a9a9a" stroke-width="0.7"/>
<rect x="93" y="2" width="1.6" height="6" fill="#555"/>
<path d="M121.5 5 h5.5 M124.25 2.3 v5.5" stroke="#555" stroke-width="1"/>
</svg>
<div style="position:absolute;left:1019.00px;top:545.22px;line-height:7.56px;font-size:6.3px;font-family:'Liberation Sans',sans-serif;color:#555;font-weight:normal;white-space:nowrap;transform:translateX(-100%);">100%</div>
<div style="position:absolute;left:0.00px;top:554.50px;width:1024.00px;height:21.50px;background:#1c1c1c;"></div>
<div style="position:absolute;left:549.00px;top:554.50px;width:25.70px;height:21.50px;background:#3b3b3b;"></div>
<svg style="position:absolute;left:0;top:554px" width="1024" height="22" viewBox="0 554 1024 22"><g fill="#fff"><rect x="8.3" y="560.6" width="4" height="4"/><rect x="12.9" y="560" width="4.4" height="4.6"/><rect x="8.3" y="565.2" width="4" height="4"/><rect x="12.9" y="565.2" width="4.4" height="4.6"/></g><circle cx="40" cy="563.3" r="3.7" fill="none" stroke="#fff" stroke-width="1.1"/><path d="M37.4 566 L33.6 569.8" stroke="#fff" stroke-width="1.2"/><g fill="none" stroke="#ddd" stroke-width="0.9"><rect x="60.5" y="561.5" width="5.5" height="7"/><path d="M59.5 560.5 h7.5 M59.5 569.5 h7.5"/></g><rect x="67.6" y="560.6" width="1" height="9" fill="#ddd"/><circle cx="91.5" cy="565" r="6.3" fill="#1b7fd6"/><path d="M85.6 563.5 Q87 558.6 92.5 558.7 Q97.8 559.2 97.9 564.6 L97.9 565.6 L89.6 565.6 Q89.8 568.8 93.8 569 Q95.8 569 97.3 568.2 Q95 571.4 91.2 571.3 Q86.5 571 85.5 566.5 Q86.5 562 90.5 561.5 Q93.5 561.3 94.6 563.3 Z" fill="#3fc48a"/><path d="M89.6 565.6 Q90 562.6 92.6 562.6 Q95.2 562.8 95.3 565.6 Z" fill="#1b7fd6"/><path d="M111 560 h4.5 l1.3 1.3 h6.2 v8.5 h-12 z" fill="#f3c12c"/><rect x="111" y="563" width="12" height="6.8" fill="#ffd75e"/><rect x="115" y="566" width="4" height="3.8" fill="#2a83d6"/><circle cx="143.5" cy="565" r="6.5" fill="#fff"/><circle cx="143.5" cy="565" r="5.9" fill="none" stroke="#1a6cf0" stroke-width="0.8"/><text x="143.5" y="566.8" font-family="Liberation Sans" font-size="4.4" font-weight="bold" fill="#1a6cf0" text-anchor="middle">Zalo</text><path d="M164 570 L170 559.5 L175 561 L173.5 570.5 Z" fill="#8fd3e6"/><path d="M170 559.5 L175 561 L173.5 570.5 Z" fill="#d9f1f7"/><circle cx="196" cy="565" r="6.3" fill="#2a8de0"/><circle cx="196" cy="565" r="4.4" fill="none" stroke="#cfe8ff" stroke-width="0.8"/><path d="M193.5 567 L198.5 562.5" stroke="#fff" stroke-width="1.2"/><rect x="216" y="559" width="11" height="12" fill="#e8f2d2"/><path d="M217 571 L217 565 Q221 567 227 565 V571 Z" fill="#7ac143"/><path d="M220 567 L226.5 558.5" stroke="#f2a900" stroke-width="1.3"/><path d="M218.5 562 h3 M218.5 564 h2" stroke="#333" stroke-width="0.7"/><rect x="242" y="559" width="12" height="12" fill="#001e36"/><rect x="242.5" y="559.5" width="11" height="11" fill="none" stroke="#31a8ff" stroke-width="0.7"/><text x="248" y="567.6" font-family="Liberation Sans" font-size="6" font-weight="bold" fill="#31a8ff" text-anchor="middle">Ps</text><circle cx="274.6" cy="565" r="6.3" fill="#db4437"/><path d="M274.6 565 L269.2 568.2 A6.3 6.3 0 0 0 277.8 570.4 Z" fill="#0f9d58"/><path d="M274.6 565 L280.9 565 A6.3 6.3 0 0 1 277.8 570.4 Z" fill="#f4b400"/><path d="M274.6 565 L269.2 568.2 A6.3 6.3 0 0 1 269.5 561.5 Z" fill="#0f9d58"/><circle cx="274.6" cy="565" r="2.6" fill="#4285f4" stroke="#fff" stroke-width="0.9"/><rect x="276" y="566" width="5" height="5" fill="#9b8b6f"/><rect x="294.5" y="559" width="12" height="12" rx="1.5" fill="#f4f4f4"/><path d="M297 570 L300 561 L305 570 Z" fill="#e03a2f"/><path d="M296 566 L299 570 L296 570 Z" fill="#2faa4a"/><path d="M331.5 558.6 L332.8 559.4 V570.6 L331.5 571.4 L322.5 565.6 L320.5 567.5 L319.3 566.8 V563.2 L320.5 562.5 L322.5 564.4 Z" fill="#1f9cf0"/><path d="M331.5 561.5 L325.2 565 L331.5 568.5 Z" fill="#1c1c1c"/><ellipse cx="352" cy="564" rx="6.5" ry="4.5" fill="#f6f6f6" transform="rotate(-20 352 564)"/><path d="M346.5 563 Q352 560 358 562.5" fill="none" stroke="#d33" stroke-width="1.3"/><path d="M353 566 h4 v5 h-3 z" fill="#1f77c8"/><path d="M375 562 L379.5 565 L375 568 L373.8 567.2 V562.8 Z" fill="#9b6dd6"/><path d="M379 559 L384.5 561.3 V568.7 L379 571 L374.5 566.8 L381.5 559.8 Z" fill="#8c52d4"/><path d="M381 562.7 V567.3 L378 565 Z" fill="#1c1c1c"/><rect x="398.5" y="558.8" width="12.5" height="12.5" fill="#2fa89b"/><rect x="399.2" y="559.5" width="11" height="11" fill="none" stroke="#d6efec" stroke-width="0.6"/><path d="M401.5 569 L404.5 561 L407.5 569 M402.8 566.5 h3.4" fill="none" stroke="#fff" stroke-width="0.9"/><rect x="424" y="558.8" width="12.5" height="12.5" fill="#f4f4f4"/><circle cx="430.25" cy="565" r="4.8" fill="#2d7fd1"/><path d="M427.5 563 h5.5 M427.5 565 h5.5 M427.5 567 h5.5" stroke="#aed3f5" stroke-width="0.7"/><path d="M458 559.3 L463.5 565 L458 570.7 L452.5 565 Z" fill="#2a2a2a" stroke="#555" stroke-width="0.6"/><circle cx="460" cy="569.5" r="1.3" fill="#8a6a3a"/><rect x="477.5" y="558.8" width="12.5" height="12.5" rx="2.5" fill="#fff"/><path d="M480 561.5 L487.5 568.5 M487.5 561.5 L480 568.5 M480 561.5 h7.5 M480 568.5 h7.5" stroke="#111" stroke-width="1.1"/><rect x="503.5" y="558.5" width="4.5" height="4" fill="#3cb4e6"/><path d="M507 563 V561.6 A2.5 2.5 0 0 1 512 561.6 V563" fill="none" stroke="#ccc" stroke-width="1"/><rect x="506" y="563" width="7" height="5.5" fill="#d8d8d8"/><path d="M511 568 L515.5 571.5 M515.5 568.5 V571.5 H512.5" fill="none" stroke="#65d83a" stroke-width="1.3"/><rect x="529.5" y="561" width="12.5" height="8.5" fill="#76c2ee"/><path d="M531 567 L534 563.5 L536.5 566 L538 564.5 L540.5 567.5" fill="none" stroke="#1a5f9a" stroke-width="0.7"/><circle cx="539" cy="563" r="1" fill="#ffe680"/><rect x="558" y="559.2" width="9" height="11.6" fill="#e9f3ec" stroke="#4da36a" stroke-width="0.5"/><rect x="555" y="560.5" width="7.5" height="9" fill="#1d6f42"/><path d="M557 562.3 L560.5 567.7 M560.5 562.3 L557 567.7" stroke="#fff" stroke-width="1"/><path d="M563.5 561.5 v7 M565.5 561.5 v7" stroke="#4da36a" stroke-width="0.6"/><rect x="107.0" y="574.6" width="21.0" height="1.4" fill="#7cb4e8"/><rect x="133.0" y="574.6" width="21.0" height="1.4" fill="#7cb4e8"/><rect x="211.5" y="574.6" width="20.8" height="1.4" fill="#7cb4e8"/><rect x="263.8" y="574.6" width="20.8" height="1.4" fill="#7cb4e8"/><rect x="316.0" y="574.6" width="21.0" height="1.4" fill="#7cb4e8"/><rect x="394.7" y="574.6" width="20.8" height="1.4" fill="#7cb4e8"/><rect x="472.8" y="574.6" width="21.2" height="1.4" fill="#7cb4e8"/><rect x="499.0" y="574.6" width="21.0" height="1.4" fill="#7cb4e8"/><rect x="525.0" y="574.6" width="21.4" height="1.4" fill="#7cb4e8"/><rect x="549.0" y="574.6" width="25.7" height="1.4" fill="#7cb4e8"/><path d="M882.5 567 L885.2 564.2 L887.9 567" fill="none" stroke="#ddd" stroke-width="0.9"/><path d="M894.5 561.5 L897.5 569 L900.5 561.5 M896 561.5 L897.5 565.5" fill="none" stroke="#ddd" stroke-width="0.8"/><path d="M906 563.5 h2 l3 -2.5 v8 l-3 -2.5 h-2 z" fill="none" stroke="#ddd" stroke-width="0.8"/><path d="M912.5 562.5 v5" stroke="#888" stroke-width="0.6"/><rect x="920.5" y="562" width="5" height="5.5" fill="none" stroke="#ddd" stroke-width="0.8"/><path d="M921 560.8 h4 M921 568.8 h4" stroke="#ddd" stroke-width="0.7"/><rect x="932.5" y="561.5" width="9" height="6" fill="none" stroke="#ddd" stroke-width="0.8"/><path d="M935.5 569.3 h3 M937 567.5 v1.8" stroke="#ddd" stroke-width="0.7"/><text x="947" y="567.6" font-family="Liberation Sans" font-size="6.3" fill="#eee">ENG</text><text x="978.5" y="562.3" font-family="Liberation Sans" font-size="6.2" fill="#eee" text-anchor="middle">10:48 AM</text><text x="978.5" y="572.2" font-family="Liberation Sans" font-size="6.2" fill="#eee" text-anchor="middle">1/29/2026</text><path d="M1002 560 h9 v7 h-4.5 l-2 2 v-2 h-2.5 z" fill="none" stroke="#eee" stroke-width="0.8"/><path d="M1003.8 562.3 h5.4 M1003.8 564.3 h5.4" stroke="#eee" stroke-width="0.6"/><circle cx="1010" cy="568.5" r="2.6" fill="#1c1c1c" stroke="#bbb" stroke-width="0.6"/><text x="1010" y="570.2" font-family="Liberation Sans" font-size="4" fill="#eee" text-anchor="middle">3</text></svg>
<svg style="position:absolute;left:0;top:0" width="1024" height="576" viewBox="0 0 1024 576"><rect x="2" y="29.3" width="362.2" height="55.5" fill="none" stroke="#e8141b" stroke-width="2"/><path d="M425.0 5.2 L375.6 15.0" stroke="#e8141b" stroke-width="2.0" stroke-linecap="round"/><path d="M366.8 16.8 L375.7 10.3 L377.5 19.4 Z" fill="#e8141b"/><path d="M71.2 461.0 L85.4 514.3" stroke="#e8141b" stroke-width="2.0" stroke-linecap="round"/><path d="M87.5 522.0 L81.3 514.3 L89.0 512.3 Z" fill="#e8141b"/><path d="M128.0 489.0 L135.8 516.7" stroke="#e8141b" stroke-width="2.0" stroke-linecap="round"/><path d="M138.0 524.4 L131.7 516.8 L139.4 514.7 Z" fill="#e8141b"/><path d="M173.4 496.0 L184.0 517.8" stroke="#e8141b" stroke-width="2.0" stroke-linecap="round"/><path d="M187.5 525.0 L180.0 518.7 L187.2 515.2 Z" fill="#e8141b"/><path d="M236.6 501.6 L243.6 517.1" stroke="#e8141b" stroke-width="2.0" stroke-linecap="round"/><path d="M246.9 524.4 L239.5 517.8 L246.8 514.6 Z" fill="#e8141b"/><path d="M287.5 504.7 L297.7 518.0" stroke="#e8141b" stroke-width="2.0" stroke-linecap="round"/><path d="M302.5 524.4 L293.9 519.7 L300.2 514.8 Z" fill="#e8141b"/><path d="M331.2 500.6 L342.6 518.8" stroke="#e8141b" stroke-width="2.0" stroke-linecap="round"/><path d="M346.9 525.6 L338.7 520.1 L345.5 515.9 Z" fill="#e8141b"/></svg>
</body></html>
